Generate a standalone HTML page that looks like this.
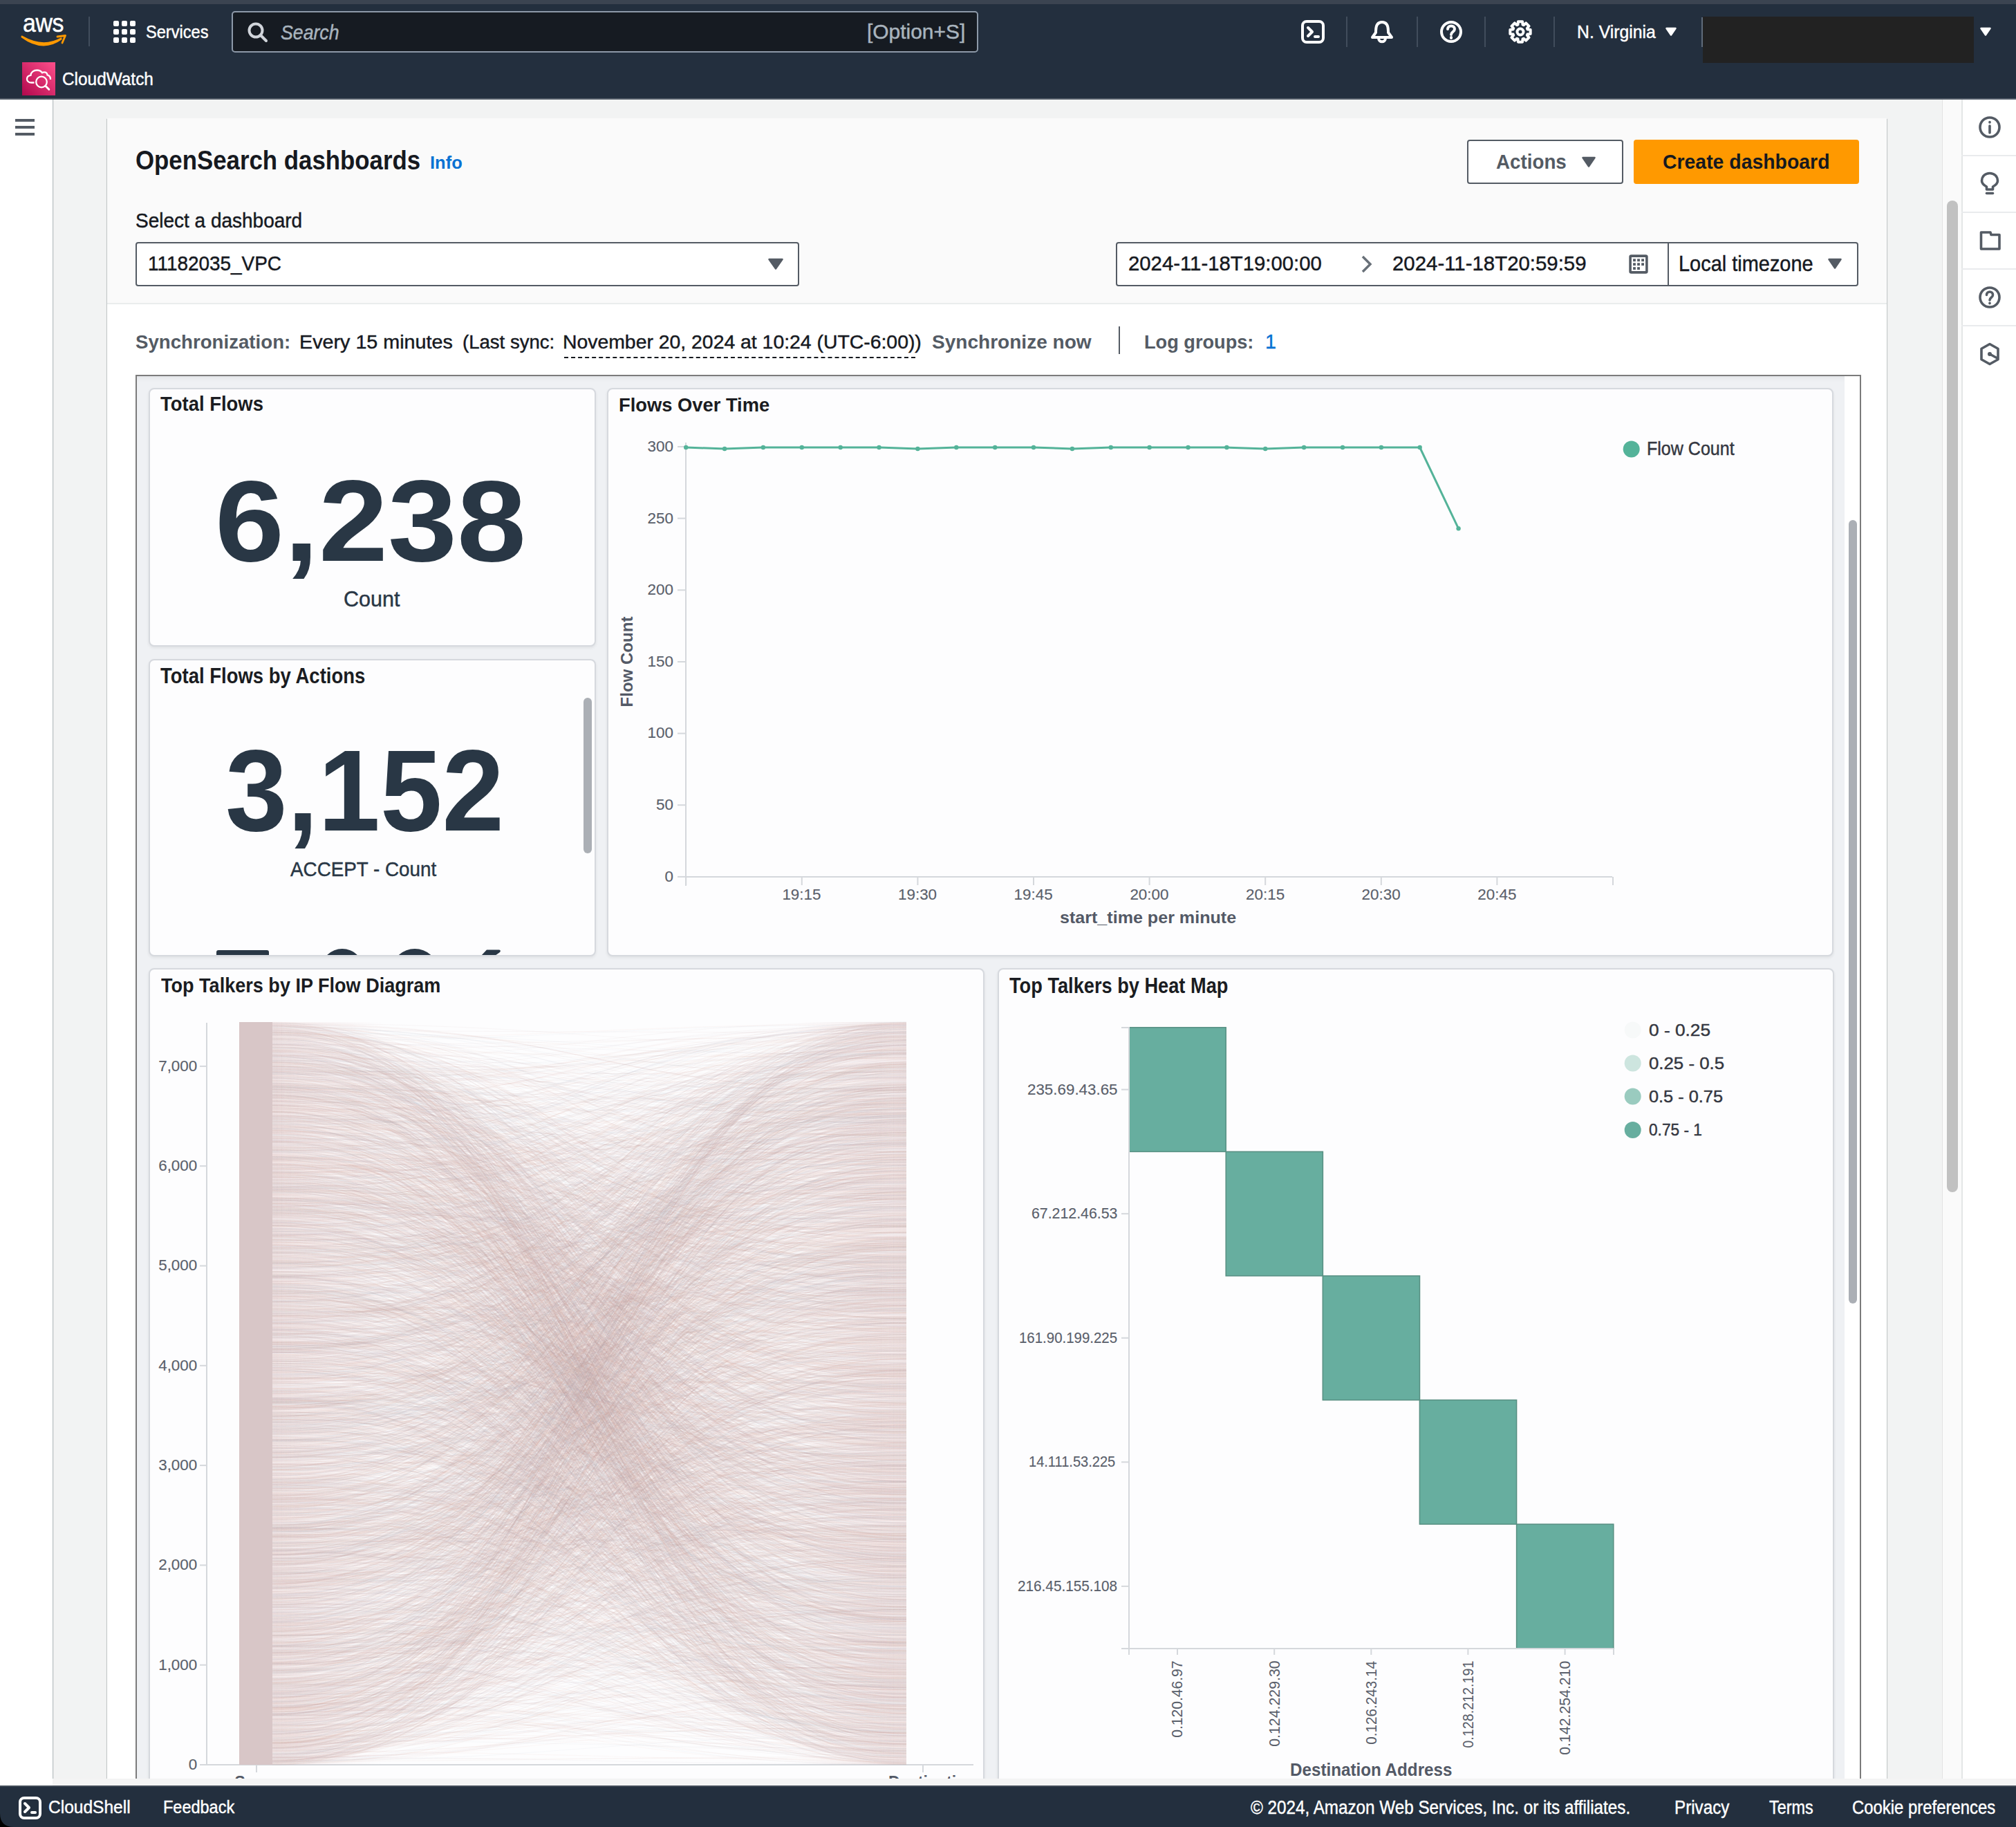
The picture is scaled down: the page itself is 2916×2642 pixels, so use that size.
<!DOCTYPE html><html><head><meta charset="utf-8"><style>
html,body{margin:0;padding:0;}
body{width:2916px;height:2642px;position:relative;overflow:hidden;background:#f2f3f3;font-family:"Liberation Sans",sans-serif;}
.t{position:absolute;white-space:nowrap;line-height:1;transform-origin:0 0;}
.r{position:absolute;}
</style></head><body>
<div class="r" style="left:0px;top:0px;width:2916px;height:6px;background:#3b4451;"></div>
<div class="r" style="left:0px;top:6px;width:2916px;height:138px;background:#232f3e;"></div>
<div class="r" style="left:0px;top:142px;width:2916px;height:2px;background:#535c68;"></div>
<div class="r" style="left:0px;top:144px;width:76px;height:2438px;background:#ffffff;box-shadow:1px 0 1px rgba(0,28,36,.25);"></div>
<div class="r" style="left:22px;top:172px;width:28px;height:4px;background:#545b64;"></div>
<div class="r" style="left:22px;top:182px;width:28px;height:4px;background:#545b64;"></div>
<div class="r" style="left:22px;top:192px;width:28px;height:4px;background:#545b64;"></div>
<div class="r" style="left:2809px;top:144px;width:28px;height:2438px;background:#fafafa;border-left:1px solid #e3e3e3;box-sizing:border-box;"></div>
<div class="r" style="left:2837px;top:144px;width:79px;height:2438px;background:#ffffff;border-left:2px solid #e4e6e6;box-sizing:border-box;"></div>
<div class="r" style="left:2837px;top:224px;width:79px;height:2px;background:#e9ebed;"></div>
<div class="r" style="left:2837px;top:306px;width:79px;height:2px;background:#e9ebed;"></div>
<div class="r" style="left:2837px;top:388px;width:79px;height:2px;background:#e9ebed;"></div>
<div class="r" style="left:2837px;top:470px;width:79px;height:2px;background:#e9ebed;"></div>
<div class="r" style="left:2816px;top:290px;width:16px;height:1434px;background:#c1c1c1;border-radius:8px;"></div>
<div class="r" style="left:155px;top:171px;width:2574px;height:2401px;background:#ffffff;box-shadow:0 1px 1px 0 rgba(0,28,36,.3),1px 1px 1px 0 rgba(0,28,36,.15),-1px 1px 1px 0 rgba(0,28,36,.15);"></div>
<div class="r" style="left:155px;top:171px;width:2574px;height:267px;background:#fafafa;"></div>
<div class="r" style="left:155px;top:438px;width:2574px;height:2px;background:#eaeded;"></div>
<div class="r" style="left:196px;top:542px;width:2496px;height:2030px;background:#eff1f4;border:2px solid #7b7b7b;border-bottom:none;box-sizing:border-box;box-shadow:inset 0 6px 6px -3px rgba(0,0,0,0.06);"></div>
<div class="r" style="left:2668px;top:544px;width:22px;height:2028px;background:#ffffff;"></div>
<div class="r" style="left:2674px;top:752px;width:12px;height:1133px;background:#abafb5;border-radius:6px;"></div>
<div class="r" style="left:215px;top:561px;width:647px;height:374px;background:;background:#fdfdfe;border:2px solid #d6d9de;box-sizing:border-box;border-radius:8px;box-shadow:0 2px 4px rgba(0,0,0,.07);"></div>
<div class="r" style="left:215px;top:953px;width:647px;height:430px;background:;background:#fdfdfe;border:2px solid #d6d9de;box-sizing:border-box;border-radius:8px;box-shadow:0 2px 4px rgba(0,0,0,.07);overflow:hidden;"></div>
<div class="r" style="left:878px;top:561px;width:1774px;height:822px;background:;background:#fdfdfe;border:2px solid #d6d9de;box-sizing:border-box;border-radius:8px;box-shadow:0 2px 4px rgba(0,0,0,.07);"></div>
<div class="r" style="left:215px;top:1400px;width:1209px;height:1200px;background:;background:#fdfdfe;border:2px solid #d6d9de;box-sizing:border-box;border-radius:8px;box-shadow:0 2px 4px rgba(0,0,0,.07);"></div>
<div class="r" style="left:1443px;top:1400px;width:1210px;height:1200px;background:;background:#fdfdfe;border:2px solid #d6d9de;box-sizing:border-box;border-radius:8px;box-shadow:0 2px 4px rgba(0,0,0,.07);"></div>
<div class="t" style="left:32.9px;top:15.8px;font-size:36.50px;color:#ffffff;transform:scaleX(0.9284);-webkit-text-stroke:0.45px #ffffff;letter-spacing:-0.5px;">aws</div>
<svg class="r" style="left:28px;top:46px;" width="72" height="24" viewBox="0 0 72 24"><path d="M3.5 6.3 Q34 24 60.5 9.2 L60.8 10.6 Q34 30 3.3 7.5 Z" fill="#ff9900" stroke="#ff9900" stroke-width="1.6" stroke-linejoin="round"/><path d="M55 7 L66.5 5.5 L62 16" stroke="#ff9900" stroke-width="2.8" fill="none" stroke-linecap="round" stroke-linejoin="round"/></svg>
<div class="r" style="left:128px;top:24px;width:2px;height:43px;background:#414d5c;"></div>
<svg class="r" style="left:164px;top:30px;" width="32" height="32" viewBox="0 0 32 32"><rect x="0" y="0" width="8" height="8" rx="2" fill="#fff"/><rect x="0" y="12" width="8" height="8" rx="2" fill="#fff"/><rect x="0" y="24" width="8" height="8" rx="2" fill="#fff"/><rect x="12" y="0" width="8" height="8" rx="2" fill="#fff"/><rect x="12" y="12" width="8" height="8" rx="2" fill="#fff"/><rect x="12" y="24" width="8" height="8" rx="2" fill="#fff"/><rect x="24" y="0" width="8" height="8" rx="2" fill="#fff"/><rect x="24" y="12" width="8" height="8" rx="2" fill="#fff"/><rect x="24" y="24" width="8" height="8" rx="2" fill="#fff"/></svg>
<div class="t" style="left:210.9px;top:33.6px;font-size:25.87px;color:#ffffff;transform:scaleX(0.9125);-webkit-text-stroke:0.45px #ffffff;">Services</div>
<div class="r" style="left:335px;top:16px;width:1080px;height:60px;background:#161b22;border:2px solid #8d99a8;border-radius:5px;box-sizing:border-box;"></div>
<svg class="r" style="left:358px;top:32px;" width="30" height="30" viewBox="0 0 30 30"><circle cx="12" cy="12" r="9.5" stroke="#d1d5db" stroke-width="4" fill="none"/><path d="M19 19 L27 27" stroke="#d1d5db" stroke-width="4" stroke-linecap="round"/></svg>
<div class="t" style="left:406.2px;top:31.7px;font-size:30.23px;color:#a9b4be;transform:scaleX(0.8830);-webkit-text-stroke:0.45px #a9b4be;font-style:italic;">Search</div>
<div class="t" style="left:1253.9px;top:31.3px;font-size:29.80px;color:#a9b4be;transform:scaleX(1.0046);-webkit-text-stroke:0.45px #a9b4be;">[Option+S]</div>
<svg class="r" style="left:1882px;top:29px;" width="34" height="34" viewBox="0 0 34 34"><rect x="2" y="2" width="30" height="30" rx="6" stroke="#fff" stroke-width="4" fill="none" stroke-linecap="round" stroke-linejoin="round"/><path d="M10 11 L16 17 L10 23" stroke="#fff" stroke-width="4" fill="none" stroke-linecap="round" stroke-linejoin="round"/><path d="M20 24 L25 24" stroke="#fff" stroke-width="4" fill="none" stroke-linecap="round" stroke-linejoin="round"/></svg>
<div class="r" style="left:1947px;top:24px;width:2px;height:44px;background:#414d5c;"></div>
<svg class="r" style="left:1982px;top:29px;" width="34" height="34" viewBox="0 0 34 34"><path d="M17 3 C9 3 8 10 8 16 L8 18 L3 25 L31 25 L26 18 L26 16 C26 10 25 3 17 3Z" stroke="#fff" stroke-width="4" fill="none" stroke-linecap="round" stroke-linejoin="round"/><path d="M12 26 C12 33 22 33 22 26" stroke="#fff" stroke-width="4" fill="none" stroke-linecap="round" stroke-linejoin="round"/></svg>
<div class="r" style="left:2049px;top:24px;width:2px;height:44px;background:#414d5c;"></div>
<svg class="r" style="left:2082px;top:29px;" width="34" height="34" viewBox="0 0 34 34"><circle cx="17" cy="17" r="14" stroke="#fff" stroke-width="4" fill="none" stroke-linecap="round" stroke-linejoin="round"/><path d="M12 13 C12 7 22 7 22 13 C22 17 17 17 17 21" stroke="#fff" stroke-width="4" fill="none" stroke-linecap="round" stroke-linejoin="round"/><path d="M17 25 L17 26" stroke="#fff" stroke-width="4" fill="none" stroke-linecap="round" stroke-linejoin="round"/></svg>
<div class="r" style="left:2147px;top:24px;width:2px;height:44px;background:#414d5c;"></div>
<svg class="r" style="left:2182px;top:29px;" width="34" height="34" viewBox="0 0 34 34"><path d="M27.43 13.51 L31.67 13.88 L31.67 20.12 L27.43 20.49 L26.84 21.91 L29.58 25.17 L25.17 29.58 L21.91 26.84 L20.49 27.43 L20.12 31.67 L13.88 31.67 L13.51 27.43 L12.09 26.84 L8.83 29.58 L4.42 25.17 L7.16 21.91 L6.57 20.49 L2.33 20.12 L2.33 13.88 L6.57 13.51 L7.16 12.09 L4.42 8.83 L8.83 4.42 L12.09 7.16 L13.51 6.57 L13.88 2.33 L20.12 2.33 L20.49 6.57 L21.91 7.16 L25.17 4.42 L29.58 8.83 L26.84 12.09 Z" stroke="#fff" stroke-width="4" fill="none" stroke-linecap="round" stroke-linejoin="round"/><circle cx="17" cy="17" r="4.5" stroke="#fff" stroke-width="4" fill="none" stroke-linecap="round" stroke-linejoin="round"/></svg>
<div class="r" style="left:2247px;top:24px;width:2px;height:44px;background:#414d5c;"></div>
<div class="t" style="left:2280.8px;top:33.6px;font-size:25.87px;color:#ffffff;transform:scaleX(0.9572);-webkit-text-stroke:0.45px #ffffff;">N. Virginia</div>
<svg class="r" style="left:2408px;top:39px;" width="18" height="14" viewBox="0 0 18 14"><path d="M2.5 2 L15.5 2 L9 11.5Z" fill="#fff" stroke="#fff" stroke-width="2.5" stroke-linejoin="round"/></svg>
<div class="r" style="left:2461px;top:25px;width:2px;height:43px;background:#5f6b7a;"></div>
<div class="r" style="left:2463px;top:24px;width:392px;height:67px;background:#222222;"></div>
<svg class="r" style="left:2863px;top:39px;" width="18" height="14" viewBox="0 0 18 14"><path d="M2.5 2 L15.5 2 L9 11.5Z" fill="#fff" stroke="#fff" stroke-width="2.5" stroke-linejoin="round"/></svg>
<div class="r" style="left:32px;top:90px;width:48px;height:48px;background:linear-gradient(45deg,#b0084d,#ff4f8b);"></div>
<svg class="r" style="left:32px;top:90px;" width="48" height="48" viewBox="0 0 48 48"><path d="M17.5 29.5 L13.5 29.5 C9.5 29.5 7 27 7 24.2 C7 21.2 9.5 19.2 12.5 18.8 C12.5 14.7 16.5 11.5 21.5 11.5 C25 11.5 27.5 13.1 29 15.2 C30 14.6 31 14.4 32 14.4 C34.5 14.4 36.2 16 36.5 18.3 C39.5 19.2 41 21.8 41 24.3 L41 25.1" stroke="#fff" stroke-width="2.3" fill="none" stroke-linecap="butt"/><circle cx="28" cy="28.5" r="7.8" stroke="#fff" stroke-width="2.3" fill="none"/><path d="M33.8 34.3 L38.8 39.3" stroke="#fff" stroke-width="3" stroke-linecap="round"/></svg>
<div class="t" style="left:89.8px;top:100.8px;font-size:26.16px;color:#ffffff;transform:scaleX(0.9321);-webkit-text-stroke:0.45px #ffffff;">CloudWatch</div>
<div class="t" style="left:196.0px;top:212.3px;font-size:39.68px;color:#16191f;transform:scaleX(0.8775);font-weight:700;">OpenSearch dashboards</div>
<div class="t" style="left:622.3px;top:222.9px;font-size:25.58px;color:#0972d3;transform:scaleX(0.9962);font-weight:700;">Info</div>
<div class="r" style="left:2122px;top:202px;width:226px;height:64px;background:#ffffff;border:2px solid #545b64;border-radius:4px;box-sizing:border-box;"></div>
<div class="t" style="left:2164.3px;top:219.1px;font-size:29.94px;color:#545b64;transform:scaleX(0.9274);font-weight:700;">Actions</div>
<svg class="r" style="left:2287px;top:226px;" width="23" height="17" viewBox="0 0 23 17"><path d="M2.5 2 L19.5 2 L11 14.5Z" fill="#545b64" stroke="#545b64" stroke-width="2.5" stroke-linejoin="round"/></svg>
<div class="r" style="left:2363px;top:202px;width:326px;height:64px;background:#ff9900;border-radius:4px;"></div>
<div class="t" style="left:2405.3px;top:219.1px;font-size:29.94px;color:#16191f;transform:scaleX(0.9488);font-weight:700;">Create dashboard</div>
<div class="t" style="left:196.1px;top:304.3px;font-size:29.80px;color:#16191f;transform:scaleX(0.9393);-webkit-text-stroke:0.45px #16191f;">Select a dashboard</div>
<div class="r" style="left:196px;top:350px;width:960px;height:64px;background:#ffffff;border:2px solid #545b64;border-radius:4px;box-sizing:border-box;"></div>
<div class="t" style="left:213.9px;top:367.4px;font-size:29.07px;color:#16191f;transform:scaleX(0.9606);-webkit-text-stroke:0.45px #16191f;">11182035_VPC</div>
<svg class="r" style="left:1110px;top:373px;" width="24" height="18" viewBox="0 0 24 18"><path d="M2.5 2 L21.5 2 L12 15.5Z" fill="#545b64" stroke="#545b64" stroke-width="2.5" stroke-linejoin="round"/></svg>
<div class="r" style="left:1614px;top:350px;width:800px;height:64px;background:#ffffff;border:2px solid #545b64;border-radius:4px 0 0 4px;box-sizing:border-box;"></div>
<div class="t" style="left:1631.5px;top:366.2px;font-size:30.23px;color:#16191f;transform:scaleX(0.9702);-webkit-text-stroke:0.45px #16191f;">2024-11-18T19:00:00</div>
<svg class="r" style="left:1966px;top:368px;" width="24" height="28" viewBox="0 0 24 28"><path d="M5 3 L16 14 L5 25" stroke="#687078" stroke-width="3.5" fill="none"/></svg>
<div class="t" style="left:2013.5px;top:366.2px;font-size:30.23px;color:#16191f;transform:scaleX(0.9727);-webkit-text-stroke:0.45px #16191f;">2024-11-18T20:59:59</div>
<svg class="r" style="left:2354px;top:366px;" width="32" height="32" viewBox="0 0 32 32"><rect x="4.1" y="4.1" width="23.8" height="23.8" rx="1.5" stroke="#545b64" stroke-width="3.6" fill="none"/><rect x="8.10" y="8.30" width="3.8" height="3.8" fill="#545b64"/><rect x="8.10" y="14.25" width="3.8" height="3.8" fill="#545b64"/><rect x="8.10" y="20.20" width="3.8" height="3.8" fill="#545b64"/><rect x="14.15" y="8.30" width="3.8" height="3.8" fill="#545b64"/><rect x="14.15" y="14.25" width="3.8" height="3.8" fill="#545b64"/><rect x="14.15" y="20.20" width="3.8" height="3.8" fill="#545b64"/><rect x="20.20" y="8.30" width="3.8" height="3.8" fill="#545b64"/><rect x="20.20" y="14.25" width="3.8" height="3.8" fill="#545b64"/></svg>
<div class="r" style="left:2412px;top:350px;width:276px;height:64px;background:#ffffff;border:2px solid #545b64;border-radius:0 4px 4px 0;box-sizing:border-box;"></div>
<div class="t" style="left:2427.6px;top:366.2px;font-size:31.25px;color:#16191f;transform:scaleX(0.9261);-webkit-text-stroke:0.45px #16191f;">Local timezone</div>
<svg class="r" style="left:2643px;top:373px;" width="23" height="18" viewBox="0 0 23 18"><path d="M2.5 2 L19.5 2 L11 14.5Z" fill="#545b64" stroke="#545b64" stroke-width="2.5" stroke-linejoin="round"/></svg>
<div class="t" style="left:195.6px;top:479.5px;font-size:28.34px;color:#545b64;transform:scaleX(0.9759);font-weight:700;">Synchronization:</div>
<div class="t" style="left:432.6px;top:479.5px;font-size:28.34px;color:#16191f;transform:scaleX(1.0138);-webkit-text-stroke:0.45px #16191f;">Every 15 minutes</div>
<div class="t" style="left:669.3px;top:479.5px;font-size:28.34px;color:#16191f;transform:scaleX(0.9722);-webkit-text-stroke:0.45px #16191f;">(Last sync:</div>
<div class="t" style="left:813.7px;top:479.5px;font-size:28.34px;color:#16191f;transform:scaleX(1.0015);-webkit-text-stroke:0.45px #16191f;">November 20, 2024 at 10:24 (UTC-6:00))</div>
<div class="r" style="left:816px;top:516px;width:508px;height:0;border-top:2px dashed #16191f;"></div>
<div class="t" style="left:1348.2px;top:479.5px;font-size:28.34px;color:#545b64;transform:scaleX(0.9901);font-weight:700;">Synchronize now</div>
<div class="r" style="left:1618px;top:472px;width:2px;height:40px;background:#545b64;"></div>
<div class="t" style="left:1655.2px;top:479.5px;font-size:28.34px;color:#545b64;transform:scaleX(0.9585);font-weight:700;">Log groups:</div>
<div class="t" style="left:1830.4px;top:480.4px;font-size:29.07px;color:#0972d3;transform:scaleX(0.9893);-webkit-text-stroke:0.45px #0972d3;">1</div>
<div class="t" style="left:232.1px;top:570.4px;font-size:29.07px;color:#1a1c21;transform:scaleX(0.9447);font-weight:700;">Total Flows</div>
<div class="t" style="left:311.4px;top:670.1px;font-size:167.59px;color:#293745;transform:scaleX(1.0733);font-weight:700;">6,238</div>
<div class="t" style="left:496.5px;top:851.0px;font-size:31.40px;color:#293745;transform:scaleX(0.9713);-webkit-text-stroke:0.45px #293745;">Count</div>
<div class="t" style="left:231.7px;top:962.2px;font-size:30.52px;color:#1a1c21;transform:scaleX(0.9009);font-weight:700;">Total Flows by Actions</div>
<div class="t" style="left:326.3px;top:1059.6px;font-size:166.42px;color:#293745;transform:scaleX(0.9680);font-weight:700;">3,152</div>
<div class="t" style="left:420.4px;top:1242.0px;font-size:29.51px;color:#293745;transform:scaleX(0.9427);-webkit-text-stroke:0.45px #293745;">ACCEPT - Count</div>
<svg class="r" style="left:217px;top:1360px;" width="642" height="21" viewBox="0 0 642 21"><rect x="96" y="14" width="76" height="14" rx="3" fill="#293745"/><ellipse cx="278" cy="41" rx="30" ry="29" fill="#293745"/><ellipse cx="383" cy="41" rx="32" ry="29" fill="#293745"/><path d="M487 13.5 L505 13.5 Q508 14 506 17 L499 22 L479 22 Z" fill="#293745"/></svg>
<div class="r" style="left:844px;top:1009px;width:12px;height:225px;background:#abafb5;border-radius:6px;"></div>
<div class="t" style="left:895.2px;top:571.6px;font-size:27.62px;color:#1a1c21;transform:scaleX(0.9899);font-weight:700;">Flows Over Time</div>
<svg class="r" style="left:0;top:0" width="2916" height="2642"><line x1="992" y1="640" x2="992" y2="1281" stroke="#d5d8dc" stroke-width="2"/><line x1="992" y1="1268" x2="2332" y2="1268" stroke="#d5d8dc" stroke-width="2"/><line x1="980" y1="646.0" x2="992" y2="646.0" stroke="#d5d8dc" stroke-width="2"/><line x1="980" y1="749.6" x2="992" y2="749.6" stroke="#d5d8dc" stroke-width="2"/><line x1="980" y1="853.3" x2="992" y2="853.3" stroke="#d5d8dc" stroke-width="2"/><line x1="980" y1="957.0" x2="992" y2="957.0" stroke="#d5d8dc" stroke-width="2"/><line x1="980" y1="1060.6" x2="992" y2="1060.6" stroke="#d5d8dc" stroke-width="2"/><line x1="980" y1="1164.2" x2="992" y2="1164.2" stroke="#d5d8dc" stroke-width="2"/><line x1="980" y1="1267.9" x2="992" y2="1267.9" stroke="#d5d8dc" stroke-width="2"/><line x1="992.2" y1="1268" x2="992.2" y2="1280" stroke="#d5d8dc" stroke-width="2"/><line x1="1159.8" y1="1268" x2="1159.8" y2="1280" stroke="#d5d8dc" stroke-width="2"/><line x1="1327.4" y1="1268" x2="1327.4" y2="1280" stroke="#d5d8dc" stroke-width="2"/><line x1="1495.0" y1="1268" x2="1495.0" y2="1280" stroke="#d5d8dc" stroke-width="2"/><line x1="1662.6" y1="1268" x2="1662.6" y2="1280" stroke="#d5d8dc" stroke-width="2"/><line x1="1830.2" y1="1268" x2="1830.2" y2="1280" stroke="#d5d8dc" stroke-width="2"/><line x1="1997.8" y1="1268" x2="1997.8" y2="1280" stroke="#d5d8dc" stroke-width="2"/><line x1="2165.4" y1="1268" x2="2165.4" y2="1280" stroke="#d5d8dc" stroke-width="2"/><line x1="2333.0" y1="1268" x2="2333.0" y2="1280" stroke="#d5d8dc" stroke-width="2"/><polyline points="992.2,647.0 1048.1,649.0 1103.9,647.0 1159.8,647.0 1215.7,647.0 1271.5,647.0 1327.4,649.0 1383.3,647.0 1439.2,647.0 1495.0,647.0 1550.9,649.0 1606.8,647.0 1662.6,647.0 1718.5,647.0 1774.4,647.0 1830.2,649.0 1886.1,647.0 1942.0,647.0 1997.9,647.0 2053.7,647.0 2109.6,764.3" stroke="#54b399" stroke-width="3" fill="none" stroke-linejoin="round"/><circle cx="992.2" cy="647.0" r="3.2" fill="#54b399"/><circle cx="1048.1" cy="649.0" r="3.2" fill="#54b399"/><circle cx="1103.9" cy="647.0" r="3.2" fill="#54b399"/><circle cx="1159.8" cy="647.0" r="3.2" fill="#54b399"/><circle cx="1215.7" cy="647.0" r="3.2" fill="#54b399"/><circle cx="1271.5" cy="647.0" r="3.2" fill="#54b399"/><circle cx="1327.4" cy="649.0" r="3.2" fill="#54b399"/><circle cx="1383.3" cy="647.0" r="3.2" fill="#54b399"/><circle cx="1439.2" cy="647.0" r="3.2" fill="#54b399"/><circle cx="1495.0" cy="647.0" r="3.2" fill="#54b399"/><circle cx="1550.9" cy="649.0" r="3.2" fill="#54b399"/><circle cx="1606.8" cy="647.0" r="3.2" fill="#54b399"/><circle cx="1662.6" cy="647.0" r="3.2" fill="#54b399"/><circle cx="1718.5" cy="647.0" r="3.2" fill="#54b399"/><circle cx="1774.4" cy="647.0" r="3.2" fill="#54b399"/><circle cx="1830.2" cy="649.0" r="3.2" fill="#54b399"/><circle cx="1886.1" cy="647.0" r="3.2" fill="#54b399"/><circle cx="1942.0" cy="647.0" r="3.2" fill="#54b399"/><circle cx="1997.9" cy="647.0" r="3.2" fill="#54b399"/><circle cx="2053.7" cy="647.0" r="3.2" fill="#54b399"/><circle cx="2109.6" cy="764.3" r="3.2" fill="#54b399"/><circle cx="2359.7" cy="649.5" r="12" fill="#54b399"/></svg>
<div class="t" style="left:936.5px;top:634.8px;font-size:22.40px;color:#5a606b;transform:scaleX(1.0000);-webkit-text-stroke:0.15px #5a606b;">300</div>
<div class="t" style="left:936.5px;top:738.5px;font-size:22.40px;color:#5a606b;transform:scaleX(1.0000);-webkit-text-stroke:0.15px #5a606b;">250</div>
<div class="t" style="left:936.5px;top:842.1px;font-size:22.40px;color:#5a606b;transform:scaleX(1.0000);-webkit-text-stroke:0.15px #5a606b;">200</div>
<div class="t" style="left:936.5px;top:945.8px;font-size:22.40px;color:#5a606b;transform:scaleX(1.0000);-webkit-text-stroke:0.15px #5a606b;">150</div>
<div class="t" style="left:936.5px;top:1049.4px;font-size:22.40px;color:#5a606b;transform:scaleX(1.0000);-webkit-text-stroke:0.15px #5a606b;">100</div>
<div class="t" style="left:949.0px;top:1153.1px;font-size:22.40px;color:#5a606b;transform:scaleX(1.0000);-webkit-text-stroke:0.15px #5a606b;">50</div>
<div class="t" style="left:961.4px;top:1256.7px;font-size:22.40px;color:#5a606b;transform:scaleX(1.0000);-webkit-text-stroke:0.15px #5a606b;">0</div>
<div class="t" style="left:1131.4px;top:1282.5px;font-size:22.40px;color:#5a606b;transform:scaleX(1.0000);-webkit-text-stroke:0.15px #5a606b;">19:15</div>
<div class="t" style="left:1299.0px;top:1282.5px;font-size:22.40px;color:#5a606b;transform:scaleX(1.0000);-webkit-text-stroke:0.15px #5a606b;">19:30</div>
<div class="t" style="left:1466.6px;top:1282.5px;font-size:22.40px;color:#5a606b;transform:scaleX(1.0000);-webkit-text-stroke:0.15px #5a606b;">19:45</div>
<div class="t" style="left:1634.4px;top:1282.5px;font-size:22.40px;color:#5a606b;transform:scaleX(1.0000);-webkit-text-stroke:0.15px #5a606b;">20:00</div>
<div class="t" style="left:1802.1px;top:1282.5px;font-size:22.40px;color:#5a606b;transform:scaleX(1.0000);-webkit-text-stroke:0.15px #5a606b;">20:15</div>
<div class="t" style="left:1969.6px;top:1282.5px;font-size:22.40px;color:#5a606b;transform:scaleX(1.0000);-webkit-text-stroke:0.15px #5a606b;">20:30</div>
<div class="t" style="left:2137.3px;top:1282.5px;font-size:22.40px;color:#5a606b;transform:scaleX(1.0000);-webkit-text-stroke:0.15px #5a606b;">20:45</div>
<div class="t" style="left:1532.7px;top:1315.1px;font-size:24.71px;color:#535966;transform:scaleX(1.0154);font-weight:700;">start_time per minute</div>
<div class="t" style="left:2382.4px;top:636.4px;font-size:26.74px;color:#343741;transform:scaleX(0.9370);-webkit-text-stroke:0.45px #343741;">Flow Count</div>
<div class="t" style="left:915.0px;top:1003.1px;font-size:23.0px;font-weight:700;color:#535966;transform-origin:0 19.47px;transform:rotate(-90deg) scaleX(1.0457);">Flow Count</div>
<div class="t" style="left:232.7px;top:1410.2px;font-size:29.94px;color:#1a1c21;transform:scaleX(0.9037);font-weight:700;">Top Talkers by IP Flow Diagram</div>
<svg class="r" style="left:0;top:0" width="2916" height="2642"><line x1="299" y1="1479" x2="299" y2="2553" stroke="#d5d8dc" stroke-width="2"/><line x1="290" y1="2552" x2="1408" y2="2552" stroke="#d5d8dc" stroke-width="2"/><line x1="289" y1="2552.0" x2="299" y2="2552.0" stroke="#d5d8dc" stroke-width="2"/><line x1="289" y1="2407.7" x2="299" y2="2407.7" stroke="#d5d8dc" stroke-width="2"/><line x1="289" y1="2263.4" x2="299" y2="2263.4" stroke="#d5d8dc" stroke-width="2"/><line x1="289" y1="2119.1" x2="299" y2="2119.1" stroke="#d5d8dc" stroke-width="2"/><line x1="289" y1="1974.8" x2="299" y2="1974.8" stroke="#d5d8dc" stroke-width="2"/><line x1="289" y1="1830.5" x2="299" y2="1830.5" stroke="#d5d8dc" stroke-width="2"/><line x1="289" y1="1686.2" x2="299" y2="1686.2" stroke="#d5d8dc" stroke-width="2"/><line x1="289" y1="1541.9" x2="299" y2="1541.9" stroke="#d5d8dc" stroke-width="2"/><line x1="371" y1="2552" x2="371" y2="2563" stroke="#d5d8dc" stroke-width="2"/><line x1="1335" y1="2552" x2="1335" y2="2563" stroke="#d5d8dc" stroke-width="2"/><defs><linearGradient id="gl" x1="0" x2="1" y1="0" y2="0"><stop offset="0" stop-color="#d9b3b3" stop-opacity="0.22"/><stop offset="1" stop-color="#d9b3b3" stop-opacity="0"/></linearGradient><linearGradient id="gr" x1="1" x2="0" y1="0" y2="0"><stop offset="0" stop-color="#d9b3b3" stop-opacity="0.22"/><stop offset="1" stop-color="#d9b3b3" stop-opacity="0"/></linearGradient></defs><rect x="394" y="1478" width="160" height="1074" fill="url(#gl)"/><rect x="1151" y="1478" width="160" height="1074" fill="url(#gr)"/><rect x="346" y="1478" width="48" height="1074" fill="#d8c6c7"/><g stroke="#d6a4a0" stroke-opacity="0.072" stroke-width="1.2" fill="none"><path d="M394 1530C852 1530 852 2360 1311 2360"/><path d="M394 2155C852 2155 852 2104 1311 2104"/><path d="M394 1878C852 1878 852 2066 1311 2066"/><path d="M394 1960C852 1960 852 2132 1311 2132"/><path d="M394 2011C852 2011 852 2334 1311 2334"/><path d="M394 1640C852 1640 852 2185 1311 2185"/><path d="M394 2125C852 2125 852 1987 1311 1987"/><path d="M394 1867C852 1867 852 2219 1311 2219"/><path d="M394 2007C852 2007 852 2263 1311 2263"/><path d="M394 1944C852 1944 852 2161 1311 2161"/><path d="M394 1975C852 1975 852 2276 1311 2276"/><path d="M394 1645C852 1645 852 2067 1311 2067"/><path d="M394 2312C852 2312 852 2427 1311 2427"/><path d="M394 1583C852 1583 852 1964 1311 1964"/><path d="M394 2380C852 2380 852 1625 1311 1625"/><path d="M394 2517C852 2517 852 1714 1311 1714"/><path d="M394 2034C852 2034 852 1795 1311 1795"/><path d="M394 2091C852 2091 852 2230 1311 2230"/><path d="M394 1935C852 1935 852 1556 1311 1556"/><path d="M394 2159C852 2159 852 2339 1311 2339"/><path d="M394 2533C852 2533 852 2377 1311 2377"/><path d="M394 1483C852 1483 852 1762 1311 1762"/><path d="M394 2168C852 2168 852 1569 1311 1569"/><path d="M394 1621C852 1621 852 1865 1311 1865"/><path d="M394 1882C852 1882 852 1963 1311 1963"/><path d="M394 1805C852 1805 852 2088 1311 2088"/><path d="M394 2284C852 2284 852 2379 1311 2379"/><path d="M394 2487C852 2487 852 1688 1311 1688"/><path d="M394 1879C852 1879 852 2505 1311 2505"/><path d="M394 2068C852 2068 852 2251 1311 2251"/><path d="M394 1883C852 1883 852 1841 1311 1841"/><path d="M394 2327C852 2327 852 2389 1311 2389"/><path d="M394 2389C852 2389 852 2415 1311 2415"/><path d="M394 1641C852 1641 852 2522 1311 2522"/><path d="M394 2387C852 2387 852 2439 1311 2439"/><path d="M394 1613C852 1613 852 2090 1311 2090"/><path d="M394 2228C852 2228 852 1598 1311 1598"/><path d="M394 2235C852 2235 852 1808 1311 1808"/><path d="M394 1867C852 1867 852 1904 1311 1904"/><path d="M394 1953C852 1953 852 1595 1311 1595"/><path d="M394 1779C852 1779 852 1855 1311 1855"/><path d="M394 1515C852 1515 852 1545 1311 1545"/><path d="M394 1818C852 1818 852 1774 1311 1774"/><path d="M394 2159C852 2159 852 2491 1311 2491"/><path d="M394 1867C852 1867 852 2318 1311 2318"/><path d="M394 1744C852 1744 852 1548 1311 1548"/><path d="M394 2531C852 2531 852 2427 1311 2427"/><path d="M394 1762C852 1762 852 1568 1311 1568"/><path d="M394 1586C852 1586 852 1976 1311 1976"/><path d="M394 1521C852 1521 852 1793 1311 1793"/><path d="M394 1757C852 1757 852 2313 1311 2313"/><path d="M394 2067C852 2067 852 1546 1311 1546"/><path d="M394 2195C852 2195 852 1927 1311 1927"/><path d="M394 1898C852 1898 852 1913 1311 1913"/><path d="M394 1944C852 1944 852 1646 1311 1646"/><path d="M394 1973C852 1973 852 1653 1311 1653"/><path d="M394 1690C852 1690 852 1614 1311 1614"/><path d="M394 2526C852 2526 852 1996 1311 1996"/><path d="M394 2131C852 2131 852 2161 1311 2161"/><path d="M394 2313C852 2313 852 2027 1311 2027"/><path d="M394 2101C852 2101 852 2426 1311 2426"/><path d="M394 1725C852 1725 852 2139 1311 2139"/><path d="M394 2003C852 2003 852 2136 1311 2136"/><path d="M394 1740C852 1740 852 1638 1311 1638"/><path d="M394 2266C852 2266 852 1745 1311 1745"/><path d="M394 2048C852 2048 852 1485 1311 1485"/><path d="M394 1633C852 1633 852 1507 1311 1507"/><path d="M394 2457C852 2457 852 2288 1311 2288"/><path d="M394 1584C852 1584 852 1982 1311 1982"/><path d="M394 1788C852 1788 852 2284 1311 2284"/><path d="M394 1772C852 1772 852 1595 1311 1595"/><path d="M394 1489C852 1489 852 2371 1311 2371"/><path d="M394 1675C852 1675 852 2030 1311 2030"/><path d="M394 2475C852 2475 852 2396 1311 2396"/><path d="M394 2009C852 2009 852 1707 1311 1707"/><path d="M394 2275C852 2275 852 1949 1311 1949"/><path d="M394 2057C852 2057 852 2405 1311 2405"/><path d="M394 2172C852 2172 852 1500 1311 1500"/><path d="M394 1999C852 1999 852 2442 1311 2442"/><path d="M394 1845C852 1845 852 1748 1311 1748"/><path d="M394 2429C852 2429 852 2064 1311 2064"/><path d="M394 1906C852 1906 852 1595 1311 1595"/><path d="M394 2412C852 2412 852 1931 1311 1931"/><path d="M394 1676C852 1676 852 1515 1311 1515"/><path d="M394 1941C852 1941 852 2167 1311 2167"/><path d="M394 2225C852 2225 852 1913 1311 1913"/><path d="M394 1989C852 1989 852 1921 1311 1921"/><path d="M394 2151C852 2151 852 1937 1311 1937"/><path d="M394 2459C852 2459 852 1535 1311 1535"/><path d="M394 2087C852 2087 852 1792 1311 1792"/><path d="M394 2345C852 2345 852 1782 1311 1782"/><path d="M394 1695C852 1695 852 1706 1311 1706"/><path d="M394 2033C852 2033 852 1638 1311 1638"/><path d="M394 1566C852 1566 852 1817 1311 1817"/><path d="M394 1848C852 1848 852 2036 1311 2036"/><path d="M394 2546C852 2546 852 1884 1311 1884"/><path d="M394 2450C852 2450 852 2377 1311 2377"/><path d="M394 2173C852 2173 852 2536 1311 2536"/><path d="M394 1587C852 1587 852 1819 1311 1819"/><path d="M394 2248C852 2248 852 1688 1311 1688"/><path d="M394 1647C852 1647 852 2372 1311 2372"/><path d="M394 1628C852 1628 852 1958 1311 1958"/><path d="M394 2472C852 2472 852 1892 1311 1892"/><path d="M394 1824C852 1824 852 1729 1311 1729"/><path d="M394 1601C852 1601 852 2529 1311 2529"/><path d="M394 2079C852 2079 852 2375 1311 2375"/><path d="M394 2242C852 2242 852 1689 1311 1689"/><path d="M394 1916C852 1916 852 2253 1311 2253"/><path d="M394 2479C852 2479 852 2518 1311 2518"/><path d="M394 2442C852 2442 852 1791 1311 1791"/><path d="M394 1747C852 1747 852 2356 1311 2356"/><path d="M394 2296C852 2296 852 1596 1311 1596"/><path d="M394 2125C852 2125 852 1517 1311 1517"/><path d="M394 2353C852 2353 852 2388 1311 2388"/><path d="M394 2190C852 2190 852 1490 1311 1490"/><path d="M394 2549C852 2549 852 1965 1311 1965"/><path d="M394 2347C852 2347 852 2428 1311 2428"/><path d="M394 1586C852 1586 852 1609 1311 1609"/><path d="M394 2051C852 2051 852 1637 1311 1637"/><path d="M394 2435C852 2435 852 2505 1311 2505"/><path d="M394 2204C852 2204 852 1965 1311 1965"/><path d="M394 2205C852 2205 852 2042 1311 2042"/><path d="M394 1543C852 1543 852 2085 1311 2085"/><path d="M394 2254C852 2254 852 2221 1311 2221"/><path d="M394 2095C852 2095 852 1920 1311 1920"/><path d="M394 2136C852 2136 852 2344 1311 2344"/><path d="M394 1749C852 1749 852 2430 1311 2430"/><path d="M394 1706C852 1706 852 2415 1311 2415"/><path d="M394 1812C852 1812 852 1897 1311 1897"/><path d="M394 1823C852 1823 852 2190 1311 2190"/><path d="M394 2015C852 2015 852 1797 1311 1797"/><path d="M394 2220C852 2220 852 2441 1311 2441"/><path d="M394 2198C852 2198 852 2096 1311 2096"/><path d="M394 1615C852 1615 852 2296 1311 2296"/><path d="M394 1659C852 1659 852 1555 1311 1555"/><path d="M394 2061C852 2061 852 1487 1311 1487"/><path d="M394 1562C852 1562 852 2281 1311 2281"/><path d="M394 2378C852 2378 852 1750 1311 1750"/><path d="M394 2162C852 2162 852 1909 1311 1909"/><path d="M394 2144C852 2144 852 2349 1311 2349"/><path d="M394 2085C852 2085 852 1904 1311 1904"/><path d="M394 2245C852 2245 852 2291 1311 2291"/><path d="M394 1732C852 1732 852 1878 1311 1878"/><path d="M394 2209C852 2209 852 2365 1311 2365"/><path d="M394 2496C852 2496 852 2253 1311 2253"/><path d="M394 2067C852 2067 852 2340 1311 2340"/><path d="M394 1600C852 1600 852 1501 1311 1501"/><path d="M394 2001C852 2001 852 1998 1311 1998"/><path d="M394 2416C852 2416 852 2134 1311 2134"/><path d="M394 2438C852 2438 852 2111 1311 2111"/><path d="M394 2100C852 2100 852 1836 1311 1836"/><path d="M394 1632C852 1632 852 1891 1311 1891"/><path d="M394 2186C852 2186 852 2515 1311 2515"/><path d="M394 2467C852 2467 852 2105 1311 2105"/><path d="M394 2219C852 2219 852 2253 1311 2253"/><path d="M394 1774C852 1774 852 1755 1311 1755"/><path d="M394 1754C852 1754 852 1976 1311 1976"/><path d="M394 2291C852 2291 852 1575 1311 1575"/><path d="M394 1640C852 1640 852 2268 1311 2268"/><path d="M394 2247C852 2247 852 2425 1311 2425"/><path d="M394 2520C852 2520 852 2042 1311 2042"/><path d="M394 2158C852 2158 852 2064 1311 2064"/><path d="M394 2047C852 2047 852 2380 1311 2380"/><path d="M394 1494C852 1494 852 1767 1311 1767"/><path d="M394 2076C852 2076 852 1867 1311 1867"/><path d="M394 2365C852 2365 852 2191 1311 2191"/><path d="M394 1817C852 1817 852 2522 1311 2522"/><path d="M394 2412C852 2412 852 1859 1311 1859"/><path d="M394 2186C852 2186 852 2365 1311 2365"/><path d="M394 2438C852 2438 852 2410 1311 2410"/><path d="M394 1790C852 1790 852 2317 1311 2317"/><path d="M394 2248C852 2248 852 1882 1311 1882"/><path d="M394 1696C852 1696 852 2402 1311 2402"/><path d="M394 2389C852 2389 852 2091 1311 2091"/><path d="M394 1822C852 1822 852 1682 1311 1682"/><path d="M394 2027C852 2027 852 1929 1311 1929"/><path d="M394 1700C852 1700 852 1586 1311 1586"/><path d="M394 1695C852 1695 852 1576 1311 1576"/><path d="M394 2193C852 2193 852 1726 1311 1726"/><path d="M394 1718C852 1718 852 2064 1311 2064"/><path d="M394 1940C852 1940 852 2207 1311 2207"/><path d="M394 1497C852 1497 852 2317 1311 2317"/><path d="M394 2120C852 2120 852 2059 1311 2059"/><path d="M394 1651C852 1651 852 1900 1311 1900"/><path d="M394 1514C852 1514 852 2029 1311 2029"/><path d="M394 1994C852 1994 852 1638 1311 1638"/><path d="M394 2011C852 2011 852 2054 1311 2054"/><path d="M394 2435C852 2435 852 1494 1311 1494"/><path d="M394 1705C852 1705 852 2277 1311 2277"/><path d="M394 2034C852 2034 852 1792 1311 1792"/><path d="M394 1556C852 1556 852 1840 1311 1840"/><path d="M394 1666C852 1666 852 1804 1311 1804"/><path d="M394 2215C852 2215 852 2239 1311 2239"/><path d="M394 1545C852 1545 852 2409 1311 2409"/><path d="M394 2386C852 2386 852 2323 1311 2323"/><path d="M394 2368C852 2368 852 2484 1311 2484"/><path d="M394 2049C852 2049 852 2494 1311 2494"/><path d="M394 2143C852 2143 852 1792 1311 1792"/><path d="M394 1608C852 1608 852 2211 1311 2211"/><path d="M394 1488C852 1488 852 2395 1311 2395"/><path d="M394 1869C852 1869 852 2526 1311 2526"/><path d="M394 2418C852 2418 852 2432 1311 2432"/><path d="M394 1694C852 1694 852 2345 1311 2345"/><path d="M394 1823C852 1823 852 1949 1311 1949"/><path d="M394 1650C852 1650 852 2436 1311 2436"/><path d="M394 2429C852 2429 852 2418 1311 2418"/><path d="M394 1621C852 1621 852 1842 1311 1842"/><path d="M394 2471C852 2471 852 1550 1311 1550"/><path d="M394 1612C852 1612 852 1782 1311 1782"/><path d="M394 1627C852 1627 852 1773 1311 1773"/><path d="M394 1511C852 1511 852 2314 1311 2314"/><path d="M394 2194C852 2194 852 2425 1311 2425"/><path d="M394 2523C852 2523 852 2281 1311 2281"/><path d="M394 1817C852 1817 852 1859 1311 1859"/><path d="M394 1967C852 1967 852 1588 1311 1588"/><path d="M394 2260C852 2260 852 2049 1311 2049"/><path d="M394 2433C852 2433 852 2052 1311 2052"/><path d="M394 2451C852 2451 852 1889 1311 1889"/><path d="M394 1551C852 1551 852 2256 1311 2256"/><path d="M394 2337C852 2337 852 2433 1311 2433"/><path d="M394 2340C852 2340 852 1519 1311 1519"/><path d="M394 1653C852 1653 852 2028 1311 2028"/><path d="M394 1510C852 1510 852 2174 1311 2174"/><path d="M394 2391C852 2391 852 2389 1311 2389"/><path d="M394 1485C852 1485 852 1559 1311 1559"/><path d="M394 1564C852 1564 852 1501 1311 1501"/><path d="M394 2324C852 2324 852 2387 1311 2387"/><path d="M394 1712C852 1712 852 2289 1311 2289"/><path d="M394 2245C852 2245 852 1941 1311 1941"/><path d="M394 1631C852 1631 852 1553 1311 1553"/><path d="M394 2224C852 2224 852 1804 1311 1804"/><path d="M394 2262C852 2262 852 2053 1311 2053"/><path d="M394 1866C852 1866 852 1631 1311 1631"/><path d="M394 1664C852 1664 852 2541 1311 2541"/><path d="M394 2149C852 2149 852 2386 1311 2386"/><path d="M394 1672C852 1672 852 1632 1311 1632"/><path d="M394 1871C852 1871 852 2040 1311 2040"/><path d="M394 2376C852 2376 852 1730 1311 1730"/><path d="M394 1986C852 1986 852 2001 1311 2001"/><path d="M394 1972C852 1972 852 2242 1311 2242"/><path d="M394 2455C852 2455 852 1935 1311 1935"/><path d="M394 2026C852 2026 852 1818 1311 1818"/><path d="M394 1779C852 1779 852 2325 1311 2325"/><path d="M394 2179C852 2179 852 2031 1311 2031"/><path d="M394 2169C852 2169 852 2216 1311 2216"/><path d="M394 1566C852 1566 852 1711 1311 1711"/><path d="M394 1692C852 1692 852 1549 1311 1549"/><path d="M394 2525C852 2525 852 2290 1311 2290"/><path d="M394 1652C852 1652 852 2367 1311 2367"/><path d="M394 2102C852 2102 852 2430 1311 2430"/><path d="M394 1658C852 1658 852 1932 1311 1932"/><path d="M394 2517C852 2517 852 2243 1311 2243"/><path d="M394 1533C852 1533 852 2460 1311 2460"/><path d="M394 2517C852 2517 852 2449 1311 2449"/><path d="M394 2512C852 2512 852 1685 1311 1685"/><path d="M394 1706C852 1706 852 1830 1311 1830"/><path d="M394 2165C852 2165 852 2422 1311 2422"/><path d="M394 2193C852 2193 852 2302 1311 2302"/><path d="M394 1921C852 1921 852 2080 1311 2080"/><path d="M394 2321C852 2321 852 1732 1311 1732"/><path d="M394 1992C852 1992 852 1756 1311 1756"/><path d="M394 1496C852 1496 852 1812 1311 1812"/><path d="M394 1538C852 1538 852 2132 1311 2132"/><path d="M394 1974C852 1974 852 1690 1311 1690"/><path d="M394 2481C852 2481 852 2143 1311 2143"/><path d="M394 1579C852 1579 852 2513 1311 2513"/><path d="M394 1623C852 1623 852 1592 1311 1592"/><path d="M394 1970C852 1970 852 2071 1311 2071"/><path d="M394 2211C852 2211 852 2186 1311 2186"/><path d="M394 1857C852 1857 852 1884 1311 1884"/><path d="M394 2205C852 2205 852 2179 1311 2179"/><path d="M394 2261C852 2261 852 1866 1311 1866"/><path d="M394 1586C852 1586 852 1829 1311 1829"/><path d="M394 2550C852 2550 852 2440 1311 2440"/><path d="M394 1503C852 1503 852 1619 1311 1619"/><path d="M394 2331C852 2331 852 2126 1311 2126"/><path d="M394 1599C852 1599 852 2089 1311 2089"/><path d="M394 2470C852 2470 852 1701 1311 1701"/><path d="M394 1710C852 1710 852 2153 1311 2153"/><path d="M394 1633C852 1633 852 1660 1311 1660"/><path d="M394 1856C852 1856 852 1890 1311 1890"/><path d="M394 2374C852 2374 852 2066 1311 2066"/><path d="M394 2070C852 2070 852 2468 1311 2468"/><path d="M394 1614C852 1614 852 1802 1311 1802"/><path d="M394 1538C852 1538 852 1611 1311 1611"/><path d="M394 1493C852 1493 852 1949 1311 1949"/><path d="M394 2027C852 2027 852 1636 1311 1636"/><path d="M394 2469C852 2469 852 2232 1311 2232"/><path d="M394 2191C852 2191 852 2138 1311 2138"/><path d="M394 2108C852 2108 852 1937 1311 1937"/><path d="M394 1572C852 1572 852 2313 1311 2313"/><path d="M394 2374C852 2374 852 1799 1311 1799"/><path d="M394 2212C852 2212 852 2227 1311 2227"/><path d="M394 1746C852 1746 852 2353 1311 2353"/><path d="M394 1956C852 1956 852 1505 1311 1505"/><path d="M394 2392C852 2392 852 2437 1311 2437"/><path d="M394 2396C852 2396 852 1954 1311 1954"/><path d="M394 1740C852 1740 852 2523 1311 2523"/><path d="M394 1930C852 1930 852 1703 1311 1703"/><path d="M394 1699C852 1699 852 2023 1311 2023"/><path d="M394 2287C852 2287 852 1733 1311 1733"/><path d="M394 2206C852 2206 852 2244 1311 2244"/><path d="M394 1764C852 1764 852 2525 1311 2525"/><path d="M394 1913C852 1913 852 2227 1311 2227"/><path d="M394 2189C852 2189 852 2502 1311 2502"/><path d="M394 1921C852 1921 852 2062 1311 2062"/><path d="M394 1939C852 1939 852 1990 1311 1990"/><path d="M394 1563C852 1563 852 2288 1311 2288"/><path d="M394 1943C852 1943 852 2188 1311 2188"/><path d="M394 2188C852 2188 852 1833 1311 1833"/><path d="M394 1552C852 1552 852 1569 1311 1569"/><path d="M394 2082C852 2082 852 1959 1311 1959"/><path d="M394 2186C852 2186 852 1758 1311 1758"/><path d="M394 1940C852 1940 852 2120 1311 2120"/><path d="M394 1793C852 1793 852 2369 1311 2369"/><path d="M394 1690C852 1690 852 2441 1311 2441"/><path d="M394 1834C852 1834 852 2393 1311 2393"/><path d="M394 2320C852 2320 852 2025 1311 2025"/><path d="M394 2547C852 2547 852 2540 1311 2540"/><path d="M394 1823C852 1823 852 1614 1311 1614"/><path d="M394 2149C852 2149 852 1680 1311 1680"/><path d="M394 2312C852 2312 852 1993 1311 1993"/><path d="M394 2293C852 2293 852 2281 1311 2281"/><path d="M394 1480C852 1480 852 1578 1311 1578"/><path d="M394 2083C852 2083 852 1783 1311 1783"/><path d="M394 2361C852 2361 852 2179 1311 2179"/><path d="M394 1637C852 1637 852 2344 1311 2344"/><path d="M394 2026C852 2026 852 2016 1311 2016"/><path d="M394 1661C852 1661 852 2200 1311 2200"/><path d="M394 2501C852 2501 852 1681 1311 1681"/><path d="M394 2172C852 2172 852 2000 1311 2000"/><path d="M394 1663C852 1663 852 1850 1311 1850"/><path d="M394 2069C852 2069 852 2265 1311 2265"/><path d="M394 1542C852 1542 852 2093 1311 2093"/><path d="M394 1487C852 1487 852 1832 1311 1832"/><path d="M394 1964C852 1964 852 2005 1311 2005"/><path d="M394 2547C852 2547 852 1702 1311 1702"/><path d="M394 1874C852 1874 852 2424 1311 2424"/><path d="M394 1551C852 1551 852 1530 1311 1530"/><path d="M394 1602C852 1602 852 2263 1311 2263"/><path d="M394 1950C852 1950 852 2297 1311 2297"/><path d="M394 1717C852 1717 852 1566 1311 1566"/><path d="M394 2072C852 2072 852 2127 1311 2127"/><path d="M394 1773C852 1773 852 2168 1311 2168"/><path d="M394 1615C852 1615 852 2348 1311 2348"/><path d="M394 1581C852 1581 852 2188 1311 2188"/><path d="M394 2156C852 2156 852 2323 1311 2323"/><path d="M394 2520C852 2520 852 1878 1311 1878"/><path d="M394 1789C852 1789 852 2211 1311 2211"/><path d="M394 2475C852 2475 852 1877 1311 1877"/><path d="M394 2522C852 2522 852 1665 1311 1665"/><path d="M394 2276C852 2276 852 2019 1311 2019"/><path d="M394 1540C852 1540 852 2425 1311 2425"/><path d="M394 1696C852 1696 852 1838 1311 1838"/><path d="M394 2008C852 2008 852 1879 1311 1879"/><path d="M394 2107C852 2107 852 2101 1311 2101"/><path d="M394 2044C852 2044 852 1589 1311 1589"/><path d="M394 1942C852 1942 852 2020 1311 2020"/><path d="M394 2118C852 2118 852 2196 1311 2196"/><path d="M394 1855C852 1855 852 1981 1311 1981"/><path d="M394 1542C852 1542 852 2327 1311 2327"/><path d="M394 2503C852 2503 852 2315 1311 2315"/><path d="M394 1769C852 1769 852 2008 1311 2008"/><path d="M394 2231C852 2231 852 2101 1311 2101"/><path d="M394 2348C852 2348 852 1724 1311 1724"/><path d="M394 2301C852 2301 852 1807 1311 1807"/><path d="M394 2423C852 2423 852 1652 1311 1652"/><path d="M394 1804C852 1804 852 2147 1311 2147"/><path d="M394 2417C852 2417 852 1937 1311 1937"/><path d="M394 2228C852 2228 852 2211 1311 2211"/><path d="M394 2158C852 2158 852 1871 1311 1871"/><path d="M394 1720C852 1720 852 1809 1311 1809"/><path d="M394 2083C852 2083 852 1700 1311 1700"/><path d="M394 2359C852 2359 852 1802 1311 1802"/><path d="M394 2350C852 2350 852 2297 1311 2297"/><path d="M394 2143C852 2143 852 1821 1311 1821"/><path d="M394 2226C852 2226 852 2467 1311 2467"/><path d="M394 2120C852 2120 852 1703 1311 1703"/><path d="M394 1664C852 1664 852 2264 1311 2264"/><path d="M394 1879C852 1879 852 2111 1311 2111"/><path d="M394 1526C852 1526 852 1847 1311 1847"/><path d="M394 2104C852 2104 852 1837 1311 1837"/><path d="M394 1701C852 1701 852 2309 1311 2309"/><path d="M394 1692C852 1692 852 2018 1311 2018"/><path d="M394 2495C852 2495 852 2506 1311 2506"/><path d="M394 2046C852 2046 852 2386 1311 2386"/><path d="M394 2470C852 2470 852 1769 1311 1769"/><path d="M394 1928C852 1928 852 1539 1311 1539"/><path d="M394 1777C852 1777 852 1569 1311 1569"/><path d="M394 1832C852 1832 852 2153 1311 2153"/><path d="M394 1877C852 1877 852 2522 1311 2522"/><path d="M394 1951C852 1951 852 1825 1311 1825"/><path d="M394 1618C852 1618 852 2225 1311 2225"/><path d="M394 2516C852 2516 852 2258 1311 2258"/><path d="M394 1830C852 1830 852 2129 1311 2129"/><path d="M394 2163C852 2163 852 1846 1311 1846"/><path d="M394 2180C852 2180 852 1600 1311 1600"/><path d="M394 1753C852 1753 852 2388 1311 2388"/><path d="M394 2433C852 2433 852 1797 1311 1797"/><path d="M394 1571C852 1571 852 2536 1311 2536"/><path d="M394 1671C852 1671 852 2417 1311 2417"/><path d="M394 2392C852 2392 852 2218 1311 2218"/><path d="M394 1969C852 1969 852 2179 1311 2179"/><path d="M394 1587C852 1587 852 1816 1311 1816"/><path d="M394 2183C852 2183 852 1940 1311 1940"/><path d="M394 2222C852 2222 852 2478 1311 2478"/><path d="M394 2546C852 2546 852 2175 1311 2175"/><path d="M394 2461C852 2461 852 1982 1311 1982"/><path d="M394 1806C852 1806 852 1667 1311 1667"/><path d="M394 2111C852 2111 852 2365 1311 2365"/><path d="M394 2535C852 2535 852 2484 1311 2484"/><path d="M394 1495C852 1495 852 1531 1311 1531"/><path d="M394 1725C852 1725 852 1725 1311 1725"/><path d="M394 2053C852 2053 852 2208 1311 2208"/><path d="M394 1964C852 1964 852 2464 1311 2464"/><path d="M394 1849C852 1849 852 2535 1311 2535"/><path d="M394 1517C852 1517 852 1942 1311 1942"/><path d="M394 1493C852 1493 852 2238 1311 2238"/><path d="M394 2377C852 2377 852 1576 1311 1576"/><path d="M394 2310C852 2310 852 2474 1311 2474"/><path d="M394 1891C852 1891 852 1576 1311 1576"/><path d="M394 1812C852 1812 852 1610 1311 1610"/><path d="M394 2321C852 2321 852 1871 1311 1871"/><path d="M394 1499C852 1499 852 2009 1311 2009"/><path d="M394 2271C852 2271 852 2007 1311 2007"/><path d="M394 1965C852 1965 852 2540 1311 2540"/><path d="M394 1884C852 1884 852 1552 1311 1552"/><path d="M394 1602C852 1602 852 1955 1311 1955"/><path d="M394 2338C852 2338 852 2473 1311 2473"/><path d="M394 1799C852 1799 852 2004 1311 2004"/><path d="M394 1971C852 1971 852 2150 1311 2150"/><path d="M394 2008C852 2008 852 2333 1311 2333"/><path d="M394 2052C852 2052 852 2103 1311 2103"/><path d="M394 2330C852 2330 852 1604 1311 1604"/><path d="M394 1784C852 1784 852 2478 1311 2478"/><path d="M394 2469C852 2469 852 2536 1311 2536"/><path d="M394 1754C852 1754 852 2277 1311 2277"/><path d="M394 2433C852 2433 852 1962 1311 1962"/><path d="M394 1859C852 1859 852 2248 1311 2248"/><path d="M394 2221C852 2221 852 1607 1311 1607"/><path d="M394 2148C852 2148 852 2399 1311 2399"/><path d="M394 2179C852 2179 852 1563 1311 1563"/><path d="M394 2065C852 2065 852 1861 1311 1861"/><path d="M394 2381C852 2381 852 2104 1311 2104"/><path d="M394 1497C852 1497 852 1856 1311 1856"/><path d="M394 2459C852 2459 852 2512 1311 2512"/><path d="M394 2101C852 2101 852 1864 1311 1864"/><path d="M394 2141C852 2141 852 2419 1311 2419"/><path d="M394 2162C852 2162 852 1592 1311 1592"/><path d="M394 1890C852 1890 852 2071 1311 2071"/><path d="M394 2026C852 2026 852 1961 1311 1961"/><path d="M394 2386C852 2386 852 2397 1311 2397"/><path d="M394 2439C852 2439 852 1829 1311 1829"/><path d="M394 2181C852 2181 852 1558 1311 1558"/><path d="M394 1709C852 1709 852 2054 1311 2054"/><path d="M394 1558C852 1558 852 1907 1311 1907"/><path d="M394 2544C852 2544 852 2542 1311 2542"/><path d="M394 2067C852 2067 852 1773 1311 1773"/><path d="M394 2178C852 2178 852 1523 1311 1523"/><path d="M394 2003C852 2003 852 2399 1311 2399"/><path d="M394 1708C852 1708 852 2494 1311 2494"/><path d="M394 1711C852 1711 852 1914 1311 1914"/><path d="M394 2108C852 2108 852 1976 1311 1976"/><path d="M394 1734C852 1734 852 2008 1311 2008"/><path d="M394 1860C852 1860 852 2472 1311 2472"/><path d="M394 2078C852 2078 852 2375 1311 2375"/><path d="M394 1501C852 1501 852 2045 1311 2045"/><path d="M394 1557C852 1557 852 2226 1311 2226"/><path d="M394 1651C852 1651 852 2286 1311 2286"/><path d="M394 1765C852 1765 852 1566 1311 1566"/><path d="M394 2439C852 2439 852 1868 1311 1868"/><path d="M394 1597C852 1597 852 1907 1311 1907"/><path d="M394 1699C852 1699 852 1980 1311 1980"/><path d="M394 2209C852 2209 852 1597 1311 1597"/><path d="M394 2256C852 2256 852 1922 1311 1922"/><path d="M394 2242C852 2242 852 2374 1311 2374"/><path d="M394 2258C852 2258 852 1523 1311 1523"/><path d="M394 1577C852 1577 852 2461 1311 2461"/><path d="M394 1773C852 1773 852 1676 1311 1676"/><path d="M394 1833C852 1833 852 1576 1311 1576"/><path d="M394 1732C852 1732 852 2135 1311 2135"/><path d="M394 2359C852 2359 852 1565 1311 1565"/><path d="M394 2461C852 2461 852 2288 1311 2288"/><path d="M394 2220C852 2220 852 2146 1311 2146"/><path d="M394 1969C852 1969 852 1485 1311 1485"/><path d="M394 2320C852 2320 852 2208 1311 2208"/><path d="M394 1720C852 1720 852 1820 1311 1820"/><path d="M394 1500C852 1500 852 1725 1311 1725"/><path d="M394 1634C852 1634 852 2114 1311 2114"/><path d="M394 1572C852 1572 852 1642 1311 1642"/><path d="M394 2432C852 2432 852 2282 1311 2282"/><path d="M394 1719C852 1719 852 2030 1311 2030"/><path d="M394 2166C852 2166 852 2455 1311 2455"/><path d="M394 2043C852 2043 852 2042 1311 2042"/><path d="M394 1529C852 1529 852 1672 1311 1672"/><path d="M394 2111C852 2111 852 2071 1311 2071"/><path d="M394 1885C852 1885 852 2084 1311 2084"/><path d="M394 2365C852 2365 852 1619 1311 1619"/><path d="M394 1779C852 1779 852 1905 1311 1905"/><path d="M394 2476C852 2476 852 1606 1311 1606"/><path d="M394 1959C852 1959 852 2397 1311 2397"/><path d="M394 2312C852 2312 852 1638 1311 1638"/><path d="M394 2408C852 2408 852 2007 1311 2007"/><path d="M394 1619C852 1619 852 1971 1311 1971"/><path d="M394 1914C852 1914 852 2011 1311 2011"/><path d="M394 1658C852 1658 852 2420 1311 2420"/><path d="M394 2524C852 2524 852 2344 1311 2344"/><path d="M394 2388C852 2388 852 2104 1311 2104"/><path d="M394 1546C852 1546 852 2470 1311 2470"/><path d="M394 1789C852 1789 852 1982 1311 1982"/><path d="M394 2312C852 2312 852 1832 1311 1832"/><path d="M394 2044C852 2044 852 1794 1311 1794"/><path d="M394 1497C852 1497 852 1617 1311 1617"/><path d="M394 1722C852 1722 852 2042 1311 2042"/><path d="M394 2210C852 2210 852 2461 1311 2461"/><path d="M394 1846C852 1846 852 1725 1311 1725"/><path d="M394 2263C852 2263 852 1921 1311 1921"/><path d="M394 2421C852 2421 852 1819 1311 1819"/><path d="M394 2202C852 2202 852 2429 1311 2429"/><path d="M394 2049C852 2049 852 1894 1311 1894"/><path d="M394 2324C852 2324 852 2299 1311 2299"/><path d="M394 2264C852 2264 852 2183 1311 2183"/><path d="M394 2440C852 2440 852 2119 1311 2119"/><path d="M394 2197C852 2197 852 1639 1311 1639"/><path d="M394 1934C852 1934 852 2013 1311 2013"/><path d="M394 1972C852 1972 852 2499 1311 2499"/><path d="M394 1747C852 1747 852 2120 1311 2120"/><path d="M394 2008C852 2008 852 1866 1311 1866"/><path d="M394 2496C852 2496 852 2421 1311 2421"/><path d="M394 2247C852 2247 852 2114 1311 2114"/><path d="M394 1889C852 1889 852 2290 1311 2290"/><path d="M394 1870C852 1870 852 2361 1311 2361"/><path d="M394 2551C852 2551 852 2345 1311 2345"/><path d="M394 2147C852 2147 852 2471 1311 2471"/><path d="M394 2123C852 2123 852 2073 1311 2073"/><path d="M394 1886C852 1886 852 1752 1311 1752"/><path d="M394 2220C852 2220 852 1944 1311 1944"/><path d="M394 2436C852 2436 852 1827 1311 1827"/><path d="M394 2521C852 2521 852 1800 1311 1800"/><path d="M394 2283C852 2283 852 2064 1311 2064"/><path d="M394 2472C852 2472 852 2131 1311 2131"/><path d="M394 2288C852 2288 852 1969 1311 1969"/><path d="M394 2486C852 2486 852 2226 1311 2226"/><path d="M394 2447C852 2447 852 2540 1311 2540"/><path d="M394 1791C852 1791 852 1963 1311 1963"/><path d="M394 2444C852 2444 852 1536 1311 1536"/><path d="M394 2074C852 2074 852 2118 1311 2118"/><path d="M394 1608C852 1608 852 2467 1311 2467"/><path d="M394 2419C852 2419 852 1571 1311 1571"/><path d="M394 2122C852 2122 852 1536 1311 1536"/><path d="M394 2390C852 2390 852 1982 1311 1982"/><path d="M394 2427C852 2427 852 1821 1311 1821"/><path d="M394 1979C852 1979 852 2324 1311 2324"/><path d="M394 1909C852 1909 852 2051 1311 2051"/><path d="M394 1521C852 1521 852 1643 1311 1643"/><path d="M394 2355C852 2355 852 2059 1311 2059"/><path d="M394 2287C852 2287 852 2264 1311 2264"/><path d="M394 1903C852 1903 852 1621 1311 1621"/><path d="M394 1919C852 1919 852 1601 1311 1601"/><path d="M394 1952C852 1952 852 1510 1311 1510"/><path d="M394 1579C852 1579 852 1796 1311 1796"/><path d="M394 2033C852 2033 852 1593 1311 1593"/><path d="M394 1568C852 1568 852 1980 1311 1980"/><path d="M394 2215C852 2215 852 1622 1311 1622"/><path d="M394 2247C852 2247 852 2066 1311 2066"/><path d="M394 2285C852 2285 852 2212 1311 2212"/><path d="M394 2471C852 2471 852 1649 1311 1649"/><path d="M394 1797C852 1797 852 1960 1311 1960"/><path d="M394 2507C852 2507 852 1692 1311 1692"/><path d="M394 2152C852 2152 852 2033 1311 2033"/><path d="M394 2088C852 2088 852 2078 1311 2078"/><path d="M394 2046C852 2046 852 2291 1311 2291"/><path d="M394 2274C852 2274 852 1669 1311 1669"/><path d="M394 1733C852 1733 852 2264 1311 2264"/><path d="M394 1927C852 1927 852 2172 1311 2172"/><path d="M394 2233C852 2233 852 2221 1311 2221"/><path d="M394 1521C852 1521 852 2209 1311 2209"/><path d="M394 2060C852 2060 852 1525 1311 1525"/><path d="M394 2317C852 2317 852 2125 1311 2125"/><path d="M394 2470C852 2470 852 1694 1311 1694"/><path d="M394 1953C852 1953 852 2456 1311 2456"/><path d="M394 2046C852 2046 852 2265 1311 2265"/><path d="M394 2182C852 2182 852 1479 1311 1479"/><path d="M394 2505C852 2505 852 1576 1311 1576"/><path d="M394 1746C852 1746 852 2116 1311 2116"/><path d="M394 1666C852 1666 852 2382 1311 2382"/><path d="M394 2090C852 2090 852 1802 1311 1802"/><path d="M394 1874C852 1874 852 1481 1311 1481"/><path d="M394 1856C852 1856 852 1728 1311 1728"/><path d="M394 1574C852 1574 852 1784 1311 1784"/><path d="M394 2064C852 2064 852 1571 1311 1571"/><path d="M394 1876C852 1876 852 1719 1311 1719"/><path d="M394 1748C852 1748 852 2478 1311 2478"/><path d="M394 2144C852 2144 852 2438 1311 2438"/><path d="M394 2109C852 2109 852 1907 1311 1907"/><path d="M394 1994C852 1994 852 2094 1311 2094"/><path d="M394 1688C852 1688 852 1745 1311 1745"/><path d="M394 2435C852 2435 852 1847 1311 1847"/><path d="M394 2016C852 2016 852 2327 1311 2327"/><path d="M394 1710C852 1710 852 2312 1311 2312"/><path d="M394 2399C852 2399 852 1597 1311 1597"/><path d="M394 2346C852 2346 852 2516 1311 2516"/><path d="M394 1535C852 1535 852 2010 1311 2010"/><path d="M394 1903C852 1903 852 2087 1311 2087"/><path d="M394 1847C852 1847 852 1828 1311 1828"/><path d="M394 1643C852 1643 852 2260 1311 2260"/><path d="M394 2204C852 2204 852 2350 1311 2350"/><path d="M394 1948C852 1948 852 1941 1311 1941"/><path d="M394 1678C852 1678 852 1537 1311 1537"/><path d="M394 1958C852 1958 852 2243 1311 2243"/><path d="M394 2179C852 2179 852 2394 1311 2394"/><path d="M394 1727C852 1727 852 2319 1311 2319"/><path d="M394 2015C852 2015 852 2545 1311 2545"/><path d="M394 2168C852 2168 852 2505 1311 2505"/><path d="M394 1732C852 1732 852 2168 1311 2168"/><path d="M394 1902C852 1902 852 1714 1311 1714"/><path d="M394 1773C852 1773 852 2143 1311 2143"/><path d="M394 2125C852 2125 852 2011 1311 2011"/><path d="M394 1741C852 1741 852 1548 1311 1548"/><path d="M394 2357C852 2357 852 2214 1311 2214"/><path d="M394 2141C852 2141 852 1543 1311 1543"/><path d="M394 2494C852 2494 852 2495 1311 2495"/><path d="M394 2279C852 2279 852 2160 1311 2160"/><path d="M394 1628C852 1628 852 2422 1311 2422"/><path d="M394 1955C852 1955 852 2225 1311 2225"/><path d="M394 1542C852 1542 852 1735 1311 1735"/><path d="M394 2048C852 2048 852 1679 1311 1679"/><path d="M394 1723C852 1723 852 2273 1311 2273"/><path d="M394 2315C852 2315 852 1808 1311 1808"/><path d="M394 2298C852 2298 852 1704 1311 1704"/><path d="M394 1707C852 1707 852 2329 1311 2329"/><path d="M394 1994C852 1994 852 1643 1311 1643"/><path d="M394 2155C852 2155 852 1543 1311 1543"/><path d="M394 1563C852 1563 852 1708 1311 1708"/><path d="M394 1832C852 1832 852 1639 1311 1639"/><path d="M394 2540C852 2540 852 1742 1311 1742"/><path d="M394 2359C852 2359 852 1802 1311 1802"/><path d="M394 1660C852 1660 852 1578 1311 1578"/><path d="M394 1537C852 1537 852 2387 1311 2387"/><path d="M394 2095C852 2095 852 2005 1311 2005"/><path d="M394 1889C852 1889 852 1972 1311 1972"/><path d="M394 2361C852 2361 852 1820 1311 1820"/><path d="M394 1993C852 1993 852 2120 1311 2120"/><path d="M394 1987C852 1987 852 1637 1311 1637"/><path d="M394 2046C852 2046 852 2086 1311 2086"/><path d="M394 2221C852 2221 852 1894 1311 1894"/><path d="M394 1719C852 1719 852 1530 1311 1530"/></g><g stroke="#c8aaa6" stroke-opacity="0.072" stroke-width="1.2" fill="none"><path d="M394 1541C852 1541 852 2085 1311 2085"/><path d="M394 2098C852 2098 852 1904 1311 1904"/><path d="M394 1809C852 1809 852 2355 1311 2355"/><path d="M394 1589C852 1589 852 2091 1311 2091"/><path d="M394 1541C852 1541 852 2303 1311 2303"/><path d="M394 2507C852 2507 852 1640 1311 1640"/><path d="M394 1875C852 1875 852 2086 1311 2086"/><path d="M394 1908C852 1908 852 1683 1311 1683"/><path d="M394 1534C852 1534 852 1478 1311 1478"/><path d="M394 1994C852 1994 852 1813 1311 1813"/><path d="M394 2327C852 2327 852 1985 1311 1985"/><path d="M394 2504C852 2504 852 1870 1311 1870"/><path d="M394 2242C852 2242 852 1692 1311 1692"/><path d="M394 2256C852 2256 852 1661 1311 1661"/><path d="M394 1588C852 1588 852 2283 1311 2283"/><path d="M394 2417C852 2417 852 1508 1311 1508"/><path d="M394 1498C852 1498 852 1951 1311 1951"/><path d="M394 2132C852 2132 852 2311 1311 2311"/><path d="M394 2469C852 2469 852 2437 1311 2437"/><path d="M394 1871C852 1871 852 1750 1311 1750"/><path d="M394 1599C852 1599 852 2465 1311 2465"/><path d="M394 1770C852 1770 852 2451 1311 2451"/><path d="M394 1778C852 1778 852 2337 1311 2337"/><path d="M394 1734C852 1734 852 1596 1311 1596"/><path d="M394 2153C852 2153 852 2048 1311 2048"/><path d="M394 1789C852 1789 852 2015 1311 2015"/><path d="M394 1809C852 1809 852 1709 1311 1709"/><path d="M394 1793C852 1793 852 1971 1311 1971"/><path d="M394 1502C852 1502 852 1805 1311 1805"/><path d="M394 1828C852 1828 852 2536 1311 2536"/><path d="M394 1783C852 1783 852 2142 1311 2142"/><path d="M394 2347C852 2347 852 2387 1311 2387"/><path d="M394 2168C852 2168 852 1561 1311 1561"/><path d="M394 1893C852 1893 852 2462 1311 2462"/><path d="M394 2041C852 2041 852 2501 1311 2501"/><path d="M394 2430C852 2430 852 2233 1311 2233"/><path d="M394 1902C852 1902 852 1658 1311 1658"/><path d="M394 2548C852 2548 852 1961 1311 1961"/><path d="M394 2066C852 2066 852 1740 1311 1740"/><path d="M394 1845C852 1845 852 1576 1311 1576"/><path d="M394 1874C852 1874 852 2347 1311 2347"/><path d="M394 1889C852 1889 852 2279 1311 2279"/><path d="M394 1745C852 1745 852 1595 1311 1595"/><path d="M394 2171C852 2171 852 1804 1311 1804"/><path d="M394 1801C852 1801 852 2491 1311 2491"/><path d="M394 2427C852 2427 852 1988 1311 1988"/><path d="M394 1550C852 1550 852 2010 1311 2010"/><path d="M394 1813C852 1813 852 2359 1311 2359"/><path d="M394 1635C852 1635 852 1901 1311 1901"/><path d="M394 2265C852 2265 852 2549 1311 2549"/><path d="M394 2008C852 2008 852 2475 1311 2475"/><path d="M394 2028C852 2028 852 1899 1311 1899"/><path d="M394 1995C852 1995 852 2063 1311 2063"/><path d="M394 2271C852 2271 852 1692 1311 1692"/><path d="M394 1548C852 1548 852 1748 1311 1748"/><path d="M394 1519C852 1519 852 2264 1311 2264"/><path d="M394 2333C852 2333 852 2191 1311 2191"/><path d="M394 2164C852 2164 852 1576 1311 1576"/><path d="M394 2548C852 2548 852 1869 1311 1869"/><path d="M394 2474C852 2474 852 2270 1311 2270"/><path d="M394 1646C852 1646 852 1864 1311 1864"/><path d="M394 1743C852 1743 852 2257 1311 2257"/><path d="M394 1655C852 1655 852 2325 1311 2325"/><path d="M394 1773C852 1773 852 2354 1311 2354"/><path d="M394 1733C852 1733 852 1878 1311 1878"/><path d="M394 2208C852 2208 852 2440 1311 2440"/><path d="M394 1882C852 1882 852 1874 1311 1874"/><path d="M394 1480C852 1480 852 1514 1311 1514"/><path d="M394 2029C852 2029 852 2440 1311 2440"/><path d="M394 2489C852 2489 852 1631 1311 1631"/><path d="M394 2167C852 2167 852 2352 1311 2352"/><path d="M394 1564C852 1564 852 2182 1311 2182"/><path d="M394 1721C852 1721 852 1591 1311 1591"/><path d="M394 2522C852 2522 852 1795 1311 1795"/><path d="M394 1570C852 1570 852 2023 1311 2023"/><path d="M394 2147C852 2147 852 1562 1311 1562"/><path d="M394 2146C852 2146 852 1652 1311 1652"/><path d="M394 2231C852 2231 852 1511 1311 1511"/><path d="M394 2492C852 2492 852 1593 1311 1593"/><path d="M394 1661C852 1661 852 1479 1311 1479"/><path d="M394 2354C852 2354 852 2486 1311 2486"/><path d="M394 2432C852 2432 852 1505 1311 1505"/><path d="M394 2189C852 2189 852 2275 1311 2275"/><path d="M394 2126C852 2126 852 1852 1311 1852"/><path d="M394 1587C852 1587 852 1891 1311 1891"/><path d="M394 2105C852 2105 852 1724 1311 1724"/><path d="M394 1519C852 1519 852 2062 1311 2062"/><path d="M394 2247C852 2247 852 2500 1311 2500"/><path d="M394 1908C852 1908 852 2502 1311 2502"/><path d="M394 1552C852 1552 852 2335 1311 2335"/><path d="M394 1982C852 1982 852 2082 1311 2082"/><path d="M394 1982C852 1982 852 2320 1311 2320"/><path d="M394 1570C852 1570 852 2441 1311 2441"/><path d="M394 1963C852 1963 852 2321 1311 2321"/><path d="M394 2449C852 2449 852 2328 1311 2328"/><path d="M394 2324C852 2324 852 2379 1311 2379"/><path d="M394 2074C852 2074 852 1762 1311 1762"/><path d="M394 1541C852 1541 852 1980 1311 1980"/><path d="M394 2230C852 2230 852 1743 1311 1743"/><path d="M394 1707C852 1707 852 1924 1311 1924"/><path d="M394 2416C852 2416 852 1848 1311 1848"/><path d="M394 1685C852 1685 852 2244 1311 2244"/><path d="M394 2118C852 2118 852 2209 1311 2209"/><path d="M394 2297C852 2297 852 1587 1311 1587"/><path d="M394 2545C852 2545 852 2186 1311 2186"/><path d="M394 1567C852 1567 852 1985 1311 1985"/><path d="M394 1573C852 1573 852 2412 1311 2412"/><path d="M394 1738C852 1738 852 2266 1311 2266"/><path d="M394 1812C852 1812 852 2261 1311 2261"/><path d="M394 2260C852 2260 852 1983 1311 1983"/><path d="M394 2257C852 2257 852 1495 1311 1495"/><path d="M394 2213C852 2213 852 2124 1311 2124"/><path d="M394 1823C852 1823 852 1766 1311 1766"/><path d="M394 2435C852 2435 852 2544 1311 2544"/><path d="M394 2284C852 2284 852 2479 1311 2479"/><path d="M394 2115C852 2115 852 2132 1311 2132"/><path d="M394 1751C852 1751 852 1519 1311 1519"/><path d="M394 1659C852 1659 852 1734 1311 1734"/><path d="M394 2153C852 2153 852 1631 1311 1631"/><path d="M394 1638C852 1638 852 1927 1311 1927"/><path d="M394 2156C852 2156 852 2324 1311 2324"/><path d="M394 1942C852 1942 852 1759 1311 1759"/><path d="M394 2372C852 2372 852 2044 1311 2044"/><path d="M394 1712C852 1712 852 2092 1311 2092"/><path d="M394 2384C852 2384 852 2038 1311 2038"/><path d="M394 2010C852 2010 852 1772 1311 1772"/><path d="M394 2350C852 2350 852 2104 1311 2104"/><path d="M394 1506C852 1506 852 2342 1311 2342"/><path d="M394 1500C852 1500 852 2517 1311 2517"/><path d="M394 2162C852 2162 852 1976 1311 1976"/><path d="M394 2093C852 2093 852 2280 1311 2280"/><path d="M394 2312C852 2312 852 1842 1311 1842"/><path d="M394 1694C852 1694 852 2197 1311 2197"/><path d="M394 1599C852 1599 852 1851 1311 1851"/><path d="M394 1966C852 1966 852 2224 1311 2224"/><path d="M394 1511C852 1511 852 1836 1311 1836"/><path d="M394 1904C852 1904 852 2471 1311 2471"/><path d="M394 1828C852 1828 852 1768 1311 1768"/><path d="M394 1795C852 1795 852 2307 1311 2307"/><path d="M394 2196C852 2196 852 1629 1311 1629"/><path d="M394 1676C852 1676 852 1805 1311 1805"/><path d="M394 1946C852 1946 852 1883 1311 1883"/><path d="M394 2519C852 2519 852 2131 1311 2131"/><path d="M394 2081C852 2081 852 2095 1311 2095"/><path d="M394 2432C852 2432 852 1930 1311 1930"/><path d="M394 2041C852 2041 852 2355 1311 2355"/><path d="M394 2020C852 2020 852 1680 1311 1680"/><path d="M394 2440C852 2440 852 2030 1311 2030"/><path d="M394 1593C852 1593 852 1586 1311 1586"/><path d="M394 1537C852 1537 852 1734 1311 1734"/><path d="M394 2410C852 2410 852 1572 1311 1572"/><path d="M394 2365C852 2365 852 1855 1311 1855"/><path d="M394 1505C852 1505 852 2342 1311 2342"/><path d="M394 1736C852 1736 852 1873 1311 1873"/><path d="M394 1509C852 1509 852 2249 1311 2249"/><path d="M394 2224C852 2224 852 2312 1311 2312"/><path d="M394 2405C852 2405 852 2484 1311 2484"/><path d="M394 2186C852 2186 852 2229 1311 2229"/><path d="M394 1812C852 1812 852 2164 1311 2164"/><path d="M394 2106C852 2106 852 2226 1311 2226"/><path d="M394 2163C852 2163 852 2062 1311 2062"/><path d="M394 2198C852 2198 852 1733 1311 1733"/><path d="M394 1484C852 1484 852 2221 1311 2221"/><path d="M394 1605C852 1605 852 1934 1311 1934"/><path d="M394 2380C852 2380 852 1914 1311 1914"/><path d="M394 2179C852 2179 852 1748 1311 1748"/><path d="M394 2386C852 2386 852 2473 1311 2473"/><path d="M394 2275C852 2275 852 1829 1311 1829"/><path d="M394 2173C852 2173 852 1861 1311 1861"/><path d="M394 2125C852 2125 852 2151 1311 2151"/><path d="M394 2392C852 2392 852 1993 1311 1993"/><path d="M394 2272C852 2272 852 2221 1311 2221"/><path d="M394 2491C852 2491 852 1865 1311 1865"/><path d="M394 1722C852 1722 852 2518 1311 2518"/><path d="M394 2377C852 2377 852 2176 1311 2176"/><path d="M394 2063C852 2063 852 2518 1311 2518"/><path d="M394 2083C852 2083 852 2310 1311 2310"/><path d="M394 1515C852 1515 852 2456 1311 2456"/><path d="M394 1557C852 1557 852 1756 1311 1756"/><path d="M394 1493C852 1493 852 1846 1311 1846"/><path d="M394 2338C852 2338 852 1516 1311 1516"/><path d="M394 1900C852 1900 852 1989 1311 1989"/><path d="M394 2222C852 2222 852 1960 1311 1960"/><path d="M394 2094C852 2094 852 2106 1311 2106"/><path d="M394 2447C852 2447 852 1580 1311 1580"/><path d="M394 2332C852 2332 852 2415 1311 2415"/><path d="M394 1995C852 1995 852 1872 1311 1872"/><path d="M394 2347C852 2347 852 2548 1311 2548"/><path d="M394 2089C852 2089 852 1803 1311 1803"/><path d="M394 2379C852 2379 852 1821 1311 1821"/><path d="M394 2293C852 2293 852 2151 1311 2151"/><path d="M394 2406C852 2406 852 2174 1311 2174"/><path d="M394 1738C852 1738 852 1539 1311 1539"/><path d="M394 2241C852 2241 852 2375 1311 2375"/><path d="M394 1578C852 1578 852 1646 1311 1646"/><path d="M394 2208C852 2208 852 2408 1311 2408"/><path d="M394 2017C852 2017 852 2074 1311 2074"/><path d="M394 1509C852 1509 852 2314 1311 2314"/><path d="M394 1952C852 1952 852 2401 1311 2401"/><path d="M394 2202C852 2202 852 1855 1311 1855"/><path d="M394 2493C852 2493 852 2152 1311 2152"/><path d="M394 1944C852 1944 852 1727 1311 1727"/><path d="M394 1799C852 1799 852 2546 1311 2546"/><path d="M394 2214C852 2214 852 2343 1311 2343"/><path d="M394 1670C852 1670 852 2214 1311 2214"/><path d="M394 1853C852 1853 852 1709 1311 1709"/><path d="M394 2264C852 2264 852 1771 1311 1771"/><path d="M394 2058C852 2058 852 1889 1311 1889"/><path d="M394 2223C852 2223 852 2262 1311 2262"/><path d="M394 2153C852 2153 852 2061 1311 2061"/><path d="M394 2356C852 2356 852 1610 1311 1610"/><path d="M394 2335C852 2335 852 2293 1311 2293"/><path d="M394 1488C852 1488 852 1728 1311 1728"/><path d="M394 2305C852 2305 852 1605 1311 1605"/><path d="M394 2355C852 2355 852 2414 1311 2414"/><path d="M394 1806C852 1806 852 1619 1311 1619"/><path d="M394 2183C852 2183 852 2240 1311 2240"/><path d="M394 1871C852 1871 852 2339 1311 2339"/><path d="M394 1950C852 1950 852 1693 1311 1693"/><path d="M394 1914C852 1914 852 2260 1311 2260"/><path d="M394 2400C852 2400 852 1612 1311 1612"/><path d="M394 1691C852 1691 852 1638 1311 1638"/><path d="M394 2437C852 2437 852 2386 1311 2386"/><path d="M394 1592C852 1592 852 1734 1311 1734"/><path d="M394 1697C852 1697 852 1615 1311 1615"/><path d="M394 2258C852 2258 852 2052 1311 2052"/><path d="M394 1569C852 1569 852 2099 1311 2099"/><path d="M394 2241C852 2241 852 1545 1311 1545"/><path d="M394 2349C852 2349 852 1974 1311 1974"/><path d="M394 1629C852 1629 852 1691 1311 1691"/><path d="M394 1749C852 1749 852 2378 1311 2378"/><path d="M394 1969C852 1969 852 1838 1311 1838"/><path d="M394 1916C852 1916 852 2056 1311 2056"/><path d="M394 2287C852 2287 852 2193 1311 2193"/><path d="M394 2024C852 2024 852 2550 1311 2550"/><path d="M394 1530C852 1530 852 2050 1311 2050"/><path d="M394 1652C852 1652 852 2271 1311 2271"/><path d="M394 2125C852 2125 852 1864 1311 1864"/><path d="M394 2394C852 2394 852 1620 1311 1620"/><path d="M394 2028C852 2028 852 2110 1311 2110"/><path d="M394 1966C852 1966 852 1845 1311 1845"/><path d="M394 2083C852 2083 852 2024 1311 2024"/><path d="M394 1858C852 1858 852 2183 1311 2183"/><path d="M394 1622C852 1622 852 1492 1311 1492"/><path d="M394 1570C852 1570 852 2316 1311 2316"/><path d="M394 2449C852 2449 852 1486 1311 1486"/><path d="M394 1583C852 1583 852 2421 1311 2421"/><path d="M394 2201C852 2201 852 2245 1311 2245"/><path d="M394 2121C852 2121 852 1545 1311 1545"/><path d="M394 1519C852 1519 852 1579 1311 1579"/><path d="M394 1910C852 1910 852 2489 1311 2489"/><path d="M394 2023C852 2023 852 2377 1311 2377"/><path d="M394 1609C852 1609 852 2176 1311 2176"/><path d="M394 2206C852 2206 852 1572 1311 1572"/><path d="M394 2097C852 2097 852 1838 1311 1838"/><path d="M394 2211C852 2211 852 2302 1311 2302"/><path d="M394 2470C852 2470 852 2095 1311 2095"/><path d="M394 1480C852 1480 852 2306 1311 2306"/><path d="M394 2517C852 2517 852 1574 1311 1574"/><path d="M394 2321C852 2321 852 1592 1311 1592"/><path d="M394 2178C852 2178 852 2090 1311 2090"/><path d="M394 1869C852 1869 852 2254 1311 2254"/><path d="M394 2415C852 2415 852 2455 1311 2455"/><path d="M394 1510C852 1510 852 2175 1311 2175"/><path d="M394 2297C852 2297 852 2394 1311 2394"/><path d="M394 1913C852 1913 852 1999 1311 1999"/><path d="M394 2074C852 2074 852 1555 1311 1555"/><path d="M394 2042C852 2042 852 1735 1311 1735"/><path d="M394 1965C852 1965 852 1819 1311 1819"/><path d="M394 2543C852 2543 852 2145 1311 2145"/><path d="M394 2552C852 2552 852 1968 1311 1968"/><path d="M394 1607C852 1607 852 2509 1311 2509"/><path d="M394 2456C852 2456 852 2550 1311 2550"/><path d="M394 1750C852 1750 852 2090 1311 2090"/><path d="M394 2240C852 2240 852 2173 1311 2173"/><path d="M394 1978C852 1978 852 1826 1311 1826"/><path d="M394 2529C852 2529 852 1574 1311 1574"/><path d="M394 2061C852 2061 852 1909 1311 1909"/><path d="M394 2302C852 2302 852 1615 1311 1615"/><path d="M394 2391C852 2391 852 2175 1311 2175"/><path d="M394 1553C852 1553 852 1483 1311 1483"/><path d="M394 1570C852 1570 852 1745 1311 1745"/><path d="M394 1601C852 1601 852 2482 1311 2482"/><path d="M394 2342C852 2342 852 2328 1311 2328"/><path d="M394 2085C852 2085 852 1626 1311 1626"/><path d="M394 1503C852 1503 852 2029 1311 2029"/><path d="M394 2547C852 2547 852 2443 1311 2443"/><path d="M394 1793C852 1793 852 1827 1311 1827"/><path d="M394 1640C852 1640 852 2479 1311 2479"/><path d="M394 2373C852 2373 852 1660 1311 1660"/><path d="M394 1841C852 1841 852 1610 1311 1610"/><path d="M394 2449C852 2449 852 1986 1311 1986"/><path d="M394 1982C852 1982 852 2542 1311 2542"/><path d="M394 1947C852 1947 852 1808 1311 1808"/><path d="M394 1537C852 1537 852 2440 1311 2440"/><path d="M394 2389C852 2389 852 2422 1311 2422"/><path d="M394 2318C852 2318 852 2412 1311 2412"/><path d="M394 2325C852 2325 852 1861 1311 1861"/><path d="M394 2015C852 2015 852 2196 1311 2196"/><path d="M394 2081C852 2081 852 2332 1311 2332"/><path d="M394 1975C852 1975 852 1644 1311 1644"/><path d="M394 2361C852 2361 852 1727 1311 1727"/><path d="M394 1839C852 1839 852 2301 1311 2301"/><path d="M394 2267C852 2267 852 2498 1311 2498"/><path d="M394 1714C852 1714 852 2338 1311 2338"/><path d="M394 2068C852 2068 852 1910 1311 1910"/><path d="M394 1883C852 1883 852 1559 1311 1559"/><path d="M394 1542C852 1542 852 2343 1311 2343"/><path d="M394 2452C852 2452 852 1593 1311 1593"/><path d="M394 1830C852 1830 852 2224 1311 2224"/><path d="M394 1599C852 1599 852 1652 1311 1652"/><path d="M394 1690C852 1690 852 1862 1311 1862"/><path d="M394 2236C852 2236 852 1666 1311 1666"/><path d="M394 2461C852 2461 852 2080 1311 2080"/><path d="M394 2012C852 2012 852 2217 1311 2217"/><path d="M394 1651C852 1651 852 2439 1311 2439"/><path d="M394 2059C852 2059 852 2273 1311 2273"/><path d="M394 2480C852 2480 852 1677 1311 1677"/><path d="M394 1654C852 1654 852 2451 1311 2451"/><path d="M394 1757C852 1757 852 1543 1311 1543"/><path d="M394 2210C852 2210 852 2278 1311 2278"/><path d="M394 2511C852 2511 852 2470 1311 2470"/><path d="M394 1913C852 1913 852 1658 1311 1658"/><path d="M394 2296C852 2296 852 2111 1311 2111"/><path d="M394 2509C852 2509 852 2532 1311 2532"/><path d="M394 2213C852 2213 852 2473 1311 2473"/><path d="M394 1672C852 1672 852 2093 1311 2093"/><path d="M394 2451C852 2451 852 1719 1311 1719"/><path d="M394 1752C852 1752 852 1630 1311 1630"/><path d="M394 2259C852 2259 852 1732 1311 1732"/><path d="M394 1732C852 1732 852 2291 1311 2291"/><path d="M394 1531C852 1531 852 2539 1311 2539"/><path d="M394 2470C852 2470 852 2127 1311 2127"/><path d="M394 2028C852 2028 852 2484 1311 2484"/><path d="M394 1912C852 1912 852 1724 1311 1724"/><path d="M394 1717C852 1717 852 1906 1311 1906"/><path d="M394 1558C852 1558 852 2339 1311 2339"/><path d="M394 1652C852 1652 852 1948 1311 1948"/><path d="M394 1941C852 1941 852 1731 1311 1731"/><path d="M394 1697C852 1697 852 2259 1311 2259"/><path d="M394 1543C852 1543 852 2203 1311 2203"/><path d="M394 2100C852 2100 852 2093 1311 2093"/><path d="M394 1932C852 1932 852 1836 1311 1836"/><path d="M394 1536C852 1536 852 1886 1311 1886"/><path d="M394 1502C852 1502 852 2443 1311 2443"/><path d="M394 1985C852 1985 852 1690 1311 1690"/><path d="M394 1550C852 1550 852 1665 1311 1665"/><path d="M394 1756C852 1756 852 2170 1311 2170"/><path d="M394 1869C852 1869 852 1960 1311 1960"/><path d="M394 1503C852 1503 852 2142 1311 2142"/><path d="M394 1966C852 1966 852 1734 1311 1734"/><path d="M394 2369C852 2369 852 2487 1311 2487"/><path d="M394 1903C852 1903 852 1719 1311 1719"/><path d="M394 2419C852 2419 852 1861 1311 1861"/><path d="M394 2520C852 2520 852 1703 1311 1703"/><path d="M394 1883C852 1883 852 2099 1311 2099"/><path d="M394 1646C852 1646 852 1663 1311 1663"/><path d="M394 1895C852 1895 852 1638 1311 1638"/><path d="M394 2253C852 2253 852 2381 1311 2381"/><path d="M394 1496C852 1496 852 2477 1311 2477"/><path d="M394 2090C852 2090 852 2056 1311 2056"/><path d="M394 2451C852 2451 852 2360 1311 2360"/><path d="M394 2161C852 2161 852 2481 1311 2481"/><path d="M394 2332C852 2332 852 2217 1311 2217"/><path d="M394 2256C852 2256 852 1874 1311 1874"/><path d="M394 1889C852 1889 852 1946 1311 1946"/><path d="M394 1760C852 1760 852 2471 1311 2471"/><path d="M394 1866C852 1866 852 2126 1311 2126"/><path d="M394 1772C852 1772 852 2532 1311 2532"/><path d="M394 1563C852 1563 852 2405 1311 2405"/><path d="M394 1865C852 1865 852 2219 1311 2219"/><path d="M394 2216C852 2216 852 1524 1311 1524"/><path d="M394 1903C852 1903 852 1897 1311 1897"/><path d="M394 1978C852 1978 852 2379 1311 2379"/><path d="M394 2197C852 2197 852 1661 1311 1661"/><path d="M394 1839C852 1839 852 1588 1311 1588"/><path d="M394 2465C852 2465 852 2497 1311 2497"/><path d="M394 1575C852 1575 852 1960 1311 1960"/><path d="M394 1975C852 1975 852 1849 1311 1849"/><path d="M394 2144C852 2144 852 2347 1311 2347"/><path d="M394 2365C852 2365 852 2439 1311 2439"/><path d="M394 1534C852 1534 852 1808 1311 1808"/><path d="M394 1734C852 1734 852 1887 1311 1887"/><path d="M394 2305C852 2305 852 2138 1311 2138"/><path d="M394 1547C852 1547 852 1832 1311 1832"/><path d="M394 1608C852 1608 852 2431 1311 2431"/><path d="M394 1748C852 1748 852 2061 1311 2061"/><path d="M394 2138C852 2138 852 1878 1311 1878"/><path d="M394 1979C852 1979 852 2354 1311 2354"/><path d="M394 2049C852 2049 852 2229 1311 2229"/><path d="M394 1781C852 1781 852 2272 1311 2272"/><path d="M394 1947C852 1947 852 1955 1311 1955"/><path d="M394 1981C852 1981 852 1920 1311 1920"/><path d="M394 1574C852 1574 852 2528 1311 2528"/><path d="M394 2318C852 2318 852 2433 1311 2433"/><path d="M394 1586C852 1586 852 1837 1311 1837"/><path d="M394 1792C852 1792 852 2217 1311 2217"/><path d="M394 2461C852 2461 852 1685 1311 1685"/><path d="M394 2444C852 2444 852 1770 1311 1770"/><path d="M394 1673C852 1673 852 2014 1311 2014"/><path d="M394 1584C852 1584 852 2472 1311 2472"/><path d="M394 1514C852 1514 852 2230 1311 2230"/><path d="M394 1540C852 1540 852 2192 1311 2192"/><path d="M394 1935C852 1935 852 2533 1311 2533"/><path d="M394 1772C852 1772 852 1604 1311 1604"/><path d="M394 2156C852 2156 852 2033 1311 2033"/><path d="M394 2403C852 2403 852 1614 1311 1614"/><path d="M394 2516C852 2516 852 2435 1311 2435"/><path d="M394 1769C852 1769 852 1973 1311 1973"/><path d="M394 2273C852 2273 852 1703 1311 1703"/><path d="M394 1624C852 1624 852 2306 1311 2306"/><path d="M394 2029C852 2029 852 2540 1311 2540"/><path d="M394 1626C852 1626 852 1577 1311 1577"/><path d="M394 1802C852 1802 852 2261 1311 2261"/><path d="M394 2528C852 2528 852 1605 1311 1605"/><path d="M394 2492C852 2492 852 2100 1311 2100"/><path d="M394 2291C852 2291 852 2093 1311 2093"/><path d="M394 2455C852 2455 852 2454 1311 2454"/><path d="M394 1955C852 1955 852 1603 1311 1603"/><path d="M394 2262C852 2262 852 1609 1311 1609"/><path d="M394 1747C852 1747 852 2483 1311 2483"/><path d="M394 1959C852 1959 852 1824 1311 1824"/><path d="M394 1656C852 1656 852 1685 1311 1685"/><path d="M394 2419C852 2419 852 2257 1311 2257"/><path d="M394 2394C852 2394 852 2531 1311 2531"/><path d="M394 2365C852 2365 852 2170 1311 2170"/><path d="M394 2044C852 2044 852 1700 1311 1700"/><path d="M394 2069C852 2069 852 1829 1311 1829"/><path d="M394 1821C852 1821 852 1622 1311 1622"/><path d="M394 1806C852 1806 852 1569 1311 1569"/><path d="M394 2056C852 2056 852 1621 1311 1621"/><path d="M394 1515C852 1515 852 1946 1311 1946"/><path d="M394 2466C852 2466 852 2193 1311 2193"/><path d="M394 2508C852 2508 852 1716 1311 1716"/><path d="M394 2094C852 2094 852 2156 1311 2156"/><path d="M394 2480C852 2480 852 2410 1311 2410"/><path d="M394 1961C852 1961 852 1732 1311 1732"/><path d="M394 2387C852 2387 852 1796 1311 1796"/><path d="M394 1498C852 1498 852 1941 1311 1941"/><path d="M394 1945C852 1945 852 2547 1311 2547"/><path d="M394 2332C852 2332 852 1984 1311 1984"/><path d="M394 1826C852 1826 852 2333 1311 2333"/><path d="M394 2324C852 2324 852 1632 1311 1632"/><path d="M394 1554C852 1554 852 1605 1311 1605"/><path d="M394 2535C852 2535 852 2487 1311 2487"/><path d="M394 1695C852 1695 852 2447 1311 2447"/><path d="M394 2268C852 2268 852 2230 1311 2230"/><path d="M394 2049C852 2049 852 2153 1311 2153"/><path d="M394 1566C852 1566 852 2284 1311 2284"/><path d="M394 1699C852 1699 852 1962 1311 1962"/><path d="M394 2407C852 2407 852 2157 1311 2157"/><path d="M394 1614C852 1614 852 1598 1311 1598"/><path d="M394 2214C852 2214 852 2398 1311 2398"/><path d="M394 2501C852 2501 852 1700 1311 1700"/><path d="M394 2549C852 2549 852 2222 1311 2222"/><path d="M394 2520C852 2520 852 2294 1311 2294"/><path d="M394 1655C852 1655 852 1906 1311 1906"/><path d="M394 2047C852 2047 852 1895 1311 1895"/><path d="M394 1720C852 1720 852 1833 1311 1833"/><path d="M394 2219C852 2219 852 2252 1311 2252"/><path d="M394 1874C852 1874 852 1774 1311 1774"/><path d="M394 2276C852 2276 852 2066 1311 2066"/><path d="M394 2254C852 2254 852 2258 1311 2258"/><path d="M394 1532C852 1532 852 2414 1311 2414"/><path d="M394 1622C852 1622 852 1488 1311 1488"/><path d="M394 1725C852 1725 852 1751 1311 1751"/><path d="M394 1627C852 1627 852 2022 1311 2022"/><path d="M394 1567C852 1567 852 2547 1311 2547"/><path d="M394 1718C852 1718 852 2420 1311 2420"/><path d="M394 2340C852 2340 852 2362 1311 2362"/><path d="M394 2121C852 2121 852 1605 1311 1605"/><path d="M394 2222C852 2222 852 1483 1311 1483"/><path d="M394 2507C852 2507 852 1561 1311 1561"/><path d="M394 2368C852 2368 852 1673 1311 1673"/><path d="M394 1517C852 1517 852 1586 1311 1586"/><path d="M394 1578C852 1578 852 1601 1311 1601"/><path d="M394 2026C852 2026 852 2050 1311 2050"/><path d="M394 1892C852 1892 852 2351 1311 2351"/><path d="M394 2107C852 2107 852 1589 1311 1589"/><path d="M394 1900C852 1900 852 1824 1311 1824"/><path d="M394 2450C852 2450 852 2063 1311 2063"/><path d="M394 2539C852 2539 852 1823 1311 1823"/><path d="M394 1752C852 1752 852 1799 1311 1799"/><path d="M394 1808C852 1808 852 2057 1311 2057"/><path d="M394 1938C852 1938 852 2338 1311 2338"/><path d="M394 2375C852 2375 852 1978 1311 1978"/><path d="M394 1875C852 1875 852 2003 1311 2003"/><path d="M394 2374C852 2374 852 2386 1311 2386"/><path d="M394 2210C852 2210 852 2222 1311 2222"/><path d="M394 1986C852 1986 852 2523 1311 2523"/><path d="M394 2081C852 2081 852 2271 1311 2271"/><path d="M394 2261C852 2261 852 2099 1311 2099"/><path d="M394 1524C852 1524 852 1916 1311 1916"/><path d="M394 2161C852 2161 852 1833 1311 1833"/><path d="M394 1570C852 1570 852 1599 1311 1599"/><path d="M394 1729C852 1729 852 1742 1311 1742"/><path d="M394 2512C852 2512 852 2417 1311 2417"/><path d="M394 2378C852 2378 852 1504 1311 1504"/><path d="M394 2305C852 2305 852 1539 1311 1539"/><path d="M394 1806C852 1806 852 2340 1311 2340"/><path d="M394 2419C852 2419 852 1526 1311 1526"/><path d="M394 2195C852 2195 852 2058 1311 2058"/><path d="M394 1710C852 1710 852 2528 1311 2528"/><path d="M394 1899C852 1899 852 1929 1311 1929"/><path d="M394 1787C852 1787 852 2064 1311 2064"/><path d="M394 1700C852 1700 852 1547 1311 1547"/><path d="M394 1559C852 1559 852 2239 1311 2239"/><path d="M394 1659C852 1659 852 2378 1311 2378"/><path d="M394 1518C852 1518 852 2504 1311 2504"/><path d="M394 2515C852 2515 852 2384 1311 2384"/><path d="M394 2009C852 2009 852 1548 1311 1548"/><path d="M394 2085C852 2085 852 2044 1311 2044"/><path d="M394 2023C852 2023 852 2157 1311 2157"/><path d="M394 2253C852 2253 852 2105 1311 2105"/><path d="M394 2309C852 2309 852 2547 1311 2547"/><path d="M394 1554C852 1554 852 2377 1311 2377"/><path d="M394 1512C852 1512 852 2058 1311 2058"/><path d="M394 1785C852 1785 852 1966 1311 1966"/><path d="M394 2273C852 2273 852 2083 1311 2083"/><path d="M394 2057C852 2057 852 1508 1311 1508"/><path d="M394 1804C852 1804 852 1549 1311 1549"/><path d="M394 1608C852 1608 852 1869 1311 1869"/><path d="M394 1998C852 1998 852 1907 1311 1907"/><path d="M394 1865C852 1865 852 2444 1311 2444"/><path d="M394 2351C852 2351 852 2283 1311 2283"/><path d="M394 2070C852 2070 852 1565 1311 1565"/><path d="M394 2233C852 2233 852 1601 1311 1601"/><path d="M394 2250C852 2250 852 2212 1311 2212"/><path d="M394 2384C852 2384 852 1511 1311 1511"/><path d="M394 2287C852 2287 852 1622 1311 1622"/><path d="M394 2102C852 2102 852 2120 1311 2120"/><path d="M394 2486C852 2486 852 1846 1311 1846"/><path d="M394 2036C852 2036 852 1684 1311 1684"/><path d="M394 1887C852 1887 852 2242 1311 2242"/><path d="M394 1853C852 1853 852 1710 1311 1710"/><path d="M394 1759C852 1759 852 2268 1311 2268"/><path d="M394 1928C852 1928 852 2046 1311 2046"/><path d="M394 2043C852 2043 852 2083 1311 2083"/><path d="M394 1843C852 1843 852 1517 1311 1517"/><path d="M394 1542C852 1542 852 2130 1311 2130"/><path d="M394 1915C852 1915 852 2004 1311 2004"/><path d="M394 2476C852 2476 852 1498 1311 1498"/><path d="M394 2295C852 2295 852 1930 1311 1930"/><path d="M394 2346C852 2346 852 1504 1311 1504"/><path d="M394 1592C852 1592 852 2142 1311 2142"/><path d="M394 1751C852 1751 852 2241 1311 2241"/><path d="M394 1798C852 1798 852 2242 1311 2242"/><path d="M394 2177C852 2177 852 2184 1311 2184"/><path d="M394 1746C852 1746 852 1769 1311 1769"/><path d="M394 2073C852 2073 852 1837 1311 1837"/><path d="M394 2381C852 2381 852 2167 1311 2167"/><path d="M394 2218C852 2218 852 1494 1311 1494"/><path d="M394 1900C852 1900 852 2179 1311 2179"/><path d="M394 1637C852 1637 852 1723 1311 1723"/><path d="M394 1597C852 1597 852 1975 1311 1975"/><path d="M394 1617C852 1617 852 1720 1311 1720"/><path d="M394 2218C852 2218 852 2288 1311 2288"/><path d="M394 1992C852 1992 852 2106 1311 2106"/><path d="M394 2420C852 2420 852 2253 1311 2253"/><path d="M394 2277C852 2277 852 1591 1311 1591"/><path d="M394 1698C852 1698 852 2194 1311 2194"/><path d="M394 2094C852 2094 852 1856 1311 1856"/><path d="M394 1838C852 1838 852 1772 1311 1772"/><path d="M394 1943C852 1943 852 1910 1311 1910"/><path d="M394 1596C852 1596 852 2118 1311 2118"/><path d="M394 1602C852 1602 852 2000 1311 2000"/><path d="M394 2520C852 2520 852 2498 1311 2498"/><path d="M394 2198C852 2198 852 2393 1311 2393"/><path d="M394 2350C852 2350 852 1959 1311 1959"/><path d="M394 1640C852 1640 852 1908 1311 1908"/><path d="M394 1997C852 1997 852 2435 1311 2435"/><path d="M394 1514C852 1514 852 2004 1311 2004"/><path d="M394 1752C852 1752 852 2030 1311 2030"/><path d="M394 1810C852 1810 852 1857 1311 1857"/><path d="M394 2455C852 2455 852 1799 1311 1799"/><path d="M394 1604C852 1604 852 2186 1311 2186"/><path d="M394 2022C852 2022 852 1917 1311 1917"/><path d="M394 1584C852 1584 852 2258 1311 2258"/><path d="M394 1947C852 1947 852 2261 1311 2261"/><path d="M394 2156C852 2156 852 2169 1311 2169"/><path d="M394 2087C852 2087 852 1525 1311 1525"/><path d="M394 2293C852 2293 852 1774 1311 1774"/><path d="M394 2037C852 2037 852 1634 1311 1634"/><path d="M394 1840C852 1840 852 1803 1311 1803"/><path d="M394 2352C852 2352 852 1913 1311 1913"/><path d="M394 2356C852 2356 852 1723 1311 1723"/><path d="M394 2309C852 2309 852 1980 1311 1980"/><path d="M394 2238C852 2238 852 1674 1311 1674"/><path d="M394 1853C852 1853 852 2090 1311 2090"/><path d="M394 1645C852 1645 852 1763 1311 1763"/><path d="M394 1687C852 1687 852 2351 1311 2351"/><path d="M394 2223C852 2223 852 1797 1311 1797"/><path d="M394 2209C852 2209 852 1846 1311 1846"/><path d="M394 1954C852 1954 852 2400 1311 2400"/><path d="M394 1585C852 1585 852 1765 1311 1765"/><path d="M394 1527C852 1527 852 1944 1311 1944"/><path d="M394 2549C852 2549 852 1982 1311 1982"/><path d="M394 1638C852 1638 852 2390 1311 2390"/><path d="M394 1835C852 1835 852 2431 1311 2431"/><path d="M394 1736C852 1736 852 1950 1311 1950"/><path d="M394 1609C852 1609 852 2156 1311 2156"/><path d="M394 1786C852 1786 852 1944 1311 1944"/><path d="M394 2023C852 2023 852 1863 1311 1863"/><path d="M394 2347C852 2347 852 2045 1311 2045"/><path d="M394 2285C852 2285 852 1818 1311 1818"/><path d="M394 2034C852 2034 852 2294 1311 2294"/><path d="M394 2227C852 2227 852 1897 1311 1897"/><path d="M394 2055C852 2055 852 2495 1311 2495"/><path d="M394 2257C852 2257 852 2205 1311 2205"/><path d="M394 2380C852 2380 852 2040 1311 2040"/><path d="M394 1811C852 1811 852 2362 1311 2362"/><path d="M394 2285C852 2285 852 2218 1311 2218"/><path d="M394 1801C852 1801 852 2304 1311 2304"/><path d="M394 2294C852 2294 852 2208 1311 2208"/><path d="M394 1848C852 1848 852 1683 1311 1683"/><path d="M394 1875C852 1875 852 2059 1311 2059"/><path d="M394 2363C852 2363 852 2357 1311 2357"/><path d="M394 2131C852 2131 852 1926 1311 1926"/><path d="M394 2416C852 2416 852 1644 1311 1644"/><path d="M394 2275C852 2275 852 1835 1311 1835"/><path d="M394 1756C852 1756 852 2158 1311 2158"/><path d="M394 2059C852 2059 852 2308 1311 2308"/><path d="M394 2287C852 2287 852 1885 1311 1885"/><path d="M394 1752C852 1752 852 1801 1311 1801"/><path d="M394 1773C852 1773 852 2307 1311 2307"/><path d="M394 2137C852 2137 852 2431 1311 2431"/><path d="M394 1710C852 1710 852 2379 1311 2379"/><path d="M394 1581C852 1581 852 2225 1311 2225"/><path d="M394 1820C852 1820 852 1569 1311 1569"/><path d="M394 1897C852 1897 852 1503 1311 1503"/><path d="M394 1896C852 1896 852 2049 1311 2049"/><path d="M394 2026C852 2026 852 2478 1311 2478"/><path d="M394 2037C852 2037 852 1615 1311 1615"/><path d="M394 2417C852 2417 852 2318 1311 2318"/><path d="M394 2320C852 2320 852 2309 1311 2309"/><path d="M394 1835C852 1835 852 1503 1311 1503"/><path d="M394 2413C852 2413 852 1881 1311 1881"/><path d="M394 1891C852 1891 852 1705 1311 1705"/><path d="M394 1786C852 1786 852 1670 1311 1670"/><path d="M394 1842C852 1842 852 2422 1311 2422"/><path d="M394 1931C852 1931 852 2532 1311 2532"/><path d="M394 2084C852 2084 852 1972 1311 1972"/><path d="M394 1594C852 1594 852 2216 1311 2216"/><path d="M394 1914C852 1914 852 2251 1311 2251"/><path d="M394 1877C852 1877 852 2159 1311 2159"/><path d="M394 2355C852 2355 852 1825 1311 1825"/><path d="M394 1703C852 1703 852 2073 1311 2073"/><path d="M394 1902C852 1902 852 2467 1311 2467"/><path d="M394 1847C852 1847 852 1571 1311 1571"/><path d="M394 2404C852 2404 852 1504 1311 1504"/><path d="M394 1664C852 1664 852 1881 1311 1881"/><path d="M394 1755C852 1755 852 2043 1311 2043"/><path d="M394 1487C852 1487 852 2167 1311 2167"/><path d="M394 1772C852 1772 852 2529 1311 2529"/><path d="M394 2052C852 2052 852 2449 1311 2449"/><path d="M394 2298C852 2298 852 1924 1311 1924"/><path d="M394 2381C852 2381 852 2112 1311 2112"/><path d="M394 1607C852 1607 852 2439 1311 2439"/><path d="M394 1643C852 1643 852 2365 1311 2365"/><path d="M394 2533C852 2533 852 2236 1311 2236"/><path d="M394 2303C852 2303 852 2531 1311 2531"/><path d="M394 2388C852 2388 852 1893 1311 1893"/><path d="M394 2289C852 2289 852 1618 1311 1618"/><path d="M394 1845C852 1845 852 2475 1311 2475"/><path d="M394 2388C852 2388 852 2184 1311 2184"/><path d="M394 1543C852 1543 852 2244 1311 2244"/><path d="M394 1843C852 1843 852 2522 1311 2522"/><path d="M394 2282C852 2282 852 2430 1311 2430"/><path d="M394 2071C852 2071 852 2309 1311 2309"/><path d="M394 1857C852 1857 852 2188 1311 2188"/><path d="M394 2169C852 2169 852 2128 1311 2128"/><path d="M394 2469C852 2469 852 2181 1311 2181"/><path d="M394 2408C852 2408 852 2236 1311 2236"/><path d="M394 2248C852 2248 852 2345 1311 2345"/><path d="M394 1953C852 1953 852 2213 1311 2213"/><path d="M394 2049C852 2049 852 1651 1311 1651"/><path d="M394 2439C852 2439 852 2374 1311 2374"/><path d="M394 1548C852 1548 852 1715 1311 1715"/><path d="M394 1928C852 1928 852 2349 1311 2349"/><path d="M394 1857C852 1857 852 1619 1311 1619"/><path d="M394 1888C852 1888 852 2501 1311 2501"/><path d="M394 1868C852 1868 852 1794 1311 1794"/><path d="M394 2407C852 2407 852 1981 1311 1981"/><path d="M394 2463C852 2463 852 1941 1311 1941"/><path d="M394 2121C852 2121 852 1770 1311 1770"/><path d="M394 1573C852 1573 852 1906 1311 1906"/><path d="M394 1696C852 1696 852 1657 1311 1657"/><path d="M394 1962C852 1962 852 1479 1311 1479"/><path d="M394 2189C852 2189 852 1797 1311 1797"/><path d="M394 2242C852 2242 852 2475 1311 2475"/><path d="M394 1516C852 1516 852 1952 1311 1952"/><path d="M394 1754C852 1754 852 1810 1311 1810"/><path d="M394 1823C852 1823 852 1536 1311 1536"/><path d="M394 1952C852 1952 852 1669 1311 1669"/><path d="M394 2427C852 2427 852 2506 1311 2506"/><path d="M394 2442C852 2442 852 1867 1311 1867"/><path d="M394 2277C852 2277 852 2063 1311 2063"/><path d="M394 2137C852 2137 852 2414 1311 2414"/><path d="M394 2258C852 2258 852 1712 1311 1712"/><path d="M394 1485C852 1485 852 1594 1311 1594"/></g><g stroke="#dcb0a0" stroke-opacity="0.072" stroke-width="1.2" fill="none"><path d="M394 1528C852 1528 852 2400 1311 2400"/><path d="M394 2209C852 2209 852 1937 1311 1937"/><path d="M394 1978C852 1978 852 2470 1311 2470"/><path d="M394 2316C852 2316 852 1566 1311 1566"/><path d="M394 1999C852 1999 852 2111 1311 2111"/><path d="M394 1882C852 1882 852 2159 1311 2159"/><path d="M394 1588C852 1588 852 1846 1311 1846"/><path d="M394 2405C852 2405 852 2226 1311 2226"/><path d="M394 2035C852 2035 852 2453 1311 2453"/><path d="M394 2346C852 2346 852 2255 1311 2255"/><path d="M394 1588C852 1588 852 1983 1311 1983"/><path d="M394 2118C852 2118 852 1987 1311 1987"/><path d="M394 1619C852 1619 852 2455 1311 2455"/><path d="M394 2489C852 2489 852 2229 1311 2229"/><path d="M394 1951C852 1951 852 1497 1311 1497"/><path d="M394 2522C852 2522 852 1591 1311 1591"/><path d="M394 2390C852 2390 852 2204 1311 2204"/><path d="M394 2131C852 2131 852 1717 1311 1717"/><path d="M394 2405C852 2405 852 1965 1311 1965"/><path d="M394 2546C852 2546 852 1927 1311 1927"/><path d="M394 1759C852 1759 852 1673 1311 1673"/><path d="M394 1769C852 1769 852 2341 1311 2341"/><path d="M394 2261C852 2261 852 1628 1311 1628"/><path d="M394 1554C852 1554 852 2274 1311 2274"/><path d="M394 1767C852 1767 852 1482 1311 1482"/><path d="M394 1825C852 1825 852 1515 1311 1515"/><path d="M394 1712C852 1712 852 1674 1311 1674"/><path d="M394 1549C852 1549 852 2269 1311 2269"/><path d="M394 2022C852 2022 852 2546 1311 2546"/><path d="M394 2126C852 2126 852 2156 1311 2156"/><path d="M394 1629C852 1629 852 1847 1311 1847"/><path d="M394 1608C852 1608 852 1834 1311 1834"/><path d="M394 2446C852 2446 852 1789 1311 1789"/><path d="M394 2290C852 2290 852 2395 1311 2395"/><path d="M394 1587C852 1587 852 2374 1311 2374"/><path d="M394 2160C852 2160 852 1638 1311 1638"/><path d="M394 2286C852 2286 852 2170 1311 2170"/><path d="M394 1615C852 1615 852 1985 1311 1985"/><path d="M394 2012C852 2012 852 1714 1311 1714"/><path d="M394 2013C852 2013 852 2095 1311 2095"/><path d="M394 2172C852 2172 852 1942 1311 1942"/><path d="M394 1978C852 1978 852 1763 1311 1763"/><path d="M394 1961C852 1961 852 2243 1311 2243"/><path d="M394 2257C852 2257 852 2379 1311 2379"/><path d="M394 1487C852 1487 852 2478 1311 2478"/><path d="M394 1608C852 1608 852 2381 1311 2381"/><path d="M394 1778C852 1778 852 1765 1311 1765"/><path d="M394 1677C852 1677 852 1731 1311 1731"/><path d="M394 2428C852 2428 852 2099 1311 2099"/><path d="M394 1726C852 1726 852 1959 1311 1959"/><path d="M394 2104C852 2104 852 2477 1311 2477"/><path d="M394 1854C852 1854 852 1518 1311 1518"/><path d="M394 1630C852 1630 852 1697 1311 1697"/><path d="M394 2207C852 2207 852 1677 1311 1677"/><path d="M394 1905C852 1905 852 1769 1311 1769"/><path d="M394 1813C852 1813 852 2086 1311 2086"/><path d="M394 2359C852 2359 852 1914 1311 1914"/><path d="M394 2200C852 2200 852 2195 1311 2195"/><path d="M394 1618C852 1618 852 2468 1311 2468"/><path d="M394 1674C852 1674 852 1651 1311 1651"/><path d="M394 2048C852 2048 852 2161 1311 2161"/><path d="M394 1901C852 1901 852 2335 1311 2335"/><path d="M394 1796C852 1796 852 2032 1311 2032"/><path d="M394 1502C852 1502 852 1481 1311 1481"/><path d="M394 2318C852 2318 852 1910 1311 1910"/><path d="M394 2472C852 2472 852 2491 1311 2491"/><path d="M394 1696C852 1696 852 1649 1311 1649"/><path d="M394 2364C852 2364 852 2156 1311 2156"/><path d="M394 2291C852 2291 852 1698 1311 1698"/><path d="M394 1839C852 1839 852 1758 1311 1758"/><path d="M394 2367C852 2367 852 2095 1311 2095"/><path d="M394 1758C852 1758 852 2492 1311 2492"/><path d="M394 2081C852 2081 852 1590 1311 1590"/><path d="M394 2172C852 2172 852 1852 1311 1852"/><path d="M394 1975C852 1975 852 2218 1311 2218"/><path d="M394 1646C852 1646 852 1744 1311 1744"/><path d="M394 1796C852 1796 852 1502 1311 1502"/><path d="M394 2167C852 2167 852 1965 1311 1965"/><path d="M394 1765C852 1765 852 1882 1311 1882"/><path d="M394 1481C852 1481 852 2253 1311 2253"/><path d="M394 1862C852 1862 852 2181 1311 2181"/><path d="M394 1570C852 1570 852 2084 1311 2084"/><path d="M394 2211C852 2211 852 2478 1311 2478"/><path d="M394 1842C852 1842 852 2403 1311 2403"/><path d="M394 2008C852 2008 852 1836 1311 1836"/><path d="M394 2181C852 2181 852 2329 1311 2329"/><path d="M394 2460C852 2460 852 2182 1311 2182"/><path d="M394 2414C852 2414 852 1627 1311 1627"/><path d="M394 2082C852 2082 852 1755 1311 1755"/><path d="M394 2240C852 2240 852 1973 1311 1973"/><path d="M394 1634C852 1634 852 2334 1311 2334"/><path d="M394 1978C852 1978 852 1700 1311 1700"/><path d="M394 1672C852 1672 852 2231 1311 2231"/><path d="M394 1707C852 1707 852 2472 1311 2472"/><path d="M394 1716C852 1716 852 1519 1311 1519"/><path d="M394 2487C852 2487 852 2205 1311 2205"/><path d="M394 1591C852 1591 852 1826 1311 1826"/><path d="M394 2153C852 2153 852 1964 1311 1964"/><path d="M394 1796C852 1796 852 2342 1311 2342"/><path d="M394 1755C852 1755 852 1695 1311 1695"/><path d="M394 2472C852 2472 852 1583 1311 1583"/><path d="M394 1495C852 1495 852 2345 1311 2345"/><path d="M394 2035C852 2035 852 1851 1311 1851"/><path d="M394 1990C852 1990 852 2415 1311 2415"/><path d="M394 1745C852 1745 852 2083 1311 2083"/><path d="M394 2143C852 2143 852 1658 1311 1658"/><path d="M394 1579C852 1579 852 1670 1311 1670"/><path d="M394 2532C852 2532 852 2342 1311 2342"/><path d="M394 1515C852 1515 852 2167 1311 2167"/><path d="M394 1944C852 1944 852 2499 1311 2499"/><path d="M394 1872C852 1872 852 2436 1311 2436"/><path d="M394 2136C852 2136 852 1982 1311 1982"/><path d="M394 2070C852 2070 852 2129 1311 2129"/><path d="M394 2271C852 2271 852 1644 1311 1644"/><path d="M394 1639C852 1639 852 2391 1311 2391"/><path d="M394 2393C852 2393 852 2222 1311 2222"/><path d="M394 2541C852 2541 852 1887 1311 1887"/><path d="M394 1572C852 1572 852 2466 1311 2466"/><path d="M394 1800C852 1800 852 2054 1311 2054"/><path d="M394 1577C852 1577 852 1868 1311 1868"/><path d="M394 1667C852 1667 852 2182 1311 2182"/><path d="M394 1825C852 1825 852 2246 1311 2246"/><path d="M394 1863C852 1863 852 1678 1311 1678"/><path d="M394 1903C852 1903 852 1868 1311 1868"/><path d="M394 1894C852 1894 852 1980 1311 1980"/><path d="M394 2236C852 2236 852 1577 1311 1577"/><path d="M394 1619C852 1619 852 2237 1311 2237"/><path d="M394 2118C852 2118 852 1951 1311 1951"/><path d="M394 2250C852 2250 852 1572 1311 1572"/><path d="M394 1613C852 1613 852 2248 1311 2248"/><path d="M394 1583C852 1583 852 1791 1311 1791"/><path d="M394 1652C852 1652 852 1691 1311 1691"/><path d="M394 2209C852 2209 852 1518 1311 1518"/><path d="M394 1715C852 1715 852 2044 1311 2044"/><path d="M394 2494C852 2494 852 1933 1311 1933"/><path d="M394 2513C852 2513 852 1658 1311 1658"/><path d="M394 1920C852 1920 852 1694 1311 1694"/><path d="M394 2483C852 2483 852 1855 1311 1855"/><path d="M394 1601C852 1601 852 1789 1311 1789"/><path d="M394 2001C852 2001 852 1525 1311 1525"/><path d="M394 1804C852 1804 852 1597 1311 1597"/><path d="M394 1959C852 1959 852 1599 1311 1599"/><path d="M394 1956C852 1956 852 2089 1311 2089"/><path d="M394 2310C852 2310 852 2380 1311 2380"/><path d="M394 1588C852 1588 852 2250 1311 2250"/><path d="M394 1874C852 1874 852 2070 1311 2070"/><path d="M394 1932C852 1932 852 2263 1311 2263"/><path d="M394 1537C852 1537 852 2241 1311 2241"/><path d="M394 1797C852 1797 852 2091 1311 2091"/><path d="M394 1994C852 1994 852 2173 1311 2173"/><path d="M394 2355C852 2355 852 1858 1311 1858"/><path d="M394 1866C852 1866 852 2045 1311 2045"/><path d="M394 2485C852 2485 852 1816 1311 1816"/><path d="M394 2106C852 2106 852 1805 1311 1805"/><path d="M394 1959C852 1959 852 2437 1311 2437"/><path d="M394 2168C852 2168 852 1494 1311 1494"/><path d="M394 2469C852 2469 852 1706 1311 1706"/><path d="M394 1913C852 1913 852 2207 1311 2207"/><path d="M394 1527C852 1527 852 2151 1311 2151"/><path d="M394 2047C852 2047 852 2381 1311 2381"/><path d="M394 2184C852 2184 852 2124 1311 2124"/><path d="M394 2528C852 2528 852 1965 1311 1965"/><path d="M394 1866C852 1866 852 2047 1311 2047"/><path d="M394 1585C852 1585 852 2347 1311 2347"/><path d="M394 1828C852 1828 852 1935 1311 1935"/><path d="M394 2405C852 2405 852 2412 1311 2412"/><path d="M394 2503C852 2503 852 1625 1311 1625"/><path d="M394 2415C852 2415 852 1746 1311 1746"/><path d="M394 1703C852 1703 852 2427 1311 2427"/><path d="M394 1674C852 1674 852 2406 1311 2406"/><path d="M394 2524C852 2524 852 1488 1311 1488"/><path d="M394 1591C852 1591 852 1499 1311 1499"/><path d="M394 2249C852 2249 852 1907 1311 1907"/><path d="M394 1484C852 1484 852 2131 1311 2131"/><path d="M394 1531C852 1531 852 2224 1311 2224"/><path d="M394 2470C852 2470 852 2300 1311 2300"/><path d="M394 2233C852 2233 852 1881 1311 1881"/><path d="M394 1803C852 1803 852 2189 1311 2189"/><path d="M394 2037C852 2037 852 1733 1311 1733"/><path d="M394 2040C852 2040 852 2339 1311 2339"/><path d="M394 1757C852 1757 852 2112 1311 2112"/><path d="M394 2249C852 2249 852 1773 1311 1773"/><path d="M394 1941C852 1941 852 2130 1311 2130"/><path d="M394 1760C852 1760 852 1814 1311 1814"/><path d="M394 2339C852 2339 852 2398 1311 2398"/><path d="M394 1923C852 1923 852 2186 1311 2186"/><path d="M394 1643C852 1643 852 2457 1311 2457"/><path d="M394 1830C852 1830 852 1646 1311 1646"/><path d="M394 2043C852 2043 852 1790 1311 1790"/><path d="M394 1693C852 1693 852 1779 1311 1779"/><path d="M394 2121C852 2121 852 2517 1311 2517"/><path d="M394 1687C852 1687 852 1641 1311 1641"/><path d="M394 1995C852 1995 852 1832 1311 1832"/><path d="M394 1670C852 1670 852 2324 1311 2324"/><path d="M394 2099C852 2099 852 1857 1311 1857"/><path d="M394 2259C852 2259 852 2267 1311 2267"/><path d="M394 1660C852 1660 852 2489 1311 2489"/><path d="M394 2053C852 2053 852 2022 1311 2022"/><path d="M394 2284C852 2284 852 1643 1311 1643"/><path d="M394 1519C852 1519 852 2042 1311 2042"/><path d="M394 2307C852 2307 852 2011 1311 2011"/><path d="M394 1989C852 1989 852 1919 1311 1919"/><path d="M394 1770C852 1770 852 2507 1311 2507"/><path d="M394 1925C852 1925 852 2030 1311 2030"/><path d="M394 1955C852 1955 852 2507 1311 2507"/><path d="M394 2283C852 2283 852 1516 1311 1516"/><path d="M394 1996C852 1996 852 1486 1311 1486"/><path d="M394 2281C852 2281 852 2167 1311 2167"/><path d="M394 1865C852 1865 852 2448 1311 2448"/><path d="M394 1798C852 1798 852 1889 1311 1889"/><path d="M394 2511C852 2511 852 1679 1311 1679"/><path d="M394 2210C852 2210 852 1867 1311 1867"/><path d="M394 1892C852 1892 852 2513 1311 2513"/><path d="M394 2286C852 2286 852 1774 1311 1774"/><path d="M394 1788C852 1788 852 2155 1311 2155"/><path d="M394 2366C852 2366 852 2086 1311 2086"/><path d="M394 2374C852 2374 852 2242 1311 2242"/><path d="M394 2268C852 2268 852 1922 1311 1922"/><path d="M394 2126C852 2126 852 2363 1311 2363"/><path d="M394 2131C852 2131 852 2449 1311 2449"/><path d="M394 1556C852 1556 852 2379 1311 2379"/><path d="M394 1980C852 1980 852 1998 1311 1998"/><path d="M394 2154C852 2154 852 1843 1311 1843"/><path d="M394 2349C852 2349 852 1766 1311 1766"/><path d="M394 2342C852 2342 852 2510 1311 2510"/><path d="M394 2234C852 2234 852 1689 1311 1689"/><path d="M394 1526C852 1526 852 1666 1311 1666"/><path d="M394 2000C852 2000 852 1567 1311 1567"/><path d="M394 2164C852 2164 852 2465 1311 2465"/><path d="M394 1536C852 1536 852 2064 1311 2064"/><path d="M394 2527C852 2527 852 2065 1311 2065"/><path d="M394 1574C852 1574 852 1772 1311 1772"/><path d="M394 2421C852 2421 852 1671 1311 1671"/><path d="M394 1952C852 1952 852 2237 1311 2237"/><path d="M394 2287C852 2287 852 2284 1311 2284"/><path d="M394 2430C852 2430 852 2467 1311 2467"/><path d="M394 1815C852 1815 852 2151 1311 2151"/><path d="M394 1783C852 1783 852 1898 1311 1898"/><path d="M394 1961C852 1961 852 2444 1311 2444"/><path d="M394 2403C852 2403 852 1973 1311 1973"/><path d="M394 2340C852 2340 852 2198 1311 2198"/><path d="M394 2189C852 2189 852 1813 1311 1813"/><path d="M394 2377C852 2377 852 1539 1311 1539"/><path d="M394 1545C852 1545 852 1796 1311 1796"/><path d="M394 2394C852 2394 852 1618 1311 1618"/><path d="M394 1875C852 1875 852 2270 1311 2270"/><path d="M394 1605C852 1605 852 1551 1311 1551"/><path d="M394 1955C852 1955 852 1735 1311 1735"/><path d="M394 2192C852 2192 852 1628 1311 1628"/><path d="M394 1634C852 1634 852 2341 1311 2341"/><path d="M394 2273C852 2273 852 2399 1311 2399"/><path d="M394 1685C852 1685 852 1983 1311 1983"/><path d="M394 2402C852 2402 852 2506 1311 2506"/><path d="M394 1673C852 1673 852 2221 1311 2221"/><path d="M394 2474C852 2474 852 1762 1311 1762"/><path d="M394 2159C852 2159 852 1737 1311 1737"/><path d="M394 2016C852 2016 852 2038 1311 2038"/><path d="M394 1685C852 1685 852 1676 1311 1676"/><path d="M394 2508C852 2508 852 2331 1311 2331"/><path d="M394 1904C852 1904 852 2040 1311 2040"/><path d="M394 2304C852 2304 852 1572 1311 1572"/><path d="M394 1593C852 1593 852 2352 1311 2352"/><path d="M394 2526C852 2526 852 2139 1311 2139"/><path d="M394 1664C852 1664 852 2278 1311 2278"/><path d="M394 1847C852 1847 852 2324 1311 2324"/><path d="M394 2129C852 2129 852 2444 1311 2444"/><path d="M394 1723C852 1723 852 1819 1311 1819"/><path d="M394 1662C852 1662 852 1640 1311 1640"/><path d="M394 2448C852 2448 852 1505 1311 1505"/><path d="M394 2379C852 2379 852 2272 1311 2272"/><path d="M394 1561C852 1561 852 1926 1311 1926"/><path d="M394 1577C852 1577 852 1484 1311 1484"/><path d="M394 2243C852 2243 852 2241 1311 2241"/><path d="M394 2079C852 2079 852 1924 1311 1924"/><path d="M394 1918C852 1918 852 2142 1311 2142"/><path d="M394 1569C852 1569 852 1685 1311 1685"/><path d="M394 2390C852 2390 852 2260 1311 2260"/><path d="M394 1909C852 1909 852 1943 1311 1943"/><path d="M394 1993C852 1993 852 2010 1311 2010"/><path d="M394 2485C852 2485 852 1603 1311 1603"/><path d="M394 2057C852 2057 852 1774 1311 1774"/><path d="M394 2542C852 2542 852 2217 1311 2217"/><path d="M394 1567C852 1567 852 1923 1311 1923"/><path d="M394 2181C852 2181 852 1776 1311 1776"/><path d="M394 2222C852 2222 852 2173 1311 2173"/><path d="M394 1678C852 1678 852 2015 1311 2015"/><path d="M394 1987C852 1987 852 2322 1311 2322"/><path d="M394 1925C852 1925 852 1982 1311 1982"/><path d="M394 2037C852 2037 852 1607 1311 1607"/><path d="M394 2443C852 2443 852 1982 1311 1982"/><path d="M394 2014C852 2014 852 1782 1311 1782"/><path d="M394 1892C852 1892 852 2066 1311 2066"/><path d="M394 2222C852 2222 852 2031 1311 2031"/><path d="M394 1597C852 1597 852 2279 1311 2279"/><path d="M394 1892C852 1892 852 1877 1311 1877"/><path d="M394 2070C852 2070 852 1864 1311 1864"/><path d="M394 1916C852 1916 852 2054 1311 2054"/><path d="M394 2545C852 2545 852 1838 1311 1838"/><path d="M394 1872C852 1872 852 2243 1311 2243"/><path d="M394 2153C852 2153 852 1957 1311 1957"/><path d="M394 2027C852 2027 852 1881 1311 1881"/><path d="M394 1862C852 1862 852 1807 1311 1807"/><path d="M394 1942C852 1942 852 2267 1311 2267"/><path d="M394 2160C852 2160 852 2223 1311 2223"/><path d="M394 2434C852 2434 852 2411 1311 2411"/><path d="M394 2342C852 2342 852 1724 1311 1724"/><path d="M394 2270C852 2270 852 2002 1311 2002"/><path d="M394 1929C852 1929 852 2507 1311 2507"/><path d="M394 1675C852 1675 852 1647 1311 1647"/><path d="M394 2107C852 2107 852 2095 1311 2095"/><path d="M394 1812C852 1812 852 1925 1311 1925"/><path d="M394 1495C852 1495 852 1723 1311 1723"/><path d="M394 1650C852 1650 852 2505 1311 2505"/><path d="M394 1703C852 1703 852 2421 1311 2421"/><path d="M394 1690C852 1690 852 2049 1311 2049"/><path d="M394 2235C852 2235 852 1655 1311 1655"/><path d="M394 2140C852 2140 852 1623 1311 1623"/><path d="M394 1696C852 1696 852 2443 1311 2443"/><path d="M394 2126C852 2126 852 1619 1311 1619"/><path d="M394 2026C852 2026 852 1621 1311 1621"/><path d="M394 2351C852 2351 852 1579 1311 1579"/><path d="M394 1852C852 1852 852 1608 1311 1608"/><path d="M394 1647C852 1647 852 1808 1311 1808"/><path d="M394 1690C852 1690 852 1699 1311 1699"/><path d="M394 2478C852 2478 852 1899 1311 1899"/><path d="M394 1827C852 1827 852 2119 1311 2119"/><path d="M394 1786C852 1786 852 2327 1311 2327"/><path d="M394 1951C852 1951 852 2297 1311 2297"/><path d="M394 2471C852 2471 852 1595 1311 1595"/><path d="M394 1952C852 1952 852 2107 1311 2107"/><path d="M394 2404C852 2404 852 2206 1311 2206"/><path d="M394 1678C852 1678 852 1947 1311 1947"/><path d="M394 1579C852 1579 852 2033 1311 2033"/><path d="M394 2372C852 2372 852 1791 1311 1791"/><path d="M394 2541C852 2541 852 2491 1311 2491"/><path d="M394 2081C852 2081 852 2526 1311 2526"/><path d="M394 2350C852 2350 852 2520 1311 2520"/><path d="M394 2509C852 2509 852 1723 1311 1723"/><path d="M394 2322C852 2322 852 2191 1311 2191"/><path d="M394 2195C852 2195 852 1680 1311 1680"/><path d="M394 1532C852 1532 852 1919 1311 1919"/><path d="M394 2302C852 2302 852 2388 1311 2388"/><path d="M394 2456C852 2456 852 1655 1311 1655"/><path d="M394 1536C852 1536 852 2458 1311 2458"/><path d="M394 2416C852 2416 852 1695 1311 1695"/><path d="M394 2423C852 2423 852 2376 1311 2376"/><path d="M394 1811C852 1811 852 1696 1311 1696"/><path d="M394 2023C852 2023 852 2542 1311 2542"/><path d="M394 2351C852 2351 852 1538 1311 1538"/><path d="M394 1727C852 1727 852 2234 1311 2234"/><path d="M394 1982C852 1982 852 2433 1311 2433"/><path d="M394 1985C852 1985 852 1479 1311 1479"/><path d="M394 2148C852 2148 852 2387 1311 2387"/><path d="M394 1846C852 1846 852 1581 1311 1581"/><path d="M394 1768C852 1768 852 2427 1311 2427"/><path d="M394 1492C852 1492 852 1833 1311 1833"/><path d="M394 2315C852 2315 852 2335 1311 2335"/><path d="M394 1870C852 1870 852 2163 1311 2163"/><path d="M394 1606C852 1606 852 1671 1311 1671"/><path d="M394 1719C852 1719 852 2299 1311 2299"/><path d="M394 2078C852 2078 852 2168 1311 2168"/><path d="M394 1669C852 1669 852 1697 1311 1697"/><path d="M394 2311C852 2311 852 1658 1311 1658"/><path d="M394 2075C852 2075 852 1702 1311 1702"/><path d="M394 1942C852 1942 852 2080 1311 2080"/><path d="M394 2034C852 2034 852 1636 1311 1636"/><path d="M394 1785C852 1785 852 1978 1311 1978"/><path d="M394 2376C852 2376 852 1737 1311 1737"/><path d="M394 1950C852 1950 852 1711 1311 1711"/><path d="M394 1673C852 1673 852 2251 1311 2251"/><path d="M394 1638C852 1638 852 2531 1311 2531"/><path d="M394 1752C852 1752 852 2107 1311 2107"/><path d="M394 1958C852 1958 852 2257 1311 2257"/><path d="M394 1623C852 1623 852 2429 1311 2429"/><path d="M394 2281C852 2281 852 1678 1311 1678"/><path d="M394 1576C852 1576 852 1595 1311 1595"/><path d="M394 2532C852 2532 852 2287 1311 2287"/><path d="M394 1966C852 1966 852 2389 1311 2389"/><path d="M394 1679C852 1679 852 1946 1311 1946"/><path d="M394 2510C852 2510 852 2032 1311 2032"/><path d="M394 2072C852 2072 852 1511 1311 1511"/><path d="M394 2175C852 2175 852 2061 1311 2061"/><path d="M394 1956C852 1956 852 1672 1311 1672"/><path d="M394 2093C852 2093 852 1604 1311 1604"/><path d="M394 2133C852 2133 852 1641 1311 1641"/><path d="M394 1931C852 1931 852 2496 1311 2496"/><path d="M394 1772C852 1772 852 1612 1311 1612"/><path d="M394 2074C852 2074 852 1867 1311 1867"/><path d="M394 2122C852 2122 852 2188 1311 2188"/><path d="M394 2090C852 2090 852 1824 1311 1824"/><path d="M394 1845C852 1845 852 1909 1311 1909"/><path d="M394 1539C852 1539 852 2045 1311 2045"/><path d="M394 1984C852 1984 852 1976 1311 1976"/><path d="M394 1597C852 1597 852 1485 1311 1485"/><path d="M394 1599C852 1599 852 2384 1311 2384"/><path d="M394 1974C852 1974 852 2534 1311 2534"/><path d="M394 2052C852 2052 852 2506 1311 2506"/><path d="M394 1761C852 1761 852 2080 1311 2080"/><path d="M394 2495C852 2495 852 2420 1311 2420"/><path d="M394 2456C852 2456 852 2291 1311 2291"/><path d="M394 1925C852 1925 852 2492 1311 2492"/><path d="M394 1971C852 1971 852 2116 1311 2116"/><path d="M394 1555C852 1555 852 2226 1311 2226"/><path d="M394 2473C852 2473 852 2050 1311 2050"/><path d="M394 1507C852 1507 852 2387 1311 2387"/><path d="M394 1950C852 1950 852 2537 1311 2537"/><path d="M394 2546C852 2546 852 2076 1311 2076"/><path d="M394 2144C852 2144 852 2060 1311 2060"/><path d="M394 2016C852 2016 852 1517 1311 1517"/><path d="M394 2375C852 2375 852 2279 1311 2279"/><path d="M394 2201C852 2201 852 2155 1311 2155"/><path d="M394 2049C852 2049 852 1499 1311 1499"/><path d="M394 1698C852 1698 852 1481 1311 1481"/><path d="M394 1923C852 1923 852 1864 1311 1864"/><path d="M394 1636C852 1636 852 2021 1311 2021"/><path d="M394 2480C852 2480 852 2528 1311 2528"/><path d="M394 1603C852 1603 852 1925 1311 1925"/><path d="M394 1636C852 1636 852 1561 1311 1561"/><path d="M394 2289C852 2289 852 1591 1311 1591"/><path d="M394 1922C852 1922 852 1766 1311 1766"/><path d="M394 1983C852 1983 852 2050 1311 2050"/><path d="M394 2520C852 2520 852 1991 1311 1991"/><path d="M394 2520C852 2520 852 1780 1311 1780"/><path d="M394 1638C852 1638 852 2516 1311 2516"/><path d="M394 2117C852 2117 852 2368 1311 2368"/><path d="M394 2021C852 2021 852 2219 1311 2219"/><path d="M394 1562C852 1562 852 2420 1311 2420"/><path d="M394 2125C852 2125 852 1719 1311 1719"/><path d="M394 1981C852 1981 852 1594 1311 1594"/><path d="M394 2249C852 2249 852 2055 1311 2055"/><path d="M394 2322C852 2322 852 1678 1311 1678"/><path d="M394 2376C852 2376 852 1579 1311 1579"/><path d="M394 2162C852 2162 852 2518 1311 2518"/><path d="M394 2463C852 2463 852 1579 1311 1579"/><path d="M394 1801C852 1801 852 2208 1311 2208"/><path d="M394 1800C852 1800 852 2141 1311 2141"/><path d="M394 2211C852 2211 852 1650 1311 1650"/><path d="M394 2032C852 2032 852 2400 1311 2400"/><path d="M394 1650C852 1650 852 1898 1311 1898"/><path d="M394 2447C852 2447 852 2007 1311 2007"/><path d="M394 1984C852 1984 852 2190 1311 2190"/><path d="M394 2204C852 2204 852 1889 1311 1889"/><path d="M394 1751C852 1751 852 1919 1311 1919"/><path d="M394 1717C852 1717 852 2198 1311 2198"/><path d="M394 1696C852 1696 852 1584 1311 1584"/><path d="M394 2297C852 2297 852 1869 1311 1869"/><path d="M394 1875C852 1875 852 2324 1311 2324"/><path d="M394 2097C852 2097 852 1701 1311 1701"/><path d="M394 1618C852 1618 852 2408 1311 2408"/><path d="M394 2365C852 2365 852 2327 1311 2327"/><path d="M394 2196C852 2196 852 1670 1311 1670"/><path d="M394 1542C852 1542 852 1544 1311 1544"/><path d="M394 2469C852 2469 852 1686 1311 1686"/><path d="M394 1520C852 1520 852 2205 1311 2205"/><path d="M394 2406C852 2406 852 1879 1311 1879"/><path d="M394 2427C852 2427 852 1733 1311 1733"/><path d="M394 1684C852 1684 852 1880 1311 1880"/><path d="M394 1863C852 1863 852 2030 1311 2030"/><path d="M394 2519C852 2519 852 2498 1311 2498"/><path d="M394 2295C852 2295 852 2061 1311 2061"/><path d="M394 2306C852 2306 852 1708 1311 1708"/><path d="M394 2034C852 2034 852 1523 1311 1523"/><path d="M394 2226C852 2226 852 1706 1311 1706"/><path d="M394 1569C852 1569 852 1984 1311 1984"/><path d="M394 1689C852 1689 852 2138 1311 2138"/><path d="M394 1867C852 1867 852 1865 1311 1865"/><path d="M394 1757C852 1757 852 2111 1311 2111"/><path d="M394 2463C852 2463 852 2511 1311 2511"/><path d="M394 2023C852 2023 852 1710 1311 1710"/><path d="M394 2010C852 2010 852 1648 1311 1648"/><path d="M394 2192C852 2192 852 2533 1311 2533"/><path d="M394 2102C852 2102 852 2220 1311 2220"/><path d="M394 2028C852 2028 852 2125 1311 2125"/><path d="M394 1545C852 1545 852 1992 1311 1992"/><path d="M394 2093C852 2093 852 2506 1311 2506"/><path d="M394 2213C852 2213 852 1955 1311 1955"/><path d="M394 2406C852 2406 852 2529 1311 2529"/><path d="M394 2289C852 2289 852 2051 1311 2051"/><path d="M394 2277C852 2277 852 1919 1311 1919"/><path d="M394 1858C852 1858 852 2005 1311 2005"/><path d="M394 1976C852 1976 852 1741 1311 1741"/><path d="M394 1877C852 1877 852 2230 1311 2230"/><path d="M394 2344C852 2344 852 1924 1311 1924"/><path d="M394 1485C852 1485 852 1693 1311 1693"/><path d="M394 1751C852 1751 852 1988 1311 1988"/><path d="M394 2132C852 2132 852 2179 1311 2179"/><path d="M394 2258C852 2258 852 2194 1311 2194"/><path d="M394 2480C852 2480 852 2551 1311 2551"/><path d="M394 1818C852 1818 852 2448 1311 2448"/><path d="M394 2032C852 2032 852 2480 1311 2480"/><path d="M394 2237C852 2237 852 2127 1311 2127"/><path d="M394 1685C852 1685 852 1666 1311 1666"/><path d="M394 1681C852 1681 852 2177 1311 2177"/><path d="M394 2398C852 2398 852 1909 1311 1909"/><path d="M394 2533C852 2533 852 2545 1311 2545"/><path d="M394 2500C852 2500 852 2318 1311 2318"/><path d="M394 2246C852 2246 852 2395 1311 2395"/><path d="M394 2113C852 2113 852 1730 1311 1730"/><path d="M394 1931C852 1931 852 1490 1311 1490"/><path d="M394 1673C852 1673 852 1724 1311 1724"/><path d="M394 1946C852 1946 852 1771 1311 1771"/><path d="M394 2549C852 2549 852 1627 1311 1627"/><path d="M394 1572C852 1572 852 2207 1311 2207"/><path d="M394 2528C852 2528 852 1700 1311 1700"/><path d="M394 2008C852 2008 852 2551 1311 2551"/><path d="M394 1849C852 1849 852 1773 1311 1773"/><path d="M394 1734C852 1734 852 1543 1311 1543"/><path d="M394 2078C852 2078 852 1763 1311 1763"/><path d="M394 1694C852 1694 852 1665 1311 1665"/><path d="M394 2457C852 2457 852 1945 1311 1945"/><path d="M394 1643C852 1643 852 1605 1311 1605"/><path d="M394 1716C852 1716 852 2158 1311 2158"/><path d="M394 1821C852 1821 852 1629 1311 1629"/><path d="M394 2237C852 2237 852 2055 1311 2055"/><path d="M394 2109C852 2109 852 2253 1311 2253"/><path d="M394 2152C852 2152 852 1536 1311 1536"/><path d="M394 1793C852 1793 852 2099 1311 2099"/><path d="M394 2134C852 2134 852 2427 1311 2427"/><path d="M394 1800C852 1800 852 2526 1311 2526"/><path d="M394 2144C852 2144 852 1871 1311 1871"/><path d="M394 1937C852 1937 852 1953 1311 1953"/><path d="M394 1478C852 1478 852 2545 1311 2545"/><path d="M394 2313C852 2313 852 1887 1311 1887"/><path d="M394 2130C852 2130 852 1975 1311 1975"/><path d="M394 2083C852 2083 852 2272 1311 2272"/><path d="M394 1741C852 1741 852 2344 1311 2344"/><path d="M394 2291C852 2291 852 2234 1311 2234"/><path d="M394 1676C852 1676 852 2060 1311 2060"/><path d="M394 2252C852 2252 852 2124 1311 2124"/><path d="M394 2385C852 2385 852 1812 1311 1812"/><path d="M394 1593C852 1593 852 2331 1311 2331"/><path d="M394 1663C852 1663 852 1788 1311 1788"/><path d="M394 2521C852 2521 852 1965 1311 1965"/><path d="M394 2053C852 2053 852 1848 1311 1848"/><path d="M394 1680C852 1680 852 1991 1311 1991"/><path d="M394 1716C852 1716 852 1726 1311 1726"/><path d="M394 1491C852 1491 852 2045 1311 2045"/><path d="M394 2267C852 2267 852 2419 1311 2419"/><path d="M394 1768C852 1768 852 1529 1311 1529"/><path d="M394 2471C852 2471 852 2075 1311 2075"/><path d="M394 1644C852 1644 852 2471 1311 2471"/><path d="M394 1604C852 1604 852 2169 1311 2169"/><path d="M394 2294C852 2294 852 1690 1311 1690"/><path d="M394 1631C852 1631 852 1757 1311 1757"/><path d="M394 2462C852 2462 852 1665 1311 1665"/><path d="M394 2212C852 2212 852 1570 1311 1570"/><path d="M394 2297C852 2297 852 1777 1311 1777"/><path d="M394 2516C852 2516 852 2056 1311 2056"/><path d="M394 1925C852 1925 852 2239 1311 2239"/><path d="M394 1504C852 1504 852 1913 1311 1913"/><path d="M394 2021C852 2021 852 2080 1311 2080"/><path d="M394 1592C852 1592 852 1718 1311 1718"/><path d="M394 1482C852 1482 852 2275 1311 2275"/><path d="M394 2222C852 2222 852 2551 1311 2551"/><path d="M394 1768C852 1768 852 2459 1311 2459"/><path d="M394 2309C852 2309 852 1530 1311 1530"/><path d="M394 2205C852 2205 852 2121 1311 2121"/><path d="M394 1511C852 1511 852 2345 1311 2345"/><path d="M394 2212C852 2212 852 2052 1311 2052"/><path d="M394 2359C852 2359 852 2264 1311 2264"/><path d="M394 1729C852 1729 852 2257 1311 2257"/><path d="M394 1824C852 1824 852 2218 1311 2218"/><path d="M394 2537C852 2537 852 2128 1311 2128"/><path d="M394 2282C852 2282 852 1621 1311 1621"/><path d="M394 1667C852 1667 852 2380 1311 2380"/><path d="M394 2246C852 2246 852 2324 1311 2324"/><path d="M394 1672C852 1672 852 1953 1311 1953"/><path d="M394 2177C852 2177 852 2064 1311 2064"/><path d="M394 1628C852 1628 852 2226 1311 2226"/><path d="M394 1760C852 1760 852 2413 1311 2413"/><path d="M394 1670C852 1670 852 2293 1311 2293"/><path d="M394 1538C852 1538 852 1983 1311 1983"/><path d="M394 2240C852 2240 852 2079 1311 2079"/><path d="M394 2034C852 2034 852 2493 1311 2493"/><path d="M394 1904C852 1904 852 1903 1311 1903"/><path d="M394 2253C852 2253 852 2459 1311 2459"/><path d="M394 1844C852 1844 852 1768 1311 1768"/><path d="M394 1773C852 1773 852 2418 1311 2418"/><path d="M394 2508C852 2508 852 2512 1311 2512"/><path d="M394 1593C852 1593 852 1674 1311 1674"/><path d="M394 1683C852 1683 852 2407 1311 2407"/><path d="M394 1924C852 1924 852 2339 1311 2339"/><path d="M394 1555C852 1555 852 1521 1311 1521"/><path d="M394 1781C852 1781 852 1798 1311 1798"/><path d="M394 2039C852 2039 852 2028 1311 2028"/><path d="M394 1737C852 1737 852 2018 1311 2018"/><path d="M394 2391C852 2391 852 1805 1311 1805"/><path d="M394 2113C852 2113 852 2132 1311 2132"/><path d="M394 2191C852 2191 852 2122 1311 2122"/><path d="M394 2353C852 2353 852 2073 1311 2073"/><path d="M394 2091C852 2091 852 2228 1311 2228"/><path d="M394 2119C852 2119 852 1838 1311 1838"/><path d="M394 1483C852 1483 852 1735 1311 1735"/><path d="M394 2468C852 2468 852 2048 1311 2048"/><path d="M394 2233C852 2233 852 2143 1311 2143"/><path d="M394 2465C852 2465 852 2334 1311 2334"/><path d="M394 1775C852 1775 852 1677 1311 1677"/><path d="M394 1613C852 1613 852 1989 1311 1989"/><path d="M394 1603C852 1603 852 1799 1311 1799"/><path d="M394 2033C852 2033 852 1572 1311 1572"/><path d="M394 2526C852 2526 852 2460 1311 2460"/><path d="M394 2055C852 2055 852 2150 1311 2150"/><path d="M394 2542C852 2542 852 2455 1311 2455"/><path d="M394 1814C852 1814 852 1722 1311 1722"/><path d="M394 1854C852 1854 852 2478 1311 2478"/><path d="M394 2376C852 2376 852 2531 1311 2531"/><path d="M394 2492C852 2492 852 1774 1311 1774"/><path d="M394 2100C852 2100 852 2183 1311 2183"/><path d="M394 2228C852 2228 852 2247 1311 2247"/><path d="M394 2252C852 2252 852 1939 1311 1939"/><path d="M394 1844C852 1844 852 2181 1311 2181"/><path d="M394 2430C852 2430 852 2231 1311 2231"/><path d="M394 2547C852 2547 852 1479 1311 1479"/><path d="M394 1658C852 1658 852 1978 1311 1978"/><path d="M394 2182C852 2182 852 2266 1311 2266"/><path d="M394 1576C852 1576 852 1542 1311 1542"/><path d="M394 2511C852 2511 852 1727 1311 1727"/><path d="M394 1800C852 1800 852 2191 1311 2191"/><path d="M394 1685C852 1685 852 2035 1311 2035"/><path d="M394 2494C852 2494 852 1523 1311 1523"/><path d="M394 2453C852 2453 852 2483 1311 2483"/><path d="M394 2434C852 2434 852 2191 1311 2191"/><path d="M394 1765C852 1765 852 2537 1311 2537"/><path d="M394 2522C852 2522 852 1684 1311 1684"/><path d="M394 1839C852 1839 852 2151 1311 2151"/><path d="M394 1856C852 1856 852 2123 1311 2123"/><path d="M394 2399C852 2399 852 1880 1311 1880"/><path d="M394 1670C852 1670 852 2141 1311 2141"/><path d="M394 2263C852 2263 852 1526 1311 1526"/><path d="M394 2317C852 2317 852 2549 1311 2549"/><path d="M394 1744C852 1744 852 1502 1311 1502"/><path d="M394 1745C852 1745 852 1609 1311 1609"/><path d="M394 2305C852 2305 852 1698 1311 1698"/><path d="M394 1771C852 1771 852 1828 1311 1828"/><path d="M394 2274C852 2274 852 2519 1311 2519"/><path d="M394 2404C852 2404 852 1987 1311 1987"/><path d="M394 1559C852 1559 852 2371 1311 2371"/><path d="M394 2472C852 2472 852 2531 1311 2531"/><path d="M394 2531C852 2531 852 2061 1311 2061"/><path d="M394 1713C852 1713 852 1852 1311 1852"/><path d="M394 2433C852 2433 852 2138 1311 2138"/><path d="M394 2106C852 2106 852 1771 1311 1771"/><path d="M394 1867C852 1867 852 2240 1311 2240"/><path d="M394 1568C852 1568 852 1671 1311 1671"/><path d="M394 2333C852 2333 852 2480 1311 2480"/><path d="M394 2478C852 2478 852 2181 1311 2181"/><path d="M394 1736C852 1736 852 1979 1311 1979"/><path d="M394 2357C852 2357 852 1757 1311 1757"/><path d="M394 2138C852 2138 852 1940 1311 1940"/><path d="M394 2079C852 2079 852 2485 1311 2485"/></g><g stroke="#b0b6c8" stroke-opacity="0.072" stroke-width="1.2" fill="none"><path d="M394 1709C852 1709 852 1570 1311 1570"/><path d="M394 1553C852 1553 852 1575 1311 1575"/><path d="M394 2084C852 2084 852 2143 1311 2143"/><path d="M394 1845C852 1845 852 2480 1311 2480"/><path d="M394 2380C852 2380 852 2493 1311 2493"/><path d="M394 2361C852 2361 852 1784 1311 1784"/><path d="M394 2431C852 2431 852 1851 1311 1851"/><path d="M394 1860C852 1860 852 2134 1311 2134"/><path d="M394 2011C852 2011 852 1657 1311 1657"/><path d="M394 1924C852 1924 852 1863 1311 1863"/><path d="M394 2181C852 2181 852 2273 1311 2273"/><path d="M394 2209C852 2209 852 2079 1311 2079"/><path d="M394 2390C852 2390 852 2545 1311 2545"/><path d="M394 1688C852 1688 852 1735 1311 1735"/><path d="M394 2222C852 2222 852 2505 1311 2505"/><path d="M394 2338C852 2338 852 2522 1311 2522"/><path d="M394 1508C852 1508 852 2113 1311 2113"/><path d="M394 2294C852 2294 852 2458 1311 2458"/><path d="M394 2028C852 2028 852 2222 1311 2222"/><path d="M394 2372C852 2372 852 1651 1311 1651"/><path d="M394 2546C852 2546 852 1912 1311 1912"/><path d="M394 1871C852 1871 852 1841 1311 1841"/><path d="M394 1768C852 1768 852 1617 1311 1617"/><path d="M394 2070C852 2070 852 1681 1311 1681"/><path d="M394 2358C852 2358 852 1942 1311 1942"/><path d="M394 1633C852 1633 852 2108 1311 2108"/><path d="M394 1741C852 1741 852 1761 1311 1761"/><path d="M394 1585C852 1585 852 1712 1311 1712"/><path d="M394 1790C852 1790 852 2033 1311 2033"/><path d="M394 1692C852 1692 852 2529 1311 2529"/><path d="M394 2013C852 2013 852 2419 1311 2419"/><path d="M394 1505C852 1505 852 1482 1311 1482"/><path d="M394 2111C852 2111 852 1865 1311 1865"/><path d="M394 2431C852 2431 852 2283 1311 2283"/><path d="M394 1769C852 1769 852 1745 1311 1745"/><path d="M394 2045C852 2045 852 1981 1311 1981"/><path d="M394 2151C852 2151 852 2045 1311 2045"/><path d="M394 1479C852 1479 852 2055 1311 2055"/><path d="M394 2065C852 2065 852 1509 1311 1509"/><path d="M394 1934C852 1934 852 1876 1311 1876"/><path d="M394 1515C852 1515 852 1841 1311 1841"/><path d="M394 1679C852 1679 852 1718 1311 1718"/><path d="M394 1503C852 1503 852 2118 1311 2118"/><path d="M394 1534C852 1534 852 1543 1311 1543"/><path d="M394 2081C852 2081 852 2293 1311 2293"/><path d="M394 1987C852 1987 852 1878 1311 1878"/><path d="M394 1685C852 1685 852 1869 1311 1869"/><path d="M394 2150C852 2150 852 1913 1311 1913"/><path d="M394 2506C852 2506 852 2502 1311 2502"/><path d="M394 1732C852 1732 852 2403 1311 2403"/><path d="M394 1930C852 1930 852 2540 1311 2540"/><path d="M394 1664C852 1664 852 1621 1311 1621"/><path d="M394 2353C852 2353 852 2357 1311 2357"/><path d="M394 1562C852 1562 852 1512 1311 1512"/><path d="M394 1662C852 1662 852 1550 1311 1550"/><path d="M394 1929C852 1929 852 2104 1311 2104"/><path d="M394 2537C852 2537 852 1978 1311 1978"/><path d="M394 2298C852 2298 852 2316 1311 2316"/><path d="M394 2376C852 2376 852 2349 1311 2349"/><path d="M394 1593C852 1593 852 1616 1311 1616"/><path d="M394 2353C852 2353 852 1686 1311 1686"/><path d="M394 1751C852 1751 852 2514 1311 2514"/><path d="M394 1865C852 1865 852 2299 1311 2299"/><path d="M394 1791C852 1791 852 2150 1311 2150"/><path d="M394 1525C852 1525 852 2049 1311 2049"/><path d="M394 1991C852 1991 852 2056 1311 2056"/><path d="M394 2385C852 2385 852 2278 1311 2278"/><path d="M394 2428C852 2428 852 2326 1311 2326"/><path d="M394 1483C852 1483 852 2005 1311 2005"/><path d="M394 2225C852 2225 852 2364 1311 2364"/><path d="M394 1860C852 1860 852 1909 1311 1909"/><path d="M394 2436C852 2436 852 2278 1311 2278"/><path d="M394 2038C852 2038 852 2410 1311 2410"/><path d="M394 2100C852 2100 852 1613 1311 1613"/><path d="M394 2332C852 2332 852 2266 1311 2266"/><path d="M394 1780C852 1780 852 2429 1311 2429"/><path d="M394 2094C852 2094 852 2283 1311 2283"/><path d="M394 1757C852 1757 852 2230 1311 2230"/><path d="M394 2154C852 2154 852 1747 1311 1747"/><path d="M394 1969C852 1969 852 1698 1311 1698"/><path d="M394 1539C852 1539 852 1773 1311 1773"/><path d="M394 1544C852 1544 852 1559 1311 1559"/><path d="M394 2546C852 2546 852 2510 1311 2510"/><path d="M394 2534C852 2534 852 2207 1311 2207"/><path d="M394 2346C852 2346 852 1579 1311 1579"/><path d="M394 2306C852 2306 852 1704 1311 1704"/><path d="M394 2215C852 2215 852 2142 1311 2142"/><path d="M394 2124C852 2124 852 1809 1311 1809"/><path d="M394 2527C852 2527 852 1742 1311 1742"/><path d="M394 2066C852 2066 852 2313 1311 2313"/><path d="M394 1810C852 1810 852 1540 1311 1540"/><path d="M394 2108C852 2108 852 1488 1311 1488"/><path d="M394 1859C852 1859 852 1545 1311 1545"/><path d="M394 1897C852 1897 852 1881 1311 1881"/><path d="M394 2460C852 2460 852 2436 1311 2436"/><path d="M394 2269C852 2269 852 1672 1311 1672"/><path d="M394 2005C852 2005 852 1820 1311 1820"/><path d="M394 1865C852 1865 852 1522 1311 1522"/><path d="M394 2382C852 2382 852 2406 1311 2406"/><path d="M394 2481C852 2481 852 1746 1311 1746"/><path d="M394 2048C852 2048 852 1552 1311 1552"/><path d="M394 2027C852 2027 852 2429 1311 2429"/><path d="M394 1951C852 1951 852 1545 1311 1545"/><path d="M394 2276C852 2276 852 2294 1311 2294"/><path d="M394 2415C852 2415 852 2130 1311 2130"/><path d="M394 2255C852 2255 852 1793 1311 1793"/><path d="M394 2508C852 2508 852 1697 1311 1697"/><path d="M394 1529C852 1529 852 2085 1311 2085"/><path d="M394 2365C852 2365 852 2259 1311 2259"/><path d="M394 2514C852 2514 852 2001 1311 2001"/><path d="M394 2072C852 2072 852 2463 1311 2463"/><path d="M394 2496C852 2496 852 2005 1311 2005"/><path d="M394 1892C852 1892 852 1537 1311 1537"/><path d="M394 2104C852 2104 852 2509 1311 2509"/><path d="M394 2106C852 2106 852 1922 1311 1922"/><path d="M394 2051C852 2051 852 1892 1311 1892"/><path d="M394 2177C852 2177 852 2510 1311 2510"/><path d="M394 1768C852 1768 852 2307 1311 2307"/><path d="M394 1860C852 1860 852 2385 1311 2385"/><path d="M394 2084C852 2084 852 1723 1311 1723"/><path d="M394 2248C852 2248 852 1752 1311 1752"/><path d="M394 1536C852 1536 852 2228 1311 2228"/><path d="M394 1625C852 1625 852 2215 1311 2215"/><path d="M394 2205C852 2205 852 1644 1311 1644"/><path d="M394 1981C852 1981 852 2530 1311 2530"/><path d="M394 2083C852 2083 852 1595 1311 1595"/><path d="M394 2467C852 2467 852 2552 1311 2552"/><path d="M394 2450C852 2450 852 2493 1311 2493"/><path d="M394 2217C852 2217 852 1654 1311 1654"/><path d="M394 1667C852 1667 852 2256 1311 2256"/><path d="M394 2203C852 2203 852 2088 1311 2088"/><path d="M394 1569C852 1569 852 1826 1311 1826"/><path d="M394 2048C852 2048 852 1748 1311 1748"/><path d="M394 1916C852 1916 852 1557 1311 1557"/><path d="M394 1588C852 1588 852 2370 1311 2370"/><path d="M394 1879C852 1879 852 2143 1311 2143"/><path d="M394 2232C852 2232 852 2504 1311 2504"/><path d="M394 1800C852 1800 852 2238 1311 2238"/><path d="M394 1751C852 1751 852 1685 1311 1685"/><path d="M394 1501C852 1501 852 2540 1311 2540"/><path d="M394 2296C852 2296 852 1767 1311 1767"/><path d="M394 1980C852 1980 852 2098 1311 2098"/><path d="M394 2199C852 2199 852 1913 1311 1913"/><path d="M394 2235C852 2235 852 1712 1311 1712"/><path d="M394 2410C852 2410 852 1507 1311 1507"/><path d="M394 2311C852 2311 852 2539 1311 2539"/><path d="M394 1620C852 1620 852 1488 1311 1488"/><path d="M394 1640C852 1640 852 2153 1311 2153"/><path d="M394 1495C852 1495 852 2344 1311 2344"/><path d="M394 2084C852 2084 852 1918 1311 1918"/><path d="M394 2532C852 2532 852 2327 1311 2327"/><path d="M394 1781C852 1781 852 1834 1311 1834"/><path d="M394 2211C852 2211 852 2120 1311 2120"/><path d="M394 1528C852 1528 852 2309 1311 2309"/><path d="M394 2285C852 2285 852 1977 1311 1977"/><path d="M394 1547C852 1547 852 1597 1311 1597"/><path d="M394 1828C852 1828 852 1522 1311 1522"/><path d="M394 1894C852 1894 852 1892 1311 1892"/><path d="M394 1987C852 1987 852 2173 1311 2173"/><path d="M394 2026C852 2026 852 2114 1311 2114"/><path d="M394 1663C852 1663 852 2361 1311 2361"/><path d="M394 1484C852 1484 852 1618 1311 1618"/><path d="M394 1753C852 1753 852 1763 1311 1763"/><path d="M394 2243C852 2243 852 1795 1311 1795"/><path d="M394 2380C852 2380 852 1924 1311 1924"/><path d="M394 1667C852 1667 852 1548 1311 1548"/><path d="M394 1794C852 1794 852 1833 1311 1833"/><path d="M394 2209C852 2209 852 2242 1311 2242"/><path d="M394 1927C852 1927 852 2105 1311 2105"/><path d="M394 2191C852 2191 852 1799 1311 1799"/><path d="M394 1808C852 1808 852 1745 1311 1745"/><path d="M394 2055C852 2055 852 1879 1311 1879"/><path d="M394 2340C852 2340 852 2114 1311 2114"/><path d="M394 2421C852 2421 852 1540 1311 1540"/><path d="M394 2081C852 2081 852 2338 1311 2338"/><path d="M394 2236C852 2236 852 1953 1311 1953"/><path d="M394 1621C852 1621 852 1650 1311 1650"/><path d="M394 1532C852 1532 852 1836 1311 1836"/><path d="M394 2347C852 2347 852 2255 1311 2255"/><path d="M394 1922C852 1922 852 2226 1311 2226"/><path d="M394 1490C852 1490 852 2488 1311 2488"/><path d="M394 2549C852 2549 852 2328 1311 2328"/><path d="M394 2208C852 2208 852 1655 1311 1655"/><path d="M394 2309C852 2309 852 1846 1311 1846"/><path d="M394 1567C852 1567 852 1901 1311 1901"/><path d="M394 2544C852 2544 852 1679 1311 1679"/><path d="M394 1881C852 1881 852 2441 1311 2441"/><path d="M394 2133C852 2133 852 2438 1311 2438"/><path d="M394 1542C852 1542 852 2181 1311 2181"/><path d="M394 2063C852 2063 852 1930 1311 1930"/><path d="M394 1641C852 1641 852 2291 1311 2291"/><path d="M394 2188C852 2188 852 2389 1311 2389"/><path d="M394 2288C852 2288 852 2206 1311 2206"/><path d="M394 2275C852 2275 852 1845 1311 1845"/><path d="M394 1574C852 1574 852 1599 1311 1599"/><path d="M394 1991C852 1991 852 1622 1311 1622"/><path d="M394 1495C852 1495 852 1858 1311 1858"/><path d="M394 2400C852 2400 852 1869 1311 1869"/><path d="M394 1947C852 1947 852 2265 1311 2265"/><path d="M394 1651C852 1651 852 2441 1311 2441"/><path d="M394 2248C852 2248 852 1982 1311 1982"/><path d="M394 2129C852 2129 852 1605 1311 1605"/><path d="M394 1522C852 1522 852 1981 1311 1981"/><path d="M394 2026C852 2026 852 2506 1311 2506"/><path d="M394 2037C852 2037 852 1967 1311 1967"/><path d="M394 1826C852 1826 852 1580 1311 1580"/><path d="M394 1772C852 1772 852 1746 1311 1746"/><path d="M394 1547C852 1547 852 1609 1311 1609"/><path d="M394 2191C852 2191 852 1741 1311 1741"/><path d="M394 2541C852 2541 852 1667 1311 1667"/><path d="M394 1486C852 1486 852 1585 1311 1585"/><path d="M394 1882C852 1882 852 1542 1311 1542"/><path d="M394 1567C852 1567 852 1763 1311 1763"/><path d="M394 1607C852 1607 852 2535 1311 2535"/><path d="M394 2055C852 2055 852 1729 1311 1729"/><path d="M394 2207C852 2207 852 1492 1311 1492"/><path d="M394 2107C852 2107 852 1964 1311 1964"/><path d="M394 1627C852 1627 852 1557 1311 1557"/><path d="M394 2236C852 2236 852 2104 1311 2104"/><path d="M394 2114C852 2114 852 1750 1311 1750"/><path d="M394 2274C852 2274 852 2148 1311 2148"/><path d="M394 2239C852 2239 852 1886 1311 1886"/><path d="M394 1516C852 1516 852 1624 1311 1624"/><path d="M394 2140C852 2140 852 2172 1311 2172"/><path d="M394 1948C852 1948 852 1666 1311 1666"/><path d="M394 2261C852 2261 852 1845 1311 1845"/><path d="M394 1642C852 1642 852 2331 1311 2331"/><path d="M394 2147C852 2147 852 2364 1311 2364"/><path d="M394 1553C852 1553 852 1894 1311 1894"/><path d="M394 1716C852 1716 852 1820 1311 1820"/><path d="M394 2284C852 2284 852 2306 1311 2306"/><path d="M394 2127C852 2127 852 1788 1311 1788"/><path d="M394 1617C852 1617 852 1686 1311 1686"/><path d="M394 1750C852 1750 852 2182 1311 2182"/><path d="M394 2330C852 2330 852 2383 1311 2383"/><path d="M394 2494C852 2494 852 1983 1311 1983"/><path d="M394 1910C852 1910 852 2340 1311 2340"/><path d="M394 1515C852 1515 852 2113 1311 2113"/><path d="M394 1756C852 1756 852 1774 1311 1774"/><path d="M394 2253C852 2253 852 1596 1311 1596"/><path d="M394 1534C852 1534 852 2492 1311 2492"/><path d="M394 1811C852 1811 852 2160 1311 2160"/><path d="M394 1612C852 1612 852 1796 1311 1796"/><path d="M394 2000C852 2000 852 2493 1311 2493"/><path d="M394 1911C852 1911 852 1858 1311 1858"/><path d="M394 2151C852 2151 852 2206 1311 2206"/><path d="M394 1812C852 1812 852 1714 1311 1714"/><path d="M394 1865C852 1865 852 2529 1311 2529"/><path d="M394 1827C852 1827 852 1917 1311 1917"/><path d="M394 2123C852 2123 852 1840 1311 1840"/><path d="M394 2190C852 2190 852 1836 1311 1836"/><path d="M394 2347C852 2347 852 1565 1311 1565"/><path d="M394 2175C852 2175 852 1583 1311 1583"/><path d="M394 1968C852 1968 852 2405 1311 2405"/><path d="M394 2083C852 2083 852 1584 1311 1584"/><path d="M394 1846C852 1846 852 1580 1311 1580"/><path d="M394 2305C852 2305 852 1819 1311 1819"/><path d="M394 2032C852 2032 852 1825 1311 1825"/><path d="M394 2119C852 2119 852 2227 1311 2227"/><path d="M394 2087C852 2087 852 1581 1311 1581"/><path d="M394 1577C852 1577 852 1991 1311 1991"/><path d="M394 2215C852 2215 852 1663 1311 1663"/><path d="M394 1908C852 1908 852 2217 1311 2217"/><path d="M394 1585C852 1585 852 2017 1311 2017"/><path d="M394 1750C852 1750 852 1585 1311 1585"/><path d="M394 2481C852 2481 852 2353 1311 2353"/><path d="M394 1614C852 1614 852 1550 1311 1550"/><path d="M394 2078C852 2078 852 2482 1311 2482"/><path d="M394 2018C852 2018 852 2019 1311 2019"/><path d="M394 2067C852 2067 852 1845 1311 1845"/><path d="M394 2448C852 2448 852 1950 1311 1950"/><path d="M394 2390C852 2390 852 1737 1311 1737"/><path d="M394 1972C852 1972 852 1733 1311 1733"/><path d="M394 2069C852 2069 852 1804 1311 1804"/><path d="M394 2382C852 2382 852 2067 1311 2067"/><path d="M394 1675C852 1675 852 1483 1311 1483"/><path d="M394 1660C852 1660 852 2026 1311 2026"/><path d="M394 2386C852 2386 852 1842 1311 1842"/><path d="M394 2353C852 2353 852 1541 1311 1541"/><path d="M394 2450C852 2450 852 2412 1311 2412"/><path d="M394 1976C852 1976 852 2322 1311 2322"/><path d="M394 1950C852 1950 852 2327 1311 2327"/><path d="M394 1643C852 1643 852 2465 1311 2465"/><path d="M394 1819C852 1819 852 2170 1311 2170"/><path d="M394 1988C852 1988 852 2056 1311 2056"/><path d="M394 1749C852 1749 852 1571 1311 1571"/><path d="M394 1674C852 1674 852 1478 1311 1478"/><path d="M394 2028C852 2028 852 1951 1311 1951"/><path d="M394 1989C852 1989 852 1669 1311 1669"/><path d="M394 2188C852 2188 852 2079 1311 2079"/><path d="M394 1976C852 1976 852 2001 1311 2001"/><path d="M394 1886C852 1886 852 1693 1311 1693"/><path d="M394 2172C852 2172 852 2372 1311 2372"/><path d="M394 1596C852 1596 852 1523 1311 1523"/><path d="M394 1734C852 1734 852 2080 1311 2080"/><path d="M394 1881C852 1881 852 1614 1311 1614"/><path d="M394 1625C852 1625 852 2360 1311 2360"/><path d="M394 1765C852 1765 852 2324 1311 2324"/><path d="M394 2436C852 2436 852 2047 1311 2047"/><path d="M394 1803C852 1803 852 1765 1311 1765"/><path d="M394 1736C852 1736 852 2115 1311 2115"/><path d="M394 1615C852 1615 852 1624 1311 1624"/><path d="M394 1550C852 1550 852 1511 1311 1511"/><path d="M394 1805C852 1805 852 2006 1311 2006"/><path d="M394 1825C852 1825 852 2130 1311 2130"/><path d="M394 2508C852 2508 852 2153 1311 2153"/><path d="M394 2336C852 2336 852 2187 1311 2187"/><path d="M394 1743C852 1743 852 2032 1311 2032"/><path d="M394 2500C852 2500 852 1643 1311 1643"/><path d="M394 1653C852 1653 852 2381 1311 2381"/><path d="M394 1953C852 1953 852 1578 1311 1578"/><path d="M394 1909C852 1909 852 1613 1311 1613"/><path d="M394 2191C852 2191 852 2416 1311 2416"/><path d="M394 2150C852 2150 852 1603 1311 1603"/><path d="M394 1946C852 1946 852 1850 1311 1850"/><path d="M394 2420C852 2420 852 1550 1311 1550"/><path d="M394 2406C852 2406 852 2164 1311 2164"/><path d="M394 1955C852 1955 852 1937 1311 1937"/><path d="M394 1942C852 1942 852 2542 1311 2542"/><path d="M394 2255C852 2255 852 1569 1311 1569"/><path d="M394 2097C852 2097 852 2434 1311 2434"/><path d="M394 2104C852 2104 852 1958 1311 1958"/><path d="M394 1747C852 1747 852 1817 1311 1817"/><path d="M394 2263C852 2263 852 1518 1311 1518"/><path d="M394 1630C852 1630 852 1827 1311 1827"/><path d="M394 1719C852 1719 852 1525 1311 1525"/><path d="M394 1827C852 1827 852 2403 1311 2403"/><path d="M394 2150C852 2150 852 1778 1311 1778"/><path d="M394 2535C852 2535 852 1765 1311 1765"/><path d="M394 1673C852 1673 852 2354 1311 2354"/><path d="M394 2157C852 2157 852 1877 1311 1877"/><path d="M394 1510C852 1510 852 2064 1311 2064"/><path d="M394 2155C852 2155 852 2173 1311 2173"/><path d="M394 2453C852 2453 852 2539 1311 2539"/><path d="M394 1804C852 1804 852 2294 1311 2294"/><path d="M394 1571C852 1571 852 2471 1311 2471"/><path d="M394 2360C852 2360 852 1524 1311 1524"/><path d="M394 1618C852 1618 852 2209 1311 2209"/><path d="M394 2479C852 2479 852 1841 1311 1841"/><path d="M394 1891C852 1891 852 2341 1311 2341"/><path d="M394 2063C852 2063 852 1505 1311 1505"/><path d="M394 2129C852 2129 852 1495 1311 1495"/><path d="M394 1750C852 1750 852 2462 1311 2462"/><path d="M394 2104C852 2104 852 1619 1311 1619"/><path d="M394 1867C852 1867 852 2442 1311 2442"/><path d="M394 2419C852 2419 852 2019 1311 2019"/><path d="M394 1814C852 1814 852 1611 1311 1611"/><path d="M394 1673C852 1673 852 1577 1311 1577"/><path d="M394 2418C852 2418 852 1705 1311 1705"/><path d="M394 1632C852 1632 852 2210 1311 2210"/><path d="M394 2365C852 2365 852 2418 1311 2418"/><path d="M394 2536C852 2536 852 2246 1311 2246"/><path d="M394 2461C852 2461 852 2518 1311 2518"/><path d="M394 1902C852 1902 852 2294 1311 2294"/><path d="M394 2310C852 2310 852 2448 1311 2448"/><path d="M394 2407C852 2407 852 1685 1311 1685"/><path d="M394 2022C852 2022 852 1648 1311 1648"/><path d="M394 1572C852 1572 852 1832 1311 1832"/><path d="M394 1857C852 1857 852 2223 1311 2223"/><path d="M394 2181C852 2181 852 2173 1311 2173"/><path d="M394 1849C852 1849 852 1613 1311 1613"/><path d="M394 2466C852 2466 852 2324 1311 2324"/><path d="M394 1480C852 1480 852 1710 1311 1710"/><path d="M394 2550C852 2550 852 2337 1311 2337"/><path d="M394 1950C852 1950 852 1677 1311 1677"/><path d="M394 2063C852 2063 852 1615 1311 1615"/><path d="M394 1738C852 1738 852 1592 1311 1592"/><path d="M394 2204C852 2204 852 1921 1311 1921"/><path d="M394 1933C852 1933 852 1678 1311 1678"/><path d="M394 1695C852 1695 852 2398 1311 2398"/><path d="M394 1665C852 1665 852 2550 1311 2550"/><path d="M394 2540C852 2540 852 1543 1311 1543"/><path d="M394 1486C852 1486 852 1695 1311 1695"/><path d="M394 1722C852 1722 852 2084 1311 2084"/><path d="M394 1960C852 1960 852 2512 1311 2512"/><path d="M394 2176C852 2176 852 1564 1311 1564"/><path d="M394 2240C852 2240 852 2004 1311 2004"/><path d="M394 2010C852 2010 852 2488 1311 2488"/><path d="M394 1554C852 1554 852 1662 1311 1662"/><path d="M394 2315C852 2315 852 1822 1311 1822"/><path d="M394 2445C852 2445 852 1809 1311 1809"/><path d="M394 1717C852 1717 852 1769 1311 1769"/><path d="M394 1982C852 1982 852 2408 1311 2408"/><path d="M394 1861C852 1861 852 2352 1311 2352"/><path d="M394 1755C852 1755 852 1640 1311 1640"/><path d="M394 2028C852 2028 852 2104 1311 2104"/><path d="M394 1815C852 1815 852 1826 1311 1826"/><path d="M394 1583C852 1583 852 2101 1311 2101"/><path d="M394 1788C852 1788 852 2264 1311 2264"/><path d="M394 1758C852 1758 852 2051 1311 2051"/><path d="M394 1725C852 1725 852 1574 1311 1574"/><path d="M394 2165C852 2165 852 2093 1311 2093"/><path d="M394 2073C852 2073 852 2464 1311 2464"/><path d="M394 1977C852 1977 852 2484 1311 2484"/><path d="M394 2144C852 2144 852 1525 1311 1525"/><path d="M394 1767C852 1767 852 2509 1311 2509"/><path d="M394 1835C852 1835 852 1638 1311 1638"/><path d="M394 2061C852 2061 852 2483 1311 2483"/><path d="M394 1972C852 1972 852 1774 1311 1774"/><path d="M394 1885C852 1885 852 2297 1311 2297"/><path d="M394 1558C852 1558 852 2017 1311 2017"/><path d="M394 1552C852 1552 852 1704 1311 1704"/><path d="M394 1776C852 1776 852 2042 1311 2042"/><path d="M394 2022C852 2022 852 2336 1311 2336"/><path d="M394 1931C852 1931 852 2289 1311 2289"/><path d="M394 1673C852 1673 852 2486 1311 2486"/><path d="M394 1780C852 1780 852 2197 1311 2197"/><path d="M394 2140C852 2140 852 2524 1311 2524"/><path d="M394 2131C852 2131 852 2183 1311 2183"/><path d="M394 2273C852 2273 852 2390 1311 2390"/><path d="M394 2139C852 2139 852 2143 1311 2143"/><path d="M394 1566C852 1566 852 2239 1311 2239"/><path d="M394 1599C852 1599 852 2080 1311 2080"/><path d="M394 1995C852 1995 852 1567 1311 1567"/><path d="M394 2048C852 2048 852 1495 1311 1495"/><path d="M394 2380C852 2380 852 2339 1311 2339"/><path d="M394 2478C852 2478 852 1791 1311 1791"/><path d="M394 2023C852 2023 852 2058 1311 2058"/><path d="M394 2123C852 2123 852 1867 1311 1867"/><path d="M394 2030C852 2030 852 2258 1311 2258"/><path d="M394 1924C852 1924 852 2368 1311 2368"/><path d="M394 2420C852 2420 852 1945 1311 1945"/><path d="M394 1867C852 1867 852 2189 1311 2189"/><path d="M394 1807C852 1807 852 2450 1311 2450"/><path d="M394 2121C852 2121 852 2342 1311 2342"/><path d="M394 1926C852 1926 852 1782 1311 1782"/><path d="M394 2142C852 2142 852 1881 1311 1881"/><path d="M394 2002C852 2002 852 1651 1311 1651"/><path d="M394 1957C852 1957 852 1661 1311 1661"/><path d="M394 1486C852 1486 852 1955 1311 1955"/><path d="M394 2478C852 2478 852 1877 1311 1877"/><path d="M394 1493C852 1493 852 1526 1311 1526"/><path d="M394 2543C852 2543 852 2141 1311 2141"/><path d="M394 2504C852 2504 852 1811 1311 1811"/><path d="M394 1711C852 1711 852 2343 1311 2343"/><path d="M394 2389C852 2389 852 2224 1311 2224"/><path d="M394 1867C852 1867 852 2295 1311 2295"/><path d="M394 2460C852 2460 852 2193 1311 2193"/><path d="M394 1620C852 1620 852 2179 1311 2179"/><path d="M394 1649C852 1649 852 1629 1311 1629"/><path d="M394 2269C852 2269 852 2520 1311 2520"/><path d="M394 2257C852 2257 852 1520 1311 1520"/><path d="M394 2276C852 2276 852 1970 1311 1970"/><path d="M394 2513C852 2513 852 1680 1311 1680"/><path d="M394 1923C852 1923 852 1838 1311 1838"/><path d="M394 2280C852 2280 852 2429 1311 2429"/><path d="M394 2184C852 2184 852 1478 1311 1478"/><path d="M394 1913C852 1913 852 1577 1311 1577"/><path d="M394 2445C852 2445 852 2495 1311 2495"/><path d="M394 1778C852 1778 852 1664 1311 1664"/><path d="M394 1576C852 1576 852 2474 1311 2474"/><path d="M394 1492C852 1492 852 2006 1311 2006"/><path d="M394 2528C852 2528 852 1804 1311 1804"/><path d="M394 2495C852 2495 852 1483 1311 1483"/><path d="M394 2282C852 2282 852 2355 1311 2355"/><path d="M394 1862C852 1862 852 2314 1311 2314"/><path d="M394 2253C852 2253 852 2503 1311 2503"/><path d="M394 1578C852 1578 852 2430 1311 2430"/><path d="M394 2305C852 2305 852 2286 1311 2286"/><path d="M394 1484C852 1484 852 2364 1311 2364"/><path d="M394 1898C852 1898 852 2144 1311 2144"/><path d="M394 2111C852 2111 852 1647 1311 1647"/><path d="M394 2206C852 2206 852 1499 1311 1499"/><path d="M394 1811C852 1811 852 1622 1311 1622"/><path d="M394 2517C852 2517 852 2528 1311 2528"/><path d="M394 2229C852 2229 852 2484 1311 2484"/><path d="M394 1717C852 1717 852 2347 1311 2347"/><path d="M394 1982C852 1982 852 2396 1311 2396"/><path d="M394 2341C852 2341 852 2009 1311 2009"/><path d="M394 1881C852 1881 852 2202 1311 2202"/><path d="M394 1708C852 1708 852 1866 1311 1866"/><path d="M394 2250C852 2250 852 2287 1311 2287"/><path d="M394 2324C852 2324 852 2342 1311 2342"/><path d="M394 2434C852 2434 852 1893 1311 1893"/><path d="M394 1872C852 1872 852 1845 1311 1845"/><path d="M394 1623C852 1623 852 2347 1311 2347"/><path d="M394 2393C852 2393 852 2168 1311 2168"/><path d="M394 1560C852 1560 852 2227 1311 2227"/><path d="M394 2214C852 2214 852 2067 1311 2067"/><path d="M394 2325C852 2325 852 2384 1311 2384"/><path d="M394 2220C852 2220 852 1650 1311 1650"/><path d="M394 2027C852 2027 852 2182 1311 2182"/><path d="M394 2417C852 2417 852 2328 1311 2328"/><path d="M394 2386C852 2386 852 1802 1311 1802"/><path d="M394 2014C852 2014 852 2437 1311 2437"/><path d="M394 2504C852 2504 852 2285 1311 2285"/><path d="M394 2441C852 2441 852 2390 1311 2390"/><path d="M394 1781C852 1781 852 1592 1311 1592"/><path d="M394 2074C852 2074 852 1603 1311 1603"/><path d="M394 2380C852 2380 852 1816 1311 1816"/><path d="M394 2405C852 2405 852 1500 1311 1500"/><path d="M394 2468C852 2468 852 1512 1311 1512"/><path d="M394 1649C852 1649 852 1492 1311 1492"/><path d="M394 2381C852 2381 852 2281 1311 2281"/><path d="M394 1871C852 1871 852 1657 1311 1657"/><path d="M394 2297C852 2297 852 2035 1311 2035"/><path d="M394 2139C852 2139 852 1677 1311 1677"/><path d="M394 1932C852 1932 852 2435 1311 2435"/><path d="M394 2231C852 2231 852 2002 1311 2002"/><path d="M394 1492C852 1492 852 1557 1311 1557"/><path d="M394 1505C852 1505 852 2220 1311 2220"/><path d="M394 2415C852 2415 852 1936 1311 1936"/><path d="M394 2289C852 2289 852 2245 1311 2245"/><path d="M394 2318C852 2318 852 1876 1311 1876"/><path d="M394 1832C852 1832 852 1759 1311 1759"/><path d="M394 1619C852 1619 852 1674 1311 1674"/><path d="M394 2090C852 2090 852 2144 1311 2144"/><path d="M394 1637C852 1637 852 1848 1311 1848"/><path d="M394 2515C852 2515 852 1906 1311 1906"/><path d="M394 2184C852 2184 852 1853 1311 1853"/><path d="M394 1734C852 1734 852 1804 1311 1804"/><path d="M394 2365C852 2365 852 2267 1311 2267"/><path d="M394 1930C852 1930 852 2042 1311 2042"/><path d="M394 2243C852 2243 852 2458 1311 2458"/><path d="M394 1753C852 1753 852 2249 1311 2249"/><path d="M394 2101C852 2101 852 1769 1311 1769"/><path d="M394 2280C852 2280 852 2388 1311 2388"/><path d="M394 2296C852 2296 852 1492 1311 1492"/><path d="M394 1862C852 1862 852 2355 1311 2355"/><path d="M394 1848C852 1848 852 2206 1311 2206"/><path d="M394 2184C852 2184 852 1939 1311 1939"/><path d="M394 2025C852 2025 852 1655 1311 1655"/><path d="M394 1850C852 1850 852 2157 1311 2157"/><path d="M394 2341C852 2341 852 1501 1311 1501"/><path d="M394 1858C852 1858 852 2130 1311 2130"/><path d="M394 1529C852 1529 852 1824 1311 1824"/><path d="M394 2172C852 2172 852 2165 1311 2165"/><path d="M394 2051C852 2051 852 1856 1311 1856"/><path d="M394 1975C852 1975 852 2376 1311 2376"/><path d="M394 1763C852 1763 852 2317 1311 2317"/><path d="M394 1967C852 1967 852 2465 1311 2465"/><path d="M394 1947C852 1947 852 1645 1311 1645"/><path d="M394 2211C852 2211 852 1759 1311 1759"/><path d="M394 1735C852 1735 852 2473 1311 2473"/><path d="M394 1724C852 1724 852 2350 1311 2350"/><path d="M394 2052C852 2052 852 2264 1311 2264"/><path d="M394 1944C852 1944 852 2304 1311 2304"/><path d="M394 1648C852 1648 852 2017 1311 2017"/><path d="M394 1912C852 1912 852 1908 1311 1908"/><path d="M394 1826C852 1826 852 2299 1311 2299"/><path d="M394 1685C852 1685 852 1721 1311 1721"/><path d="M394 2337C852 2337 852 2295 1311 2295"/><path d="M394 1742C852 1742 852 2385 1311 2385"/><path d="M394 2232C852 2232 852 2371 1311 2371"/><path d="M394 2467C852 2467 852 1629 1311 1629"/><path d="M394 2260C852 2260 852 1590 1311 1590"/><path d="M394 1973C852 1973 852 2174 1311 2174"/><path d="M394 2100C852 2100 852 2126 1311 2126"/><path d="M394 2367C852 2367 852 2069 1311 2069"/><path d="M394 2307C852 2307 852 1718 1311 1718"/><path d="M394 1864C852 1864 852 2461 1311 2461"/><path d="M394 1572C852 1572 852 1718 1311 1718"/><path d="M394 1539C852 1539 852 2124 1311 2124"/><path d="M394 2094C852 2094 852 2464 1311 2464"/><path d="M394 2057C852 2057 852 2121 1311 2121"/><path d="M394 2235C852 2235 852 2503 1311 2503"/><path d="M394 2077C852 2077 852 1506 1311 1506"/><path d="M394 1828C852 1828 852 1494 1311 1494"/><path d="M394 2352C852 2352 852 2479 1311 2479"/><path d="M394 1873C852 1873 852 2062 1311 2062"/><path d="M394 1683C852 1683 852 1554 1311 1554"/><path d="M394 2050C852 2050 852 2309 1311 2309"/><path d="M394 2043C852 2043 852 2068 1311 2068"/><path d="M394 2311C852 2311 852 1627 1311 1627"/><path d="M394 2209C852 2209 852 2318 1311 2318"/><path d="M394 1846C852 1846 852 2302 1311 2302"/><path d="M394 1796C852 1796 852 2171 1311 2171"/><path d="M394 1571C852 1571 852 1786 1311 1786"/><path d="M394 2338C852 2338 852 2496 1311 2496"/><path d="M394 2398C852 2398 852 1692 1311 1692"/><path d="M394 2162C852 2162 852 2384 1311 2384"/><path d="M394 1812C852 1812 852 1654 1311 1654"/><path d="M394 2315C852 2315 852 1688 1311 1688"/><path d="M394 2438C852 2438 852 2024 1311 2024"/><path d="M394 2274C852 2274 852 2194 1311 2194"/><path d="M394 1716C852 1716 852 1519 1311 1519"/><path d="M394 1832C852 1832 852 1737 1311 1737"/><path d="M394 2536C852 2536 852 2225 1311 2225"/><path d="M394 2215C852 2215 852 2020 1311 2020"/><path d="M394 2491C852 2491 852 2281 1311 2281"/><path d="M394 2063C852 2063 852 2315 1311 2315"/><path d="M394 1574C852 1574 852 1608 1311 1608"/><path d="M394 1642C852 1642 852 1681 1311 1681"/><path d="M394 1590C852 1590 852 1892 1311 1892"/><path d="M394 1720C852 1720 852 1642 1311 1642"/><path d="M394 1714C852 1714 852 2026 1311 2026"/><path d="M394 1974C852 1974 852 2134 1311 2134"/><path d="M394 2082C852 2082 852 1603 1311 1603"/><path d="M394 2057C852 2057 852 1865 1311 1865"/><path d="M394 1844C852 1844 852 1521 1311 1521"/><path d="M394 2336C852 2336 852 1572 1311 1572"/><path d="M394 2011C852 2011 852 1811 1311 1811"/><path d="M394 2453C852 2453 852 1566 1311 1566"/><path d="M394 2209C852 2209 852 1615 1311 1615"/><path d="M394 2415C852 2415 852 1546 1311 1546"/><path d="M394 1534C852 1534 852 2251 1311 2251"/><path d="M394 1742C852 1742 852 1725 1311 1725"/><path d="M394 2249C852 2249 852 1740 1311 1740"/><path d="M394 1580C852 1580 852 1748 1311 1748"/><path d="M394 2031C852 2031 852 1674 1311 1674"/><path d="M394 2058C852 2058 852 2519 1311 2519"/><path d="M394 2426C852 2426 852 1839 1311 1839"/><path d="M394 2143C852 2143 852 1868 1311 1868"/><path d="M394 1833C852 1833 852 1711 1311 1711"/><path d="M394 1712C852 1712 852 1482 1311 1482"/><path d="M394 1712C852 1712 852 1654 1311 1654"/><path d="M394 1572C852 1572 852 2190 1311 2190"/><path d="M394 2010C852 2010 852 1774 1311 1774"/><path d="M394 2170C852 2170 852 1953 1311 1953"/><path d="M394 1747C852 1747 852 2432 1311 2432"/><path d="M394 1861C852 1861 852 2109 1311 2109"/><path d="M394 2075C852 2075 852 1602 1311 1602"/><path d="M394 1676C852 1676 852 2437 1311 2437"/><path d="M394 2202C852 2202 852 1836 1311 1836"/><path d="M394 2443C852 2443 852 1489 1311 1489"/><path d="M394 1720C852 1720 852 2435 1311 2435"/><path d="M394 1933C852 1933 852 2365 1311 2365"/><path d="M394 2240C852 2240 852 2533 1311 2533"/><path d="M394 2031C852 2031 852 1907 1311 1907"/><path d="M394 1883C852 1883 852 2531 1311 2531"/><path d="M394 1947C852 1947 852 2329 1311 2329"/><path d="M394 2374C852 2374 852 2432 1311 2432"/><path d="M394 1536C852 1536 852 1995 1311 1995"/><path d="M394 1702C852 1702 852 1720 1311 1720"/><path d="M394 1736C852 1736 852 1764 1311 1764"/><path d="M394 1673C852 1673 852 2039 1311 2039"/><path d="M394 1656C852 1656 852 1576 1311 1576"/><path d="M394 2487C852 2487 852 1856 1311 1856"/><path d="M394 1951C852 1951 852 1677 1311 1677"/><path d="M394 1802C852 1802 852 2250 1311 2250"/><path d="M394 2147C852 2147 852 2238 1311 2238"/><path d="M394 1713C852 1713 852 1884 1311 1884"/></g><g stroke="#d2a6a2" stroke-opacity="0.072" stroke-width="1.2" fill="none"><path d="M394 1871C852 1871 852 1540 1311 1540"/><path d="M394 1928C852 1928 852 2059 1311 2059"/><path d="M394 1815C852 1815 852 2225 1311 2225"/><path d="M394 1781C852 1781 852 1634 1311 1634"/><path d="M394 2220C852 2220 852 2032 1311 2032"/><path d="M394 1951C852 1951 852 1596 1311 1596"/><path d="M394 2054C852 2054 852 2497 1311 2497"/><path d="M394 1505C852 1505 852 2417 1311 2417"/><path d="M394 1992C852 1992 852 2221 1311 2221"/><path d="M394 1503C852 1503 852 2499 1311 2499"/><path d="M394 2018C852 2018 852 2162 1311 2162"/><path d="M394 2273C852 2273 852 1722 1311 1722"/><path d="M394 1697C852 1697 852 2148 1311 2148"/><path d="M394 1793C852 1793 852 1736 1311 1736"/><path d="M394 2449C852 2449 852 1930 1311 1930"/><path d="M394 1618C852 1618 852 1641 1311 1641"/><path d="M394 1828C852 1828 852 2523 1311 2523"/><path d="M394 2024C852 2024 852 2345 1311 2345"/><path d="M394 1914C852 1914 852 2054 1311 2054"/><path d="M394 1518C852 1518 852 1498 1311 1498"/><path d="M394 2064C852 2064 852 2432 1311 2432"/><path d="M394 2511C852 2511 852 2523 1311 2523"/><path d="M394 1888C852 1888 852 1988 1311 1988"/><path d="M394 1525C852 1525 852 2375 1311 2375"/><path d="M394 2335C852 2335 852 2282 1311 2282"/><path d="M394 2442C852 2442 852 1577 1311 1577"/><path d="M394 1978C852 1978 852 2302 1311 2302"/><path d="M394 2350C852 2350 852 2156 1311 2156"/><path d="M394 2481C852 2481 852 1919 1311 1919"/><path d="M394 2000C852 2000 852 2457 1311 2457"/><path d="M394 2440C852 2440 852 1986 1311 1986"/><path d="M394 1895C852 1895 852 1718 1311 1718"/><path d="M394 2334C852 2334 852 2272 1311 2272"/><path d="M394 1595C852 1595 852 2148 1311 2148"/><path d="M394 2456C852 2456 852 1539 1311 1539"/><path d="M394 1832C852 1832 852 1677 1311 1677"/><path d="M394 1754C852 1754 852 2281 1311 2281"/><path d="M394 1842C852 1842 852 1770 1311 1770"/><path d="M394 2362C852 2362 852 2308 1311 2308"/><path d="M394 2029C852 2029 852 1669 1311 1669"/><path d="M394 1592C852 1592 852 2118 1311 2118"/><path d="M394 2455C852 2455 852 1574 1311 1574"/><path d="M394 1635C852 1635 852 1782 1311 1782"/><path d="M394 1689C852 1689 852 1986 1311 1986"/><path d="M394 1712C852 1712 852 1907 1311 1907"/><path d="M394 1604C852 1604 852 2122 1311 2122"/><path d="M394 1896C852 1896 852 1873 1311 1873"/><path d="M394 1949C852 1949 852 1503 1311 1503"/><path d="M394 1870C852 1870 852 2340 1311 2340"/><path d="M394 1749C852 1749 852 1826 1311 1826"/><path d="M394 1702C852 1702 852 1760 1311 1760"/><path d="M394 2516C852 2516 852 1965 1311 1965"/><path d="M394 2165C852 2165 852 2535 1311 2535"/><path d="M394 1804C852 1804 852 2040 1311 2040"/><path d="M394 1719C852 1719 852 2105 1311 2105"/><path d="M394 2099C852 2099 852 2124 1311 2124"/><path d="M394 2242C852 2242 852 1764 1311 1764"/><path d="M394 2207C852 2207 852 2214 1311 2214"/><path d="M394 1684C852 1684 852 1895 1311 1895"/><path d="M394 1948C852 1948 852 2256 1311 2256"/><path d="M394 2114C852 2114 852 2506 1311 2506"/><path d="M394 1804C852 1804 852 1938 1311 1938"/><path d="M394 1729C852 1729 852 1973 1311 1973"/><path d="M394 2116C852 2116 852 2218 1311 2218"/><path d="M394 2168C852 2168 852 2226 1311 2226"/><path d="M394 2036C852 2036 852 1587 1311 1587"/><path d="M394 2153C852 2153 852 2203 1311 2203"/><path d="M394 1793C852 1793 852 2131 1311 2131"/><path d="M394 1575C852 1575 852 2446 1311 2446"/><path d="M394 2366C852 2366 852 1986 1311 1986"/><path d="M394 1845C852 1845 852 2314 1311 2314"/><path d="M394 2548C852 2548 852 1906 1311 1906"/><path d="M394 1682C852 1682 852 2468 1311 2468"/><path d="M394 2301C852 2301 852 1543 1311 1543"/><path d="M394 2455C852 2455 852 2135 1311 2135"/><path d="M394 1606C852 1606 852 2348 1311 2348"/><path d="M394 1493C852 1493 852 1894 1311 1894"/><path d="M394 1985C852 1985 852 1774 1311 1774"/><path d="M394 2294C852 2294 852 1793 1311 1793"/><path d="M394 2507C852 2507 852 2375 1311 2375"/><path d="M394 1542C852 1542 852 1873 1311 1873"/><path d="M394 2367C852 2367 852 1835 1311 1835"/><path d="M394 1851C852 1851 852 1569 1311 1569"/><path d="M394 2038C852 2038 852 1990 1311 1990"/><path d="M394 2408C852 2408 852 2000 1311 2000"/><path d="M394 2455C852 2455 852 1547 1311 1547"/><path d="M394 2508C852 2508 852 1754 1311 1754"/><path d="M394 2489C852 2489 852 1542 1311 1542"/><path d="M394 1489C852 1489 852 2221 1311 2221"/><path d="M394 1517C852 1517 852 2232 1311 2232"/><path d="M394 2117C852 2117 852 1483 1311 1483"/><path d="M394 2503C852 2503 852 2009 1311 2009"/><path d="M394 1688C852 1688 852 1497 1311 1497"/><path d="M394 1610C852 1610 852 2008 1311 2008"/><path d="M394 1914C852 1914 852 1625 1311 1625"/><path d="M394 2060C852 2060 852 2471 1311 2471"/><path d="M394 1607C852 1607 852 2116 1311 2116"/><path d="M394 2446C852 2446 852 1569 1311 1569"/><path d="M394 2028C852 2028 852 1890 1311 1890"/><path d="M394 2404C852 2404 852 1734 1311 1734"/><path d="M394 1589C852 1589 852 1919 1311 1919"/><path d="M394 2107C852 2107 852 2013 1311 2013"/><path d="M394 2056C852 2056 852 2550 1311 2550"/><path d="M394 1896C852 1896 852 1862 1311 1862"/><path d="M394 2302C852 2302 852 2444 1311 2444"/><path d="M394 2529C852 2529 852 2365 1311 2365"/><path d="M394 2219C852 2219 852 2359 1311 2359"/><path d="M394 1634C852 1634 852 2035 1311 2035"/><path d="M394 2176C852 2176 852 2213 1311 2213"/><path d="M394 1585C852 1585 852 2449 1311 2449"/><path d="M394 1546C852 1546 852 1684 1311 1684"/><path d="M394 2354C852 2354 852 1804 1311 1804"/><path d="M394 2063C852 2063 852 2324 1311 2324"/><path d="M394 2254C852 2254 852 1883 1311 1883"/><path d="M394 1701C852 1701 852 2499 1311 2499"/><path d="M394 2052C852 2052 852 1912 1311 1912"/><path d="M394 2206C852 2206 852 1913 1311 1913"/><path d="M394 1646C852 1646 852 2271 1311 2271"/><path d="M394 2379C852 2379 852 2150 1311 2150"/><path d="M394 2501C852 2501 852 2364 1311 2364"/><path d="M394 1621C852 1621 852 2238 1311 2238"/><path d="M394 1873C852 1873 852 2511 1311 2511"/><path d="M394 2134C852 2134 852 2373 1311 2373"/><path d="M394 1796C852 1796 852 1954 1311 1954"/><path d="M394 2407C852 2407 852 2524 1311 2524"/><path d="M394 2187C852 2187 852 1878 1311 1878"/><path d="M394 1722C852 1722 852 1970 1311 1970"/><path d="M394 2093C852 2093 852 1599 1311 1599"/><path d="M394 1622C852 1622 852 2018 1311 2018"/><path d="M394 2151C852 2151 852 2509 1311 2509"/><path d="M394 1735C852 1735 852 2029 1311 2029"/><path d="M394 2197C852 2197 852 2376 1311 2376"/><path d="M394 2144C852 2144 852 2170 1311 2170"/><path d="M394 1745C852 1745 852 2419 1311 2419"/><path d="M394 2015C852 2015 852 1759 1311 1759"/><path d="M394 2544C852 2544 852 1515 1311 1515"/><path d="M394 2160C852 2160 852 1854 1311 1854"/><path d="M394 1809C852 1809 852 2258 1311 2258"/><path d="M394 1625C852 1625 852 1680 1311 1680"/><path d="M394 2539C852 2539 852 1538 1311 1538"/><path d="M394 2352C852 2352 852 1933 1311 1933"/><path d="M394 2173C852 2173 852 2178 1311 2178"/><path d="M394 2149C852 2149 852 1609 1311 1609"/><path d="M394 2397C852 2397 852 2315 1311 2315"/><path d="M394 2218C852 2218 852 1519 1311 1519"/><path d="M394 1901C852 1901 852 2043 1311 2043"/><path d="M394 1852C852 1852 852 2111 1311 2111"/><path d="M394 2046C852 2046 852 2041 1311 2041"/><path d="M394 1861C852 1861 852 2341 1311 2341"/><path d="M394 1497C852 1497 852 1694 1311 1694"/><path d="M394 1856C852 1856 852 1892 1311 1892"/><path d="M394 2290C852 2290 852 1885 1311 1885"/><path d="M394 2291C852 2291 852 1505 1311 1505"/><path d="M394 1678C852 1678 852 2057 1311 2057"/><path d="M394 1533C852 1533 852 1816 1311 1816"/><path d="M394 2404C852 2404 852 1555 1311 1555"/><path d="M394 1793C852 1793 852 1728 1311 1728"/><path d="M394 2470C852 2470 852 2548 1311 2548"/><path d="M394 2100C852 2100 852 1800 1311 1800"/><path d="M394 1826C852 1826 852 1742 1311 1742"/><path d="M394 2498C852 2498 852 1782 1311 1782"/><path d="M394 2003C852 2003 852 2328 1311 2328"/><path d="M394 2550C852 2550 852 1933 1311 1933"/><path d="M394 1740C852 1740 852 2310 1311 2310"/><path d="M394 2177C852 2177 852 2521 1311 2521"/><path d="M394 2029C852 2029 852 2281 1311 2281"/><path d="M394 1736C852 1736 852 2109 1311 2109"/><path d="M394 1805C852 1805 852 1801 1311 1801"/><path d="M394 1809C852 1809 852 1820 1311 1820"/><path d="M394 2370C852 2370 852 1652 1311 1652"/><path d="M394 2028C852 2028 852 1642 1311 1642"/><path d="M394 1633C852 1633 852 2109 1311 2109"/><path d="M394 2210C852 2210 852 2453 1311 2453"/><path d="M394 2435C852 2435 852 1988 1311 1988"/><path d="M394 1599C852 1599 852 2472 1311 2472"/><path d="M394 1961C852 1961 852 1491 1311 1491"/><path d="M394 1677C852 1677 852 2414 1311 2414"/><path d="M394 2393C852 2393 852 2195 1311 2195"/><path d="M394 2199C852 2199 852 2288 1311 2288"/><path d="M394 2234C852 2234 852 2234 1311 2234"/><path d="M394 1562C852 1562 852 1503 1311 1503"/><path d="M394 2528C852 2528 852 2112 1311 2112"/><path d="M394 2048C852 2048 852 1725 1311 1725"/><path d="M394 2519C852 2519 852 2424 1311 2424"/><path d="M394 1687C852 1687 852 2268 1311 2268"/><path d="M394 2281C852 2281 852 2056 1311 2056"/><path d="M394 2527C852 2527 852 2391 1311 2391"/><path d="M394 2241C852 2241 852 2493 1311 2493"/><path d="M394 2400C852 2400 852 1841 1311 1841"/><path d="M394 2311C852 2311 852 1525 1311 1525"/><path d="M394 1582C852 1582 852 1632 1311 1632"/><path d="M394 2018C852 2018 852 2144 1311 2144"/><path d="M394 1969C852 1969 852 2198 1311 2198"/><path d="M394 2199C852 2199 852 2534 1311 2534"/><path d="M394 2297C852 2297 852 1637 1311 1637"/><path d="M394 2056C852 2056 852 1844 1311 1844"/><path d="M394 2434C852 2434 852 2331 1311 2331"/><path d="M394 2408C852 2408 852 2167 1311 2167"/><path d="M394 2514C852 2514 852 2169 1311 2169"/><path d="M394 2254C852 2254 852 2174 1311 2174"/><path d="M394 1998C852 1998 852 1710 1311 1710"/><path d="M394 1684C852 1684 852 2282 1311 2282"/><path d="M394 1728C852 1728 852 1990 1311 1990"/><path d="M394 1644C852 1644 852 2350 1311 2350"/><path d="M394 1893C852 1893 852 1758 1311 1758"/><path d="M394 1740C852 1740 852 2185 1311 2185"/><path d="M394 2208C852 2208 852 1875 1311 1875"/><path d="M394 2169C852 2169 852 1921 1311 1921"/><path d="M394 2103C852 2103 852 2490 1311 2490"/><path d="M394 1697C852 1697 852 1745 1311 1745"/><path d="M394 1691C852 1691 852 1494 1311 1494"/><path d="M394 1638C852 1638 852 1838 1311 1838"/><path d="M394 1630C852 1630 852 2128 1311 2128"/><path d="M394 2339C852 2339 852 1579 1311 1579"/><path d="M394 2165C852 2165 852 2220 1311 2220"/><path d="M394 1868C852 1868 852 2247 1311 2247"/><path d="M394 1550C852 1550 852 2341 1311 2341"/><path d="M394 1621C852 1621 852 2400 1311 2400"/><path d="M394 1616C852 1616 852 1978 1311 1978"/><path d="M394 1817C852 1817 852 2357 1311 2357"/><path d="M394 2340C852 2340 852 1508 1311 1508"/><path d="M394 2360C852 2360 852 2405 1311 2405"/><path d="M394 2498C852 2498 852 1802 1311 1802"/><path d="M394 1919C852 1919 852 2161 1311 2161"/><path d="M394 1811C852 1811 852 2157 1311 2157"/><path d="M394 2094C852 2094 852 1592 1311 1592"/><path d="M394 1722C852 1722 852 1702 1311 1702"/><path d="M394 2405C852 2405 852 2181 1311 2181"/><path d="M394 1675C852 1675 852 1791 1311 1791"/><path d="M394 2445C852 2445 852 2504 1311 2504"/><path d="M394 1733C852 1733 852 1753 1311 1753"/><path d="M394 2449C852 2449 852 1695 1311 1695"/><path d="M394 2376C852 2376 852 1934 1311 1934"/><path d="M394 1972C852 1972 852 2164 1311 2164"/><path d="M394 1993C852 1993 852 1950 1311 1950"/><path d="M394 2035C852 2035 852 1985 1311 1985"/><path d="M394 2038C852 2038 852 1499 1311 1499"/><path d="M394 2416C852 2416 852 2287 1311 2287"/><path d="M394 2270C852 2270 852 1541 1311 1541"/><path d="M394 1950C852 1950 852 2327 1311 2327"/><path d="M394 2504C852 2504 852 2476 1311 2476"/><path d="M394 1882C852 1882 852 2419 1311 2419"/><path d="M394 1699C852 1699 852 2023 1311 2023"/><path d="M394 2550C852 2550 852 1936 1311 1936"/><path d="M394 1546C852 1546 852 1889 1311 1889"/><path d="M394 2179C852 2179 852 1994 1311 1994"/><path d="M394 2197C852 2197 852 1865 1311 1865"/><path d="M394 2519C852 2519 852 1814 1311 1814"/><path d="M394 2338C852 2338 852 1650 1311 1650"/><path d="M394 2030C852 2030 852 2475 1311 2475"/><path d="M394 2149C852 2149 852 1541 1311 1541"/><path d="M394 1521C852 1521 852 1529 1311 1529"/><path d="M394 2275C852 2275 852 2248 1311 2248"/><path d="M394 1858C852 1858 852 2417 1311 2417"/><path d="M394 2086C852 2086 852 1689 1311 1689"/><path d="M394 1879C852 1879 852 2026 1311 2026"/><path d="M394 1513C852 1513 852 2511 1311 2511"/><path d="M394 1608C852 1608 852 2092 1311 2092"/><path d="M394 2170C852 2170 852 2124 1311 2124"/><path d="M394 2121C852 2121 852 1666 1311 1666"/><path d="M394 1600C852 1600 852 1790 1311 1790"/><path d="M394 2389C852 2389 852 2125 1311 2125"/><path d="M394 1601C852 1601 852 2183 1311 2183"/><path d="M394 1909C852 1909 852 1523 1311 1523"/><path d="M394 2025C852 2025 852 1815 1311 1815"/><path d="M394 1801C852 1801 852 1694 1311 1694"/><path d="M394 1565C852 1565 852 2149 1311 2149"/><path d="M394 1668C852 1668 852 2367 1311 2367"/><path d="M394 1549C852 1549 852 1555 1311 1555"/><path d="M394 2126C852 2126 852 2521 1311 2521"/><path d="M394 2427C852 2427 852 1888 1311 1888"/><path d="M394 2180C852 2180 852 1745 1311 1745"/><path d="M394 1626C852 1626 852 2071 1311 2071"/><path d="M394 2259C852 2259 852 1723 1311 1723"/><path d="M394 2501C852 2501 852 2447 1311 2447"/><path d="M394 1924C852 1924 852 1609 1311 1609"/><path d="M394 2461C852 2461 852 1803 1311 1803"/><path d="M394 1573C852 1573 852 1507 1311 1507"/><path d="M394 1598C852 1598 852 1938 1311 1938"/><path d="M394 1968C852 1968 852 1827 1311 1827"/><path d="M394 1724C852 1724 852 1601 1311 1601"/><path d="M394 1880C852 1880 852 1921 1311 1921"/><path d="M394 1676C852 1676 852 2168 1311 2168"/><path d="M394 1910C852 1910 852 2090 1311 2090"/><path d="M394 2514C852 2514 852 2313 1311 2313"/><path d="M394 2212C852 2212 852 1560 1311 1560"/><path d="M394 2434C852 2434 852 1676 1311 1676"/><path d="M394 2240C852 2240 852 2103 1311 2103"/><path d="M394 2113C852 2113 852 2153 1311 2153"/><path d="M394 2348C852 2348 852 2225 1311 2225"/><path d="M394 1635C852 1635 852 1906 1311 1906"/><path d="M394 1683C852 1683 852 2239 1311 2239"/><path d="M394 1772C852 1772 852 1940 1311 1940"/><path d="M394 2145C852 2145 852 1548 1311 1548"/><path d="M394 1796C852 1796 852 2296 1311 2296"/><path d="M394 2475C852 2475 852 2087 1311 2087"/><path d="M394 1991C852 1991 852 2159 1311 2159"/><path d="M394 2279C852 2279 852 2249 1311 2249"/><path d="M394 1788C852 1788 852 1876 1311 1876"/><path d="M394 1886C852 1886 852 2477 1311 2477"/><path d="M394 2487C852 2487 852 1961 1311 1961"/><path d="M394 1756C852 1756 852 1589 1311 1589"/><path d="M394 2231C852 2231 852 2166 1311 2166"/><path d="M394 2187C852 2187 852 1808 1311 1808"/><path d="M394 2473C852 2473 852 1991 1311 1991"/><path d="M394 1662C852 1662 852 2487 1311 2487"/><path d="M394 2013C852 2013 852 1799 1311 1799"/><path d="M394 1577C852 1577 852 1642 1311 1642"/><path d="M394 1702C852 1702 852 2158 1311 2158"/><path d="M394 1702C852 1702 852 2320 1311 2320"/><path d="M394 2299C852 2299 852 2207 1311 2207"/><path d="M394 2173C852 2173 852 1781 1311 1781"/><path d="M394 2464C852 2464 852 2328 1311 2328"/><path d="M394 1972C852 1972 852 2173 1311 2173"/><path d="M394 1583C852 1583 852 2392 1311 2392"/><path d="M394 1767C852 1767 852 1486 1311 1486"/><path d="M394 1902C852 1902 852 1960 1311 1960"/><path d="M394 1607C852 1607 852 1518 1311 1518"/><path d="M394 2436C852 2436 852 2480 1311 2480"/><path d="M394 1662C852 1662 852 1807 1311 1807"/><path d="M394 1759C852 1759 852 1949 1311 1949"/><path d="M394 2550C852 2550 852 2358 1311 2358"/><path d="M394 1536C852 1536 852 2278 1311 2278"/><path d="M394 2045C852 2045 852 2361 1311 2361"/><path d="M394 1826C852 1826 852 1772 1311 1772"/><path d="M394 1569C852 1569 852 1888 1311 1888"/><path d="M394 2030C852 2030 852 1990 1311 1990"/><path d="M394 2499C852 2499 852 1928 1311 1928"/><path d="M394 1892C852 1892 852 2070 1311 2070"/><path d="M394 1824C852 1824 852 1916 1311 1916"/><path d="M394 1843C852 1843 852 1823 1311 1823"/><path d="M394 2212C852 2212 852 1860 1311 1860"/><path d="M394 2348C852 2348 852 2046 1311 2046"/><path d="M394 2463C852 2463 852 1672 1311 1672"/><path d="M394 2315C852 2315 852 1642 1311 1642"/><path d="M394 1727C852 1727 852 1817 1311 1817"/><path d="M394 2213C852 2213 852 1962 1311 1962"/><path d="M394 2236C852 2236 852 2071 1311 2071"/><path d="M394 2367C852 2367 852 1905 1311 1905"/><path d="M394 2454C852 2454 852 2378 1311 2378"/><path d="M394 2479C852 2479 852 2101 1311 2101"/><path d="M394 1941C852 1941 852 1922 1311 1922"/><path d="M394 1909C852 1909 852 1583 1311 1583"/><path d="M394 1825C852 1825 852 2161 1311 2161"/><path d="M394 1769C852 1769 852 2270 1311 2270"/><path d="M394 2053C852 2053 852 1559 1311 1559"/><path d="M394 1747C852 1747 852 2143 1311 2143"/><path d="M394 1876C852 1876 852 1616 1311 1616"/><path d="M394 1787C852 1787 852 1580 1311 1580"/><path d="M394 2356C852 2356 852 2400 1311 2400"/><path d="M394 1981C852 1981 852 1911 1311 1911"/><path d="M394 1504C852 1504 852 2511 1311 2511"/><path d="M394 1827C852 1827 852 1480 1311 1480"/><path d="M394 2088C852 2088 852 1656 1311 1656"/><path d="M394 2011C852 2011 852 2232 1311 2232"/><path d="M394 1894C852 1894 852 1725 1311 1725"/><path d="M394 1612C852 1612 852 2429 1311 2429"/><path d="M394 1541C852 1541 852 1803 1311 1803"/><path d="M394 1722C852 1722 852 1802 1311 1802"/><path d="M394 1998C852 1998 852 1624 1311 1624"/><path d="M394 2483C852 2483 852 1757 1311 1757"/><path d="M394 2286C852 2286 852 1703 1311 1703"/><path d="M394 1572C852 1572 852 1713 1311 1713"/><path d="M394 1579C852 1579 852 2086 1311 2086"/><path d="M394 1736C852 1736 852 2111 1311 2111"/><path d="M394 1903C852 1903 852 1933 1311 1933"/><path d="M394 2515C852 2515 852 1950 1311 1950"/><path d="M394 2036C852 2036 852 1522 1311 1522"/><path d="M394 2169C852 2169 852 1783 1311 1783"/><path d="M394 2458C852 2458 852 2170 1311 2170"/><path d="M394 1560C852 1560 852 1895 1311 1895"/><path d="M394 2359C852 2359 852 1612 1311 1612"/><path d="M394 1840C852 1840 852 1731 1311 1731"/><path d="M394 2441C852 2441 852 2082 1311 2082"/><path d="M394 2137C852 2137 852 2306 1311 2306"/><path d="M394 2102C852 2102 852 1734 1311 1734"/><path d="M394 1945C852 1945 852 2098 1311 2098"/><path d="M394 2164C852 2164 852 1673 1311 1673"/><path d="M394 2244C852 2244 852 1500 1311 1500"/><path d="M394 1571C852 1571 852 1499 1311 1499"/><path d="M394 1963C852 1963 852 2375 1311 2375"/><path d="M394 1591C852 1591 852 2322 1311 2322"/><path d="M394 1822C852 1822 852 2551 1311 2551"/><path d="M394 2393C852 2393 852 2088 1311 2088"/><path d="M394 1765C852 1765 852 2374 1311 2374"/><path d="M394 2074C852 2074 852 2298 1311 2298"/><path d="M394 2214C852 2214 852 2004 1311 2004"/><path d="M394 1862C852 1862 852 2215 1311 2215"/><path d="M394 2520C852 2520 852 1775 1311 1775"/><path d="M394 1896C852 1896 852 1935 1311 1935"/><path d="M394 1680C852 1680 852 2251 1311 2251"/><path d="M394 2317C852 2317 852 1790 1311 1790"/><path d="M394 2066C852 2066 852 2358 1311 2358"/><path d="M394 2552C852 2552 852 1699 1311 1699"/><path d="M394 2069C852 2069 852 2396 1311 2396"/><path d="M394 2037C852 2037 852 1779 1311 1779"/><path d="M394 1682C852 1682 852 1620 1311 1620"/><path d="M394 1780C852 1780 852 1938 1311 1938"/><path d="M394 2419C852 2419 852 1794 1311 1794"/><path d="M394 1702C852 1702 852 2174 1311 2174"/><path d="M394 2178C852 2178 852 1882 1311 1882"/><path d="M394 1711C852 1711 852 1627 1311 1627"/><path d="M394 2488C852 2488 852 1898 1311 1898"/><path d="M394 1518C852 1518 852 2221 1311 2221"/><path d="M394 1525C852 1525 852 2426 1311 2426"/><path d="M394 1884C852 1884 852 2126 1311 2126"/><path d="M394 2268C852 2268 852 1653 1311 1653"/><path d="M394 1654C852 1654 852 2180 1311 2180"/><path d="M394 1525C852 1525 852 1874 1311 1874"/><path d="M394 2364C852 2364 852 2298 1311 2298"/><path d="M394 1615C852 1615 852 1518 1311 1518"/><path d="M394 1878C852 1878 852 2133 1311 2133"/><path d="M394 1982C852 1982 852 1700 1311 1700"/><path d="M394 1810C852 1810 852 2278 1311 2278"/><path d="M394 1673C852 1673 852 2313 1311 2313"/><path d="M394 2277C852 2277 852 1640 1311 1640"/><path d="M394 2536C852 2536 852 1872 1311 1872"/><path d="M394 2470C852 2470 852 2488 1311 2488"/><path d="M394 1495C852 1495 852 2157 1311 2157"/><path d="M394 2268C852 2268 852 1767 1311 1767"/><path d="M394 2156C852 2156 852 1599 1311 1599"/><path d="M394 1789C852 1789 852 2455 1311 2455"/><path d="M394 2518C852 2518 852 2142 1311 2142"/><path d="M394 2227C852 2227 852 2218 1311 2218"/><path d="M394 2163C852 2163 852 1672 1311 1672"/><path d="M394 1920C852 1920 852 1615 1311 1615"/><path d="M394 2396C852 2396 852 2286 1311 2286"/><path d="M394 1968C852 1968 852 2056 1311 2056"/><path d="M394 1711C852 1711 852 2539 1311 2539"/><path d="M394 2297C852 2297 852 2362 1311 2362"/><path d="M394 2229C852 2229 852 2414 1311 2414"/><path d="M394 1839C852 1839 852 2144 1311 2144"/><path d="M394 2358C852 2358 852 1640 1311 1640"/><path d="M394 2024C852 2024 852 2105 1311 2105"/><path d="M394 1584C852 1584 852 2255 1311 2255"/><path d="M394 2262C852 2262 852 1648 1311 1648"/><path d="M394 2336C852 2336 852 2085 1311 2085"/><path d="M394 1635C852 1635 852 2071 1311 2071"/><path d="M394 2356C852 2356 852 2443 1311 2443"/><path d="M394 1928C852 1928 852 2237 1311 2237"/><path d="M394 1679C852 1679 852 2543 1311 2543"/><path d="M394 2313C852 2313 852 1598 1311 1598"/><path d="M394 2237C852 2237 852 1800 1311 1800"/><path d="M394 1740C852 1740 852 1726 1311 1726"/><path d="M394 1585C852 1585 852 1854 1311 1854"/><path d="M394 2521C852 2521 852 1550 1311 1550"/><path d="M394 1491C852 1491 852 1904 1311 1904"/><path d="M394 2216C852 2216 852 1670 1311 1670"/><path d="M394 2147C852 2147 852 1730 1311 1730"/><path d="M394 1867C852 1867 852 2418 1311 2418"/><path d="M394 2296C852 2296 852 2468 1311 2468"/><path d="M394 2226C852 2226 852 1862 1311 1862"/><path d="M394 2317C852 2317 852 1818 1311 1818"/><path d="M394 1749C852 1749 852 1688 1311 1688"/><path d="M394 2189C852 2189 852 2497 1311 2497"/><path d="M394 2001C852 2001 852 2000 1311 2000"/><path d="M394 2289C852 2289 852 1898 1311 1898"/><path d="M394 1575C852 1575 852 2531 1311 2531"/><path d="M394 1501C852 1501 852 2006 1311 2006"/><path d="M394 2018C852 2018 852 2380 1311 2380"/><path d="M394 2401C852 2401 852 2437 1311 2437"/><path d="M394 1514C852 1514 852 2064 1311 2064"/><path d="M394 1547C852 1547 852 2435 1311 2435"/><path d="M394 2142C852 2142 852 1687 1311 1687"/><path d="M394 1483C852 1483 852 2440 1311 2440"/><path d="M394 2541C852 2541 852 2327 1311 2327"/><path d="M394 1487C852 1487 852 2518 1311 2518"/><path d="M394 2364C852 2364 852 1649 1311 1649"/><path d="M394 1750C852 1750 852 2020 1311 2020"/><path d="M394 1575C852 1575 852 1612 1311 1612"/><path d="M394 2273C852 2273 852 2273 1311 2273"/><path d="M394 1624C852 1624 852 1665 1311 1665"/><path d="M394 1817C852 1817 852 1844 1311 1844"/><path d="M394 2497C852 2497 852 1930 1311 1930"/><path d="M394 1559C852 1559 852 2324 1311 2324"/><path d="M394 1939C852 1939 852 2534 1311 2534"/><path d="M394 1580C852 1580 852 1550 1311 1550"/><path d="M394 2167C852 2167 852 1807 1311 1807"/><path d="M394 1778C852 1778 852 2000 1311 2000"/><path d="M394 2436C852 2436 852 2255 1311 2255"/><path d="M394 1786C852 1786 852 2213 1311 2213"/><path d="M394 2501C852 2501 852 2068 1311 2068"/><path d="M394 1535C852 1535 852 1991 1311 1991"/><path d="M394 2038C852 2038 852 2286 1311 2286"/><path d="M394 2210C852 2210 852 1649 1311 1649"/><path d="M394 2489C852 2489 852 2310 1311 2310"/><path d="M394 2391C852 2391 852 1624 1311 1624"/><path d="M394 2414C852 2414 852 2369 1311 2369"/><path d="M394 1580C852 1580 852 2073 1311 2073"/><path d="M394 1816C852 1816 852 1558 1311 1558"/><path d="M394 1826C852 1826 852 2219 1311 2219"/><path d="M394 2425C852 2425 852 2345 1311 2345"/><path d="M394 1587C852 1587 852 2095 1311 2095"/><path d="M394 2397C852 2397 852 1760 1311 1760"/><path d="M394 1898C852 1898 852 1848 1311 1848"/><path d="M394 1659C852 1659 852 2019 1311 2019"/><path d="M394 2223C852 2223 852 2363 1311 2363"/><path d="M394 2044C852 2044 852 1822 1311 1822"/><path d="M394 2526C852 2526 852 1943 1311 1943"/><path d="M394 2333C852 2333 852 1505 1311 1505"/><path d="M394 1536C852 1536 852 1976 1311 1976"/><path d="M394 1657C852 1657 852 2124 1311 2124"/><path d="M394 1789C852 1789 852 2155 1311 2155"/><path d="M394 2523C852 2523 852 2401 1311 2401"/><path d="M394 2473C852 2473 852 1740 1311 1740"/><path d="M394 2249C852 2249 852 1802 1311 1802"/><path d="M394 2195C852 2195 852 2040 1311 2040"/><path d="M394 1931C852 1931 852 2371 1311 2371"/><path d="M394 1888C852 1888 852 2273 1311 2273"/><path d="M394 1493C852 1493 852 2304 1311 2304"/><path d="M394 1680C852 1680 852 1930 1311 1930"/><path d="M394 2245C852 2245 852 1781 1311 1781"/><path d="M394 1627C852 1627 852 2522 1311 2522"/><path d="M394 1708C852 1708 852 2265 1311 2265"/><path d="M394 1944C852 1944 852 2473 1311 2473"/><path d="M394 1721C852 1721 852 1507 1311 1507"/><path d="M394 2468C852 2468 852 1541 1311 1541"/><path d="M394 1741C852 1741 852 1500 1311 1500"/><path d="M394 1929C852 1929 852 1618 1311 1618"/><path d="M394 2463C852 2463 852 1856 1311 1856"/><path d="M394 2182C852 2182 852 2507 1311 2507"/><path d="M394 2244C852 2244 852 2331 1311 2331"/><path d="M394 2220C852 2220 852 2086 1311 2086"/><path d="M394 2020C852 2020 852 1942 1311 1942"/><path d="M394 1683C852 1683 852 2393 1311 2393"/><path d="M394 1829C852 1829 852 1819 1311 1819"/><path d="M394 1539C852 1539 852 1637 1311 1637"/><path d="M394 1784C852 1784 852 2221 1311 2221"/><path d="M394 1870C852 1870 852 1604 1311 1604"/><path d="M394 1839C852 1839 852 1775 1311 1775"/><path d="M394 2102C852 2102 852 2422 1311 2422"/><path d="M394 1721C852 1721 852 1962 1311 1962"/><path d="M394 1581C852 1581 852 2035 1311 2035"/><path d="M394 2479C852 2479 852 1765 1311 1765"/><path d="M394 2130C852 2130 852 2501 1311 2501"/><path d="M394 1806C852 1806 852 2146 1311 2146"/><path d="M394 1830C852 1830 852 2045 1311 2045"/><path d="M394 2140C852 2140 852 1540 1311 1540"/><path d="M394 1787C852 1787 852 1922 1311 1922"/><path d="M394 1748C852 1748 852 2162 1311 2162"/><path d="M394 1661C852 1661 852 1519 1311 1519"/><path d="M394 1920C852 1920 852 2110 1311 2110"/><path d="M394 1539C852 1539 852 1812 1311 1812"/><path d="M394 1855C852 1855 852 2502 1311 2502"/><path d="M394 1593C852 1593 852 2454 1311 2454"/><path d="M394 1723C852 1723 852 1996 1311 1996"/><path d="M394 1677C852 1677 852 2339 1311 2339"/><path d="M394 1746C852 1746 852 2202 1311 2202"/><path d="M394 1859C852 1859 852 2451 1311 2451"/><path d="M394 1749C852 1749 852 1906 1311 1906"/><path d="M394 1597C852 1597 852 2070 1311 2070"/><path d="M394 2139C852 2139 852 1831 1311 1831"/><path d="M394 1563C852 1563 852 1705 1311 1705"/><path d="M394 1846C852 1846 852 2154 1311 2154"/><path d="M394 1934C852 1934 852 2190 1311 2190"/><path d="M394 2041C852 2041 852 2232 1311 2232"/><path d="M394 2543C852 2543 852 1990 1311 1990"/><path d="M394 1900C852 1900 852 1797 1311 1797"/><path d="M394 1572C852 1572 852 2410 1311 2410"/><path d="M394 1608C852 1608 852 1574 1311 1574"/><path d="M394 2416C852 2416 852 1885 1311 1885"/><path d="M394 1527C852 1527 852 2470 1311 2470"/><path d="M394 1646C852 1646 852 2501 1311 2501"/><path d="M394 1883C852 1883 852 2228 1311 2228"/><path d="M394 1741C852 1741 852 2306 1311 2306"/><path d="M394 1741C852 1741 852 2404 1311 2404"/><path d="M394 2101C852 2101 852 1595 1311 1595"/><path d="M394 1725C852 1725 852 1611 1311 1611"/><path d="M394 2524C852 2524 852 1967 1311 1967"/><path d="M394 1942C852 1942 852 2028 1311 2028"/><path d="M394 1922C852 1922 852 2487 1311 2487"/><path d="M394 2281C852 2281 852 1825 1311 1825"/><path d="M394 2476C852 2476 852 1536 1311 1536"/><path d="M394 1944C852 1944 852 2108 1311 2108"/><path d="M394 1819C852 1819 852 2235 1311 2235"/><path d="M394 2301C852 2301 852 1588 1311 1588"/><path d="M394 1590C852 1590 852 1913 1311 1913"/><path d="M394 2190C852 2190 852 1653 1311 1653"/><path d="M394 1792C852 1792 852 2338 1311 2338"/><path d="M394 1731C852 1731 852 1937 1311 1937"/><path d="M394 2410C852 2410 852 2106 1311 2106"/><path d="M394 1664C852 1664 852 1587 1311 1587"/><path d="M394 1594C852 1594 852 1859 1311 1859"/><path d="M394 1631C852 1631 852 1488 1311 1488"/><path d="M394 1823C852 1823 852 2282 1311 2282"/><path d="M394 1479C852 1479 852 2047 1311 2047"/><path d="M394 2235C852 2235 852 2452 1311 2452"/><path d="M394 2457C852 2457 852 1575 1311 1575"/><path d="M394 2343C852 2343 852 1716 1311 1716"/><path d="M394 2258C852 2258 852 2087 1311 2087"/><path d="M394 2390C852 2390 852 1492 1311 1492"/><path d="M394 1785C852 1785 852 1898 1311 1898"/><path d="M394 2514C852 2514 852 1622 1311 1622"/><path d="M394 2397C852 2397 852 2050 1311 2050"/><path d="M394 1819C852 1819 852 1779 1311 1779"/><path d="M394 2068C852 2068 852 1835 1311 1835"/><path d="M394 2328C852 2328 852 1539 1311 1539"/><path d="M394 2097C852 2097 852 2117 1311 2117"/><path d="M394 2126C852 2126 852 2077 1311 2077"/><path d="M394 1899C852 1899 852 1792 1311 1792"/><path d="M394 2178C852 2178 852 2012 1311 2012"/><path d="M394 1764C852 1764 852 2003 1311 2003"/><path d="M394 2066C852 2066 852 2051 1311 2051"/><path d="M394 2447C852 2447 852 2031 1311 2031"/><path d="M394 2381C852 2381 852 2144 1311 2144"/><path d="M394 2387C852 2387 852 1719 1311 1719"/><path d="M394 2133C852 2133 852 1665 1311 1665"/><path d="M394 1493C852 1493 852 1831 1311 1831"/><path d="M394 2463C852 2463 852 2427 1311 2427"/><path d="M394 2381C852 2381 852 2183 1311 2183"/><path d="M394 2029C852 2029 852 1689 1311 1689"/><path d="M394 2162C852 2162 852 2254 1311 2254"/><path d="M394 1753C852 1753 852 1922 1311 1922"/><path d="M394 1615C852 1615 852 2073 1311 2073"/><path d="M394 2178C852 2178 852 1538 1311 1538"/><path d="M394 1603C852 1603 852 2437 1311 2437"/><path d="M394 1745C852 1745 852 2549 1311 2549"/><path d="M394 2334C852 2334 852 2061 1311 2061"/><path d="M394 1833C852 1833 852 1588 1311 1588"/><path d="M394 2430C852 2430 852 1732 1311 1732"/><path d="M394 1700C852 1700 852 2055 1311 2055"/><path d="M394 2221C852 2221 852 1950 1311 1950"/><path d="M394 1698C852 1698 852 1773 1311 1773"/></g><g stroke="#c4a29e" stroke-opacity="0.072" stroke-width="1.2" fill="none"><path d="M394 1826C852 1826 852 1640 1311 1640"/><path d="M394 1800C852 1800 852 2331 1311 2331"/><path d="M394 2042C852 2042 852 2418 1311 2418"/><path d="M394 2227C852 2227 852 1548 1311 1548"/><path d="M394 2231C852 2231 852 2173 1311 2173"/><path d="M394 1940C852 1940 852 2069 1311 2069"/><path d="M394 1907C852 1907 852 1589 1311 1589"/><path d="M394 2292C852 2292 852 1798 1311 1798"/><path d="M394 2381C852 2381 852 1993 1311 1993"/><path d="M394 1493C852 1493 852 2521 1311 2521"/><path d="M394 1663C852 1663 852 1987 1311 1987"/><path d="M394 1607C852 1607 852 1544 1311 1544"/><path d="M394 1899C852 1899 852 1817 1311 1817"/><path d="M394 1736C852 1736 852 1557 1311 1557"/><path d="M394 1644C852 1644 852 2247 1311 2247"/><path d="M394 1906C852 1906 852 2001 1311 2001"/><path d="M394 1688C852 1688 852 1820 1311 1820"/><path d="M394 2146C852 2146 852 1524 1311 1524"/><path d="M394 1742C852 1742 852 1958 1311 1958"/><path d="M394 1846C852 1846 852 2372 1311 2372"/><path d="M394 1941C852 1941 852 1538 1311 1538"/><path d="M394 2382C852 2382 852 2413 1311 2413"/><path d="M394 2521C852 2521 852 2121 1311 2121"/><path d="M394 2284C852 2284 852 2184 1311 2184"/><path d="M394 2437C852 2437 852 2211 1311 2211"/><path d="M394 2152C852 2152 852 2151 1311 2151"/><path d="M394 2261C852 2261 852 1698 1311 1698"/><path d="M394 1889C852 1889 852 1992 1311 1992"/><path d="M394 1787C852 1787 852 1528 1311 1528"/><path d="M394 1834C852 1834 852 2178 1311 2178"/><path d="M394 1996C852 1996 852 2000 1311 2000"/><path d="M394 1558C852 1558 852 1575 1311 1575"/><path d="M394 2210C852 2210 852 1913 1311 1913"/><path d="M394 1781C852 1781 852 1753 1311 1753"/><path d="M394 2527C852 2527 852 1757 1311 1757"/><path d="M394 1734C852 1734 852 1997 1311 1997"/><path d="M394 1613C852 1613 852 2019 1311 2019"/><path d="M394 2489C852 2489 852 2253 1311 2253"/><path d="M394 1686C852 1686 852 2428 1311 2428"/><path d="M394 1929C852 1929 852 1754 1311 1754"/><path d="M394 2280C852 2280 852 1512 1311 1512"/><path d="M394 2341C852 2341 852 1572 1311 1572"/><path d="M394 1525C852 1525 852 2280 1311 2280"/><path d="M394 2365C852 2365 852 1593 1311 1593"/><path d="M394 2144C852 2144 852 2202 1311 2202"/><path d="M394 2390C852 2390 852 2314 1311 2314"/><path d="M394 2026C852 2026 852 1522 1311 1522"/><path d="M394 2286C852 2286 852 2439 1311 2439"/><path d="M394 1549C852 1549 852 2138 1311 2138"/><path d="M394 2475C852 2475 852 2440 1311 2440"/><path d="M394 1546C852 1546 852 1633 1311 1633"/><path d="M394 2082C852 2082 852 1854 1311 1854"/><path d="M394 1591C852 1591 852 2136 1311 2136"/><path d="M394 2035C852 2035 852 2168 1311 2168"/><path d="M394 2024C852 2024 852 1546 1311 1546"/><path d="M394 2170C852 2170 852 1610 1311 1610"/><path d="M394 1758C852 1758 852 1732 1311 1732"/><path d="M394 1735C852 1735 852 2453 1311 2453"/><path d="M394 2222C852 2222 852 2159 1311 2159"/><path d="M394 2503C852 2503 852 2051 1311 2051"/><path d="M394 1549C852 1549 852 2410 1311 2410"/><path d="M394 1754C852 1754 852 1782 1311 1782"/><path d="M394 2013C852 2013 852 1596 1311 1596"/><path d="M394 2302C852 2302 852 2005 1311 2005"/><path d="M394 2016C852 2016 852 1885 1311 1885"/><path d="M394 1684C852 1684 852 1802 1311 1802"/><path d="M394 2366C852 2366 852 2141 1311 2141"/><path d="M394 1830C852 1830 852 1681 1311 1681"/><path d="M394 2547C852 2547 852 1655 1311 1655"/><path d="M394 1947C852 1947 852 1717 1311 1717"/><path d="M394 2126C852 2126 852 1913 1311 1913"/><path d="M394 1738C852 1738 852 2394 1311 2394"/><path d="M394 2387C852 2387 852 2195 1311 2195"/><path d="M394 2423C852 2423 852 2309 1311 2309"/><path d="M394 1738C852 1738 852 1908 1311 1908"/><path d="M394 1875C852 1875 852 1846 1311 1846"/><path d="M394 2496C852 2496 852 1704 1311 1704"/><path d="M394 2261C852 2261 852 2137 1311 2137"/><path d="M394 1763C852 1763 852 1719 1311 1719"/><path d="M394 2353C852 2353 852 1635 1311 1635"/><path d="M394 1993C852 1993 852 1938 1311 1938"/><path d="M394 1849C852 1849 852 2104 1311 2104"/><path d="M394 1490C852 1490 852 2500 1311 2500"/><path d="M394 1650C852 1650 852 1822 1311 1822"/><path d="M394 1978C852 1978 852 1935 1311 1935"/><path d="M394 1559C852 1559 852 2162 1311 2162"/><path d="M394 1636C852 1636 852 2202 1311 2202"/><path d="M394 1520C852 1520 852 2158 1311 2158"/><path d="M394 2469C852 2469 852 1871 1311 1871"/><path d="M394 2244C852 2244 852 2397 1311 2397"/><path d="M394 1490C852 1490 852 1494 1311 1494"/><path d="M394 2165C852 2165 852 2468 1311 2468"/><path d="M394 1728C852 1728 852 1574 1311 1574"/><path d="M394 1650C852 1650 852 2515 1311 2515"/><path d="M394 1755C852 1755 852 2029 1311 2029"/><path d="M394 2111C852 2111 852 1952 1311 1952"/><path d="M394 2481C852 2481 852 2409 1311 2409"/><path d="M394 2258C852 2258 852 1793 1311 1793"/><path d="M394 2368C852 2368 852 2433 1311 2433"/><path d="M394 1625C852 1625 852 2197 1311 2197"/><path d="M394 1499C852 1499 852 2473 1311 2473"/><path d="M394 1722C852 1722 852 1722 1311 1722"/><path d="M394 2496C852 2496 852 1498 1311 1498"/><path d="M394 1827C852 1827 852 1635 1311 1635"/><path d="M394 2464C852 2464 852 2148 1311 2148"/><path d="M394 2098C852 2098 852 1772 1311 1772"/><path d="M394 2176C852 2176 852 1694 1311 1694"/><path d="M394 1595C852 1595 852 1720 1311 1720"/><path d="M394 1767C852 1767 852 2155 1311 2155"/><path d="M394 2043C852 2043 852 2117 1311 2117"/><path d="M394 1918C852 1918 852 2016 1311 2016"/><path d="M394 1857C852 1857 852 2545 1311 2545"/><path d="M394 2324C852 2324 852 1807 1311 1807"/><path d="M394 2382C852 2382 852 2108 1311 2108"/><path d="M394 2072C852 2072 852 1764 1311 1764"/><path d="M394 1774C852 1774 852 1513 1311 1513"/><path d="M394 1739C852 1739 852 1897 1311 1897"/><path d="M394 1733C852 1733 852 1515 1311 1515"/><path d="M394 1698C852 1698 852 2400 1311 2400"/><path d="M394 1510C852 1510 852 2208 1311 2208"/><path d="M394 2552C852 2552 852 1908 1311 1908"/><path d="M394 2458C852 2458 852 2266 1311 2266"/><path d="M394 1598C852 1598 852 2298 1311 2298"/><path d="M394 1704C852 1704 852 2460 1311 2460"/><path d="M394 2459C852 2459 852 1926 1311 1926"/><path d="M394 1568C852 1568 852 2248 1311 2248"/><path d="M394 2170C852 2170 852 2152 1311 2152"/><path d="M394 1522C852 1522 852 2087 1311 2087"/><path d="M394 1935C852 1935 852 1782 1311 1782"/><path d="M394 1938C852 1938 852 2052 1311 2052"/><path d="M394 2254C852 2254 852 1834 1311 1834"/><path d="M394 2407C852 2407 852 2048 1311 2048"/><path d="M394 1508C852 1508 852 1681 1311 1681"/><path d="M394 1695C852 1695 852 1601 1311 1601"/><path d="M394 2413C852 2413 852 1658 1311 1658"/><path d="M394 2382C852 2382 852 2342 1311 2342"/><path d="M394 2073C852 2073 852 1789 1311 1789"/><path d="M394 2418C852 2418 852 2056 1311 2056"/><path d="M394 1705C852 1705 852 2358 1311 2358"/><path d="M394 1527C852 1527 852 1635 1311 1635"/><path d="M394 2310C852 2310 852 2158 1311 2158"/><path d="M394 2247C852 2247 852 1837 1311 1837"/><path d="M394 2108C852 2108 852 1632 1311 1632"/><path d="M394 2355C852 2355 852 2096 1311 2096"/><path d="M394 1506C852 1506 852 1818 1311 1818"/><path d="M394 1756C852 1756 852 2129 1311 2129"/><path d="M394 1638C852 1638 852 1669 1311 1669"/><path d="M394 2448C852 2448 852 1594 1311 1594"/><path d="M394 1511C852 1511 852 1500 1311 1500"/><path d="M394 1575C852 1575 852 1843 1311 1843"/><path d="M394 2107C852 2107 852 1694 1311 1694"/><path d="M394 2117C852 2117 852 2095 1311 2095"/><path d="M394 2062C852 2062 852 2067 1311 2067"/><path d="M394 1919C852 1919 852 2545 1311 2545"/><path d="M394 2341C852 2341 852 2443 1311 2443"/><path d="M394 2383C852 2383 852 2320 1311 2320"/><path d="M394 2214C852 2214 852 1953 1311 1953"/><path d="M394 1730C852 1730 852 2154 1311 2154"/><path d="M394 2454C852 2454 852 1986 1311 1986"/><path d="M394 1660C852 1660 852 1871 1311 1871"/><path d="M394 1903C852 1903 852 2549 1311 2549"/><path d="M394 1598C852 1598 852 2160 1311 2160"/><path d="M394 2243C852 2243 852 1878 1311 1878"/><path d="M394 1923C852 1923 852 2483 1311 2483"/><path d="M394 2083C852 2083 852 2482 1311 2482"/><path d="M394 1909C852 1909 852 1522 1311 1522"/><path d="M394 2405C852 2405 852 2069 1311 2069"/><path d="M394 1968C852 1968 852 2237 1311 2237"/><path d="M394 2012C852 2012 852 1493 1311 1493"/><path d="M394 1715C852 1715 852 2252 1311 2252"/><path d="M394 1649C852 1649 852 2313 1311 2313"/><path d="M394 1644C852 1644 852 1539 1311 1539"/><path d="M394 2334C852 2334 852 2237 1311 2237"/><path d="M394 1520C852 1520 852 1856 1311 1856"/><path d="M394 1522C852 1522 852 2142 1311 2142"/><path d="M394 1741C852 1741 852 2266 1311 2266"/><path d="M394 2453C852 2453 852 2285 1311 2285"/><path d="M394 1652C852 1652 852 2515 1311 2515"/><path d="M394 1732C852 1732 852 2007 1311 2007"/><path d="M394 2433C852 2433 852 1532 1311 1532"/><path d="M394 2320C852 2320 852 2330 1311 2330"/><path d="M394 1914C852 1914 852 1572 1311 1572"/><path d="M394 2200C852 2200 852 2328 1311 2328"/><path d="M394 2184C852 2184 852 2269 1311 2269"/><path d="M394 2475C852 2475 852 2438 1311 2438"/><path d="M394 1806C852 1806 852 2240 1311 2240"/><path d="M394 1882C852 1882 852 2039 1311 2039"/><path d="M394 2175C852 2175 852 2342 1311 2342"/><path d="M394 2165C852 2165 852 2007 1311 2007"/><path d="M394 1962C852 1962 852 2377 1311 2377"/><path d="M394 1656C852 1656 852 1667 1311 1667"/><path d="M394 1943C852 1943 852 1708 1311 1708"/><path d="M394 2276C852 2276 852 2360 1311 2360"/><path d="M394 1887C852 1887 852 1787 1311 1787"/><path d="M394 2524C852 2524 852 2098 1311 2098"/><path d="M394 1546C852 1546 852 2155 1311 2155"/><path d="M394 2185C852 2185 852 1748 1311 1748"/><path d="M394 2466C852 2466 852 2254 1311 2254"/><path d="M394 1492C852 1492 852 2405 1311 2405"/><path d="M394 1860C852 1860 852 1654 1311 1654"/><path d="M394 1930C852 1930 852 1510 1311 1510"/><path d="M394 2429C852 2429 852 1998 1311 1998"/><path d="M394 1951C852 1951 852 2092 1311 2092"/><path d="M394 2403C852 2403 852 1659 1311 1659"/><path d="M394 1719C852 1719 852 2271 1311 2271"/><path d="M394 2291C852 2291 852 1589 1311 1589"/><path d="M394 2328C852 2328 852 2055 1311 2055"/><path d="M394 2248C852 2248 852 1511 1311 1511"/><path d="M394 1653C852 1653 852 2495 1311 2495"/><path d="M394 1651C852 1651 852 2048 1311 2048"/><path d="M394 2138C852 2138 852 1657 1311 1657"/><path d="M394 1754C852 1754 852 1508 1311 1508"/><path d="M394 1804C852 1804 852 1917 1311 1917"/><path d="M394 2450C852 2450 852 1648 1311 1648"/><path d="M394 1754C852 1754 852 2025 1311 2025"/><path d="M394 2183C852 2183 852 2177 1311 2177"/><path d="M394 1722C852 1722 852 2120 1311 2120"/><path d="M394 2394C852 2394 852 2275 1311 2275"/><path d="M394 1915C852 1915 852 1847 1311 1847"/><path d="M394 1966C852 1966 852 2081 1311 2081"/><path d="M394 2390C852 2390 852 2345 1311 2345"/><path d="M394 1754C852 1754 852 2361 1311 2361"/><path d="M394 2445C852 2445 852 1728 1311 1728"/><path d="M394 1651C852 1651 852 1875 1311 1875"/><path d="M394 2302C852 2302 852 2375 1311 2375"/><path d="M394 1725C852 1725 852 1763 1311 1763"/><path d="M394 1853C852 1853 852 1791 1311 1791"/><path d="M394 1576C852 1576 852 2148 1311 2148"/><path d="M394 2222C852 2222 852 1892 1311 1892"/><path d="M394 2256C852 2256 852 1511 1311 1511"/><path d="M394 1842C852 1842 852 2234 1311 2234"/><path d="M394 1812C852 1812 852 1558 1311 1558"/><path d="M394 2485C852 2485 852 1927 1311 1927"/><path d="M394 1877C852 1877 852 1958 1311 1958"/><path d="M394 2036C852 2036 852 1634 1311 1634"/><path d="M394 1512C852 1512 852 2455 1311 2455"/><path d="M394 1894C852 1894 852 2345 1311 2345"/><path d="M394 1757C852 1757 852 2273 1311 2273"/><path d="M394 2491C852 2491 852 1492 1311 1492"/><path d="M394 2290C852 2290 852 1740 1311 1740"/><path d="M394 2342C852 2342 852 2542 1311 2542"/><path d="M394 1554C852 1554 852 1551 1311 1551"/><path d="M394 1534C852 1534 852 2402 1311 2402"/><path d="M394 1983C852 1983 852 2444 1311 2444"/><path d="M394 1998C852 1998 852 1925 1311 1925"/><path d="M394 1868C852 1868 852 2508 1311 2508"/><path d="M394 1713C852 1713 852 2426 1311 2426"/><path d="M394 1944C852 1944 852 1887 1311 1887"/><path d="M394 1802C852 1802 852 1831 1311 1831"/><path d="M394 2446C852 2446 852 2392 1311 2392"/><path d="M394 1511C852 1511 852 1624 1311 1624"/><path d="M394 2025C852 2025 852 2243 1311 2243"/><path d="M394 1646C852 1646 852 2179 1311 2179"/><path d="M394 2328C852 2328 852 2112 1311 2112"/><path d="M394 2049C852 2049 852 2476 1311 2476"/><path d="M394 1894C852 1894 852 1868 1311 1868"/><path d="M394 1787C852 1787 852 2010 1311 2010"/><path d="M394 1761C852 1761 852 2266 1311 2266"/><path d="M394 2262C852 2262 852 1931 1311 1931"/><path d="M394 1728C852 1728 852 2525 1311 2525"/><path d="M394 2437C852 2437 852 2330 1311 2330"/><path d="M394 2385C852 2385 852 1867 1311 1867"/><path d="M394 2197C852 2197 852 2090 1311 2090"/><path d="M394 2414C852 2414 852 1952 1311 1952"/><path d="M394 1709C852 1709 852 2123 1311 2123"/><path d="M394 2171C852 2171 852 2292 1311 2292"/><path d="M394 1611C852 1611 852 1783 1311 1783"/><path d="M394 1875C852 1875 852 2314 1311 2314"/><path d="M394 2225C852 2225 852 1994 1311 1994"/><path d="M394 1690C852 1690 852 2507 1311 2507"/><path d="M394 1683C852 1683 852 1793 1311 1793"/><path d="M394 2479C852 2479 852 1765 1311 1765"/><path d="M394 2545C852 2545 852 2147 1311 2147"/><path d="M394 1834C852 1834 852 1573 1311 1573"/><path d="M394 1826C852 1826 852 2455 1311 2455"/><path d="M394 1736C852 1736 852 1980 1311 1980"/><path d="M394 2061C852 2061 852 2542 1311 2542"/><path d="M394 1614C852 1614 852 2214 1311 2214"/><path d="M394 1677C852 1677 852 2536 1311 2536"/><path d="M394 1536C852 1536 852 2104 1311 2104"/><path d="M394 1482C852 1482 852 1576 1311 1576"/><path d="M394 1602C852 1602 852 1887 1311 1887"/><path d="M394 2541C852 2541 852 2143 1311 2143"/><path d="M394 2357C852 2357 852 1996 1311 1996"/><path d="M394 1571C852 1571 852 1865 1311 1865"/><path d="M394 1985C852 1985 852 2251 1311 2251"/><path d="M394 1930C852 1930 852 1815 1311 1815"/><path d="M394 1812C852 1812 852 2414 1311 2414"/><path d="M394 2023C852 2023 852 1789 1311 1789"/><path d="M394 1852C852 1852 852 1874 1311 1874"/><path d="M394 2167C852 2167 852 1626 1311 1626"/><path d="M394 1910C852 1910 852 1652 1311 1652"/><path d="M394 1714C852 1714 852 2510 1311 2510"/><path d="M394 2232C852 2232 852 2305 1311 2305"/><path d="M394 2052C852 2052 852 2248 1311 2248"/><path d="M394 2481C852 2481 852 2522 1311 2522"/><path d="M394 1951C852 1951 852 2370 1311 2370"/><path d="M394 2251C852 2251 852 1532 1311 1532"/><path d="M394 1792C852 1792 852 1777 1311 1777"/><path d="M394 2473C852 2473 852 2349 1311 2349"/><path d="M394 1786C852 1786 852 1809 1311 1809"/><path d="M394 1650C852 1650 852 2011 1311 2011"/><path d="M394 1980C852 1980 852 2374 1311 2374"/><path d="M394 1955C852 1955 852 2433 1311 2433"/><path d="M394 2391C852 2391 852 2537 1311 2537"/><path d="M394 1993C852 1993 852 1548 1311 1548"/><path d="M394 1718C852 1718 852 1739 1311 1739"/><path d="M394 1815C852 1815 852 1895 1311 1895"/><path d="M394 2024C852 2024 852 1605 1311 1605"/><path d="M394 1492C852 1492 852 2151 1311 2151"/><path d="M394 1619C852 1619 852 1800 1311 1800"/><path d="M394 2168C852 2168 852 2183 1311 2183"/><path d="M394 1796C852 1796 852 1888 1311 1888"/><path d="M394 2140C852 2140 852 2162 1311 2162"/><path d="M394 1566C852 1566 852 2137 1311 2137"/><path d="M394 2380C852 2380 852 1528 1311 1528"/><path d="M394 2527C852 2527 852 2061 1311 2061"/><path d="M394 2223C852 2223 852 2109 1311 2109"/><path d="M394 1697C852 1697 852 2549 1311 2549"/><path d="M394 1907C852 1907 852 1665 1311 1665"/><path d="M394 2507C852 2507 852 1899 1311 1899"/><path d="M394 1934C852 1934 852 1880 1311 1880"/><path d="M394 1519C852 1519 852 1751 1311 1751"/><path d="M394 2478C852 2478 852 2171 1311 2171"/><path d="M394 2087C852 2087 852 2466 1311 2466"/><path d="M394 2276C852 2276 852 2206 1311 2206"/><path d="M394 1932C852 1932 852 2376 1311 2376"/><path d="M394 1912C852 1912 852 1588 1311 1588"/><path d="M394 1527C852 1527 852 2422 1311 2422"/><path d="M394 1972C852 1972 852 2071 1311 2071"/><path d="M394 2101C852 2101 852 1635 1311 1635"/><path d="M394 1526C852 1526 852 1789 1311 1789"/><path d="M394 1493C852 1493 852 1822 1311 1822"/><path d="M394 2375C852 2375 852 2210 1311 2210"/><path d="M394 1617C852 1617 852 1677 1311 1677"/><path d="M394 1738C852 1738 852 2227 1311 2227"/><path d="M394 2274C852 2274 852 2466 1311 2466"/><path d="M394 2480C852 2480 852 1485 1311 1485"/><path d="M394 1882C852 1882 852 1611 1311 1611"/><path d="M394 1627C852 1627 852 2467 1311 2467"/><path d="M394 2015C852 2015 852 1495 1311 1495"/><path d="M394 2188C852 2188 852 2091 1311 2091"/><path d="M394 1918C852 1918 852 1560 1311 1560"/><path d="M394 1549C852 1549 852 2195 1311 2195"/><path d="M394 2345C852 2345 852 2118 1311 2118"/><path d="M394 1683C852 1683 852 2524 1311 2524"/><path d="M394 2162C852 2162 852 1954 1311 1954"/><path d="M394 2053C852 2053 852 2120 1311 2120"/><path d="M394 1847C852 1847 852 2185 1311 2185"/><path d="M394 1740C852 1740 852 1755 1311 1755"/><path d="M394 1854C852 1854 852 2013 1311 2013"/><path d="M394 2218C852 2218 852 1973 1311 1973"/><path d="M394 2059C852 2059 852 1797 1311 1797"/><path d="M394 2205C852 2205 852 1935 1311 1935"/><path d="M394 1508C852 1508 852 2161 1311 2161"/><path d="M394 2264C852 2264 852 1523 1311 1523"/><path d="M394 1998C852 1998 852 2422 1311 2422"/><path d="M394 1952C852 1952 852 1604 1311 1604"/><path d="M394 2467C852 2467 852 2174 1311 2174"/><path d="M394 1494C852 1494 852 2416 1311 2416"/><path d="M394 1930C852 1930 852 1746 1311 1746"/><path d="M394 2528C852 2528 852 2042 1311 2042"/><path d="M394 2062C852 2062 852 1481 1311 1481"/><path d="M394 2529C852 2529 852 2169 1311 2169"/><path d="M394 1744C852 1744 852 1655 1311 1655"/><path d="M394 2285C852 2285 852 2073 1311 2073"/><path d="M394 1589C852 1589 852 1627 1311 1627"/><path d="M394 2045C852 2045 852 2445 1311 2445"/><path d="M394 2509C852 2509 852 1486 1311 1486"/><path d="M394 1638C852 1638 852 1841 1311 1841"/><path d="M394 2120C852 2120 852 1800 1311 1800"/><path d="M394 1556C852 1556 852 2075 1311 2075"/><path d="M394 1732C852 1732 852 2239 1311 2239"/><path d="M394 1583C852 1583 852 2507 1311 2507"/><path d="M394 1481C852 1481 852 1577 1311 1577"/><path d="M394 2345C852 2345 852 2403 1311 2403"/><path d="M394 1703C852 1703 852 1559 1311 1559"/><path d="M394 2271C852 2271 852 1744 1311 1744"/><path d="M394 2486C852 2486 852 1947 1311 1947"/><path d="M394 2278C852 2278 852 2155 1311 2155"/><path d="M394 1827C852 1827 852 1703 1311 1703"/><path d="M394 2542C852 2542 852 2465 1311 2465"/><path d="M394 1903C852 1903 852 1716 1311 1716"/><path d="M394 1810C852 1810 852 2389 1311 2389"/><path d="M394 2406C852 2406 852 1572 1311 1572"/><path d="M394 2139C852 2139 852 1699 1311 1699"/><path d="M394 1735C852 1735 852 1849 1311 1849"/><path d="M394 2266C852 2266 852 2060 1311 2060"/><path d="M394 1821C852 1821 852 2142 1311 2142"/><path d="M394 1777C852 1777 852 2166 1311 2166"/><path d="M394 1631C852 1631 852 2316 1311 2316"/><path d="M394 2224C852 2224 852 1821 1311 1821"/><path d="M394 2476C852 2476 852 1497 1311 1497"/><path d="M394 2513C852 2513 852 1880 1311 1880"/><path d="M394 2305C852 2305 852 2057 1311 2057"/><path d="M394 1941C852 1941 852 1982 1311 1982"/><path d="M394 2012C852 2012 852 2016 1311 2016"/><path d="M394 1614C852 1614 852 2370 1311 2370"/><path d="M394 1731C852 1731 852 1825 1311 1825"/><path d="M394 1963C852 1963 852 1540 1311 1540"/><path d="M394 2359C852 2359 852 1980 1311 1980"/><path d="M394 1744C852 1744 852 1554 1311 1554"/><path d="M394 2146C852 2146 852 1506 1311 1506"/><path d="M394 2231C852 2231 852 2119 1311 2119"/><path d="M394 1636C852 1636 852 1848 1311 1848"/><path d="M394 2324C852 2324 852 2374 1311 2374"/><path d="M394 1648C852 1648 852 1998 1311 1998"/><path d="M394 2038C852 2038 852 1675 1311 1675"/><path d="M394 2547C852 2547 852 2453 1311 2453"/><path d="M394 1782C852 1782 852 2342 1311 2342"/><path d="M394 1648C852 1648 852 2535 1311 2535"/><path d="M394 1502C852 1502 852 2149 1311 2149"/><path d="M394 2396C852 2396 852 2408 1311 2408"/><path d="M394 2323C852 2323 852 2076 1311 2076"/><path d="M394 1552C852 1552 852 1995 1311 1995"/><path d="M394 2399C852 2399 852 2235 1311 2235"/><path d="M394 1968C852 1968 852 2076 1311 2076"/><path d="M394 1853C852 1853 852 2136 1311 2136"/><path d="M394 1975C852 1975 852 2230 1311 2230"/><path d="M394 2494C852 2494 852 1879 1311 1879"/><path d="M394 1703C852 1703 852 1616 1311 1616"/><path d="M394 1626C852 1626 852 2102 1311 2102"/><path d="M394 2232C852 2232 852 1665 1311 1665"/><path d="M394 2499C852 2499 852 1795 1311 1795"/><path d="M394 2118C852 2118 852 2072 1311 2072"/><path d="M394 1679C852 1679 852 1676 1311 1676"/><path d="M394 1598C852 1598 852 2222 1311 2222"/><path d="M394 2464C852 2464 852 1826 1311 1826"/><path d="M394 1599C852 1599 852 2036 1311 2036"/><path d="M394 1675C852 1675 852 1677 1311 1677"/><path d="M394 2299C852 2299 852 2027 1311 2027"/><path d="M394 1490C852 1490 852 2261 1311 2261"/><path d="M394 1711C852 1711 852 1611 1311 1611"/><path d="M394 1990C852 1990 852 1990 1311 1990"/><path d="M394 2287C852 2287 852 2521 1311 2521"/><path d="M394 2428C852 2428 852 1805 1311 1805"/><path d="M394 2094C852 2094 852 2267 1311 2267"/><path d="M394 2363C852 2363 852 1746 1311 1746"/><path d="M394 2207C852 2207 852 1684 1311 1684"/><path d="M394 2195C852 2195 852 1764 1311 1764"/><path d="M394 2218C852 2218 852 1673 1311 1673"/><path d="M394 1750C852 1750 852 1986 1311 1986"/><path d="M394 1635C852 1635 852 2193 1311 2193"/><path d="M394 1893C852 1893 852 2542 1311 2542"/><path d="M394 1701C852 1701 852 2118 1311 2118"/><path d="M394 1544C852 1544 852 2450 1311 2450"/><path d="M394 1794C852 1794 852 1761 1311 1761"/><path d="M394 1913C852 1913 852 1480 1311 1480"/><path d="M394 1782C852 1782 852 1933 1311 1933"/><path d="M394 1617C852 1617 852 1926 1311 1926"/><path d="M394 2445C852 2445 852 1964 1311 1964"/><path d="M394 1913C852 1913 852 2434 1311 2434"/><path d="M394 1798C852 1798 852 1538 1311 1538"/><path d="M394 1673C852 1673 852 1888 1311 1888"/><path d="M394 2358C852 2358 852 2510 1311 2510"/><path d="M394 2240C852 2240 852 2369 1311 2369"/><path d="M394 2472C852 2472 852 1493 1311 1493"/><path d="M394 2162C852 2162 852 2120 1311 2120"/><path d="M394 1609C852 1609 852 1739 1311 1739"/><path d="M394 1691C852 1691 852 1532 1311 1532"/><path d="M394 1941C852 1941 852 2379 1311 2379"/><path d="M394 1717C852 1717 852 1563 1311 1563"/><path d="M394 1844C852 1844 852 1862 1311 1862"/><path d="M394 2293C852 2293 852 2078 1311 2078"/><path d="M394 2429C852 2429 852 1553 1311 1553"/><path d="M394 2467C852 2467 852 2328 1311 2328"/><path d="M394 2057C852 2057 852 2088 1311 2088"/><path d="M394 2402C852 2402 852 2092 1311 2092"/><path d="M394 2269C852 2269 852 1888 1311 1888"/><path d="M394 1743C852 1743 852 1840 1311 1840"/><path d="M394 1769C852 1769 852 2085 1311 2085"/><path d="M394 2147C852 2147 852 1568 1311 1568"/><path d="M394 1727C852 1727 852 1975 1311 1975"/><path d="M394 1629C852 1629 852 1656 1311 1656"/><path d="M394 1523C852 1523 852 2405 1311 2405"/><path d="M394 2142C852 2142 852 1503 1311 1503"/><path d="M394 1481C852 1481 852 2265 1311 2265"/><path d="M394 1870C852 1870 852 1715 1311 1715"/><path d="M394 2521C852 2521 852 2289 1311 2289"/><path d="M394 2369C852 2369 852 1630 1311 1630"/><path d="M394 1969C852 1969 852 1789 1311 1789"/><path d="M394 1864C852 1864 852 2320 1311 2320"/><path d="M394 2090C852 2090 852 2208 1311 2208"/><path d="M394 1484C852 1484 852 2225 1311 2225"/><path d="M394 2531C852 2531 852 2151 1311 2151"/><path d="M394 2318C852 2318 852 2008 1311 2008"/><path d="M394 2490C852 2490 852 1682 1311 1682"/><path d="M394 1766C852 1766 852 2046 1311 2046"/><path d="M394 1622C852 1622 852 1530 1311 1530"/><path d="M394 1801C852 1801 852 1914 1311 1914"/><path d="M394 1567C852 1567 852 2461 1311 2461"/><path d="M394 2478C852 2478 852 2253 1311 2253"/><path d="M394 2100C852 2100 852 1681 1311 1681"/><path d="M394 2030C852 2030 852 2338 1311 2338"/><path d="M394 1604C852 1604 852 1584 1311 1584"/><path d="M394 2477C852 2477 852 1587 1311 1587"/><path d="M394 1836C852 1836 852 1654 1311 1654"/><path d="M394 1629C852 1629 852 2377 1311 2377"/><path d="M394 2182C852 2182 852 1503 1311 1503"/><path d="M394 1924C852 1924 852 2547 1311 2547"/><path d="M394 1612C852 1612 852 2494 1311 2494"/><path d="M394 2021C852 2021 852 1602 1311 1602"/><path d="M394 2085C852 2085 852 2296 1311 2296"/><path d="M394 1656C852 1656 852 2454 1311 2454"/><path d="M394 1904C852 1904 852 2411 1311 2411"/><path d="M394 2143C852 2143 852 2316 1311 2316"/><path d="M394 1687C852 1687 852 1823 1311 1823"/><path d="M394 2270C852 2270 852 2318 1311 2318"/><path d="M394 2521C852 2521 852 2465 1311 2465"/><path d="M394 2406C852 2406 852 2297 1311 2297"/><path d="M394 2497C852 2497 852 1741 1311 1741"/><path d="M394 1639C852 1639 852 2424 1311 2424"/><path d="M394 2103C852 2103 852 2523 1311 2523"/><path d="M394 2167C852 2167 852 2199 1311 2199"/><path d="M394 1584C852 1584 852 2435 1311 2435"/><path d="M394 1595C852 1595 852 1489 1311 1489"/><path d="M394 1888C852 1888 852 1914 1311 1914"/><path d="M394 2175C852 2175 852 1948 1311 1948"/><path d="M394 1733C852 1733 852 1939 1311 1939"/><path d="M394 1847C852 1847 852 2220 1311 2220"/><path d="M394 1662C852 1662 852 2195 1311 2195"/><path d="M394 1521C852 1521 852 2174 1311 2174"/><path d="M394 2248C852 2248 852 1704 1311 1704"/><path d="M394 2409C852 2409 852 1872 1311 1872"/><path d="M394 2371C852 2371 852 2166 1311 2166"/><path d="M394 2504C852 2504 852 2451 1311 2451"/><path d="M394 1956C852 1956 852 1990 1311 1990"/><path d="M394 1542C852 1542 852 2032 1311 2032"/><path d="M394 2308C852 2308 852 2120 1311 2120"/><path d="M394 1884C852 1884 852 2230 1311 2230"/><path d="M394 1949C852 1949 852 1980 1311 1980"/><path d="M394 1544C852 1544 852 2234 1311 2234"/><path d="M394 1701C852 1701 852 1929 1311 1929"/><path d="M394 2545C852 2545 852 1981 1311 1981"/><path d="M394 1807C852 1807 852 2058 1311 2058"/><path d="M394 1817C852 1817 852 1958 1311 1958"/><path d="M394 1549C852 1549 852 1613 1311 1613"/><path d="M394 2282C852 2282 852 2030 1311 2030"/><path d="M394 2296C852 2296 852 1729 1311 1729"/><path d="M394 1911C852 1911 852 2297 1311 2297"/><path d="M394 1635C852 1635 852 2132 1311 2132"/><path d="M394 1941C852 1941 852 1707 1311 1707"/><path d="M394 1554C852 1554 852 2340 1311 2340"/><path d="M394 2163C852 2163 852 1661 1311 1661"/><path d="M394 2313C852 2313 852 1511 1311 1511"/><path d="M394 1776C852 1776 852 1542 1311 1542"/><path d="M394 1886C852 1886 852 2390 1311 2390"/><path d="M394 2065C852 2065 852 2115 1311 2115"/><path d="M394 1848C852 1848 852 2323 1311 2323"/><path d="M394 2289C852 2289 852 1797 1311 1797"/><path d="M394 2291C852 2291 852 1568 1311 1568"/><path d="M394 1482C852 1482 852 1895 1311 1895"/><path d="M394 2262C852 2262 852 2209 1311 2209"/><path d="M394 1490C852 1490 852 1995 1311 1995"/><path d="M394 1944C852 1944 852 1841 1311 1841"/><path d="M394 2046C852 2046 852 2107 1311 2107"/><path d="M394 2023C852 2023 852 2471 1311 2471"/><path d="M394 1676C852 1676 852 1718 1311 1718"/><path d="M394 2054C852 2054 852 2026 1311 2026"/><path d="M394 1551C852 1551 852 2408 1311 2408"/><path d="M394 2172C852 2172 852 1750 1311 1750"/><path d="M394 2415C852 2415 852 1633 1311 1633"/><path d="M394 2453C852 2453 852 2004 1311 2004"/><path d="M394 2359C852 2359 852 2019 1311 2019"/><path d="M394 2518C852 2518 852 1621 1311 1621"/><path d="M394 2108C852 2108 852 1574 1311 1574"/><path d="M394 1771C852 1771 852 2348 1311 2348"/><path d="M394 2179C852 2179 852 2551 1311 2551"/><path d="M394 1927C852 1927 852 2406 1311 2406"/><path d="M394 1911C852 1911 852 2522 1311 2522"/><path d="M394 1832C852 1832 852 1871 1311 1871"/><path d="M394 1721C852 1721 852 2251 1311 2251"/><path d="M394 2320C852 2320 852 1720 1311 1720"/><path d="M394 2541C852 2541 852 2190 1311 2190"/><path d="M394 1793C852 1793 852 2129 1311 2129"/><path d="M394 2347C852 2347 852 1892 1311 1892"/><path d="M394 2532C852 2532 852 2016 1311 2016"/><path d="M394 2034C852 2034 852 1484 1311 1484"/><path d="M394 1662C852 1662 852 2446 1311 2446"/><path d="M394 1583C852 1583 852 1852 1311 1852"/><path d="M394 2501C852 2501 852 2144 1311 2144"/><path d="M394 1872C852 1872 852 2443 1311 2443"/><path d="M394 2530C852 2530 852 2450 1311 2450"/><path d="M394 1877C852 1877 852 2387 1311 2387"/><path d="M394 2381C852 2381 852 2334 1311 2334"/><path d="M394 1920C852 1920 852 1859 1311 1859"/><path d="M394 2264C852 2264 852 1691 1311 1691"/><path d="M394 1519C852 1519 852 1716 1311 1716"/><path d="M394 1993C852 1993 852 1907 1311 1907"/><path d="M394 2290C852 2290 852 1550 1311 1550"/><path d="M394 2277C852 2277 852 1543 1311 1543"/><path d="M394 2537C852 2537 852 2256 1311 2256"/><path d="M394 1922C852 1922 852 1900 1311 1900"/><path d="M394 2166C852 2166 852 1512 1311 1512"/><path d="M394 2455C852 2455 852 1521 1311 1521"/><path d="M394 2451C852 2451 852 2276 1311 2276"/><path d="M394 1530C852 1530 852 1591 1311 1591"/><path d="M394 1963C852 1963 852 2185 1311 2185"/><path d="M394 2486C852 2486 852 2249 1311 2249"/><path d="M394 2117C852 2117 852 1721 1311 1721"/><path d="M394 1783C852 1783 852 2092 1311 2092"/><path d="M394 1610C852 1610 852 2259 1311 2259"/><path d="M394 1954C852 1954 852 1481 1311 1481"/><path d="M394 2429C852 2429 852 1481 1311 1481"/><path d="M394 2243C852 2243 852 1623 1311 1623"/><path d="M394 1706C852 1706 852 2514 1311 2514"/><path d="M394 2506C852 2506 852 2063 1311 2063"/><path d="M394 1575C852 1575 852 1483 1311 1483"/><path d="M394 2223C852 2223 852 2012 1311 2012"/><path d="M394 1706C852 1706 852 1524 1311 1524"/><path d="M394 1670C852 1670 852 1770 1311 1770"/><path d="M394 2538C852 2538 852 1873 1311 1873"/><path d="M394 2362C852 2362 852 2449 1311 2449"/><path d="M394 2433C852 2433 852 1803 1311 1803"/><path d="M394 2351C852 2351 852 1888 1311 1888"/></g><g stroke="#bcb0b8" stroke-opacity="0.072" stroke-width="1.2" fill="none"><path d="M394 1605C852 1605 852 1927 1311 1927"/><path d="M394 1520C852 1520 852 2196 1311 2196"/><path d="M394 2077C852 2077 852 2325 1311 2325"/><path d="M394 2271C852 2271 852 1905 1311 1905"/><path d="M394 2068C852 2068 852 2427 1311 2427"/><path d="M394 2444C852 2444 852 2316 1311 2316"/><path d="M394 2307C852 2307 852 2050 1311 2050"/><path d="M394 2350C852 2350 852 2536 1311 2536"/><path d="M394 1847C852 1847 852 2169 1311 2169"/><path d="M394 2187C852 2187 852 2455 1311 2455"/><path d="M394 2344C852 2344 852 1635 1311 1635"/><path d="M394 1944C852 1944 852 2414 1311 2414"/><path d="M394 1828C852 1828 852 2063 1311 2063"/><path d="M394 2442C852 2442 852 2189 1311 2189"/><path d="M394 2035C852 2035 852 2075 1311 2075"/><path d="M394 1745C852 1745 852 1775 1311 1775"/><path d="M394 1803C852 1803 852 1609 1311 1609"/><path d="M394 2183C852 2183 852 1745 1311 1745"/><path d="M394 1569C852 1569 852 2507 1311 2507"/><path d="M394 2320C852 2320 852 2119 1311 2119"/><path d="M394 2152C852 2152 852 2266 1311 2266"/><path d="M394 2021C852 2021 852 2455 1311 2455"/><path d="M394 2020C852 2020 852 2375 1311 2375"/><path d="M394 1495C852 1495 852 2215 1311 2215"/><path d="M394 2176C852 2176 852 1972 1311 1972"/><path d="M394 1497C852 1497 852 1971 1311 1971"/><path d="M394 1548C852 1548 852 1897 1311 1897"/><path d="M394 1947C852 1947 852 1817 1311 1817"/><path d="M394 1559C852 1559 852 2016 1311 2016"/><path d="M394 1615C852 1615 852 1935 1311 1935"/><path d="M394 2004C852 2004 852 1557 1311 1557"/><path d="M394 2070C852 2070 852 1520 1311 1520"/><path d="M394 1777C852 1777 852 1818 1311 1818"/><path d="M394 1861C852 1861 852 2360 1311 2360"/><path d="M394 1511C852 1511 852 1919 1311 1919"/><path d="M394 2253C852 2253 852 2118 1311 2118"/><path d="M394 2326C852 2326 852 2459 1311 2459"/><path d="M394 2056C852 2056 852 2309 1311 2309"/><path d="M394 2023C852 2023 852 1727 1311 1727"/><path d="M394 1588C852 1588 852 1988 1311 1988"/><path d="M394 1532C852 1532 852 2123 1311 2123"/><path d="M394 1923C852 1923 852 1498 1311 1498"/><path d="M394 1534C852 1534 852 1631 1311 1631"/><path d="M394 2005C852 2005 852 2342 1311 2342"/><path d="M394 2449C852 2449 852 2144 1311 2144"/><path d="M394 2435C852 2435 852 2166 1311 2166"/><path d="M394 1717C852 1717 852 1912 1311 1912"/><path d="M394 1522C852 1522 852 2082 1311 2082"/><path d="M394 2499C852 2499 852 1624 1311 1624"/><path d="M394 1787C852 1787 852 2349 1311 2349"/><path d="M394 1548C852 1548 852 1855 1311 1855"/><path d="M394 2329C852 2329 852 1762 1311 1762"/><path d="M394 1749C852 1749 852 2053 1311 2053"/><path d="M394 1622C852 1622 852 1871 1311 1871"/><path d="M394 1988C852 1988 852 1623 1311 1623"/><path d="M394 2517C852 2517 852 1538 1311 1538"/><path d="M394 1677C852 1677 852 1649 1311 1649"/><path d="M394 1530C852 1530 852 2433 1311 2433"/><path d="M394 2468C852 2468 852 2532 1311 2532"/><path d="M394 2529C852 2529 852 1982 1311 1982"/><path d="M394 1551C852 1551 852 1528 1311 1528"/><path d="M394 2112C852 2112 852 1868 1311 1868"/><path d="M394 1696C852 1696 852 1514 1311 1514"/><path d="M394 1990C852 1990 852 1620 1311 1620"/><path d="M394 2294C852 2294 852 2456 1311 2456"/><path d="M394 2513C852 2513 852 2019 1311 2019"/><path d="M394 1787C852 1787 852 2279 1311 2279"/><path d="M394 1921C852 1921 852 1947 1311 1947"/><path d="M394 2056C852 2056 852 1711 1311 1711"/><path d="M394 1514C852 1514 852 1907 1311 1907"/><path d="M394 1996C852 1996 852 1499 1311 1499"/><path d="M394 1918C852 1918 852 2203 1311 2203"/><path d="M394 1675C852 1675 852 2181 1311 2181"/><path d="M394 2028C852 2028 852 2165 1311 2165"/><path d="M394 1706C852 1706 852 1617 1311 1617"/><path d="M394 2164C852 2164 852 2357 1311 2357"/><path d="M394 1922C852 1922 852 2548 1311 2548"/><path d="M394 2067C852 2067 852 1612 1311 1612"/><path d="M394 2320C852 2320 852 1629 1311 1629"/><path d="M394 1631C852 1631 852 1729 1311 1729"/><path d="M394 2133C852 2133 852 2217 1311 2217"/><path d="M394 2082C852 2082 852 2193 1311 2193"/><path d="M394 2366C852 2366 852 1793 1311 1793"/><path d="M394 2108C852 2108 852 2160 1311 2160"/><path d="M394 2013C852 2013 852 2039 1311 2039"/><path d="M394 2212C852 2212 852 1609 1311 1609"/><path d="M394 2502C852 2502 852 1654 1311 1654"/><path d="M394 1927C852 1927 852 1892 1311 1892"/><path d="M394 1964C852 1964 852 1770 1311 1770"/><path d="M394 2146C852 2146 852 2177 1311 2177"/><path d="M394 2108C852 2108 852 2354 1311 2354"/><path d="M394 1523C852 1523 852 2373 1311 2373"/><path d="M394 1772C852 1772 852 2392 1311 2392"/><path d="M394 1999C852 1999 852 1888 1311 1888"/><path d="M394 1972C852 1972 852 1572 1311 1572"/><path d="M394 2100C852 2100 852 2441 1311 2441"/><path d="M394 2099C852 2099 852 1863 1311 1863"/><path d="M394 2469C852 2469 852 2008 1311 2008"/><path d="M394 1592C852 1592 852 2158 1311 2158"/><path d="M394 1579C852 1579 852 1698 1311 1698"/><path d="M394 1935C852 1935 852 2495 1311 2495"/><path d="M394 1533C852 1533 852 2077 1311 2077"/><path d="M394 2236C852 2236 852 2001 1311 2001"/><path d="M394 2022C852 2022 852 1674 1311 1674"/><path d="M394 2072C852 2072 852 1633 1311 1633"/><path d="M394 1645C852 1645 852 1769 1311 1769"/><path d="M394 1924C852 1924 852 1652 1311 1652"/><path d="M394 2027C852 2027 852 1954 1311 1954"/><path d="M394 1575C852 1575 852 1918 1311 1918"/><path d="M394 1608C852 1608 852 2245 1311 2245"/><path d="M394 2369C852 2369 852 2458 1311 2458"/><path d="M394 2242C852 2242 852 1888 1311 1888"/><path d="M394 2233C852 2233 852 1588 1311 1588"/><path d="M394 1896C852 1896 852 1930 1311 1930"/><path d="M394 2379C852 2379 852 2246 1311 2246"/><path d="M394 1628C852 1628 852 2519 1311 2519"/><path d="M394 1572C852 1572 852 2065 1311 2065"/><path d="M394 2374C852 2374 852 1858 1311 1858"/><path d="M394 2140C852 2140 852 2391 1311 2391"/><path d="M394 2379C852 2379 852 1580 1311 1580"/><path d="M394 2460C852 2460 852 1615 1311 1615"/><path d="M394 1824C852 1824 852 2323 1311 2323"/><path d="M394 1847C852 1847 852 2047 1311 2047"/><path d="M394 1510C852 1510 852 1666 1311 1666"/><path d="M394 1525C852 1525 852 2478 1311 2478"/><path d="M394 1664C852 1664 852 1485 1311 1485"/><path d="M394 2418C852 2418 852 1998 1311 1998"/><path d="M394 1954C852 1954 852 2376 1311 2376"/><path d="M394 2206C852 2206 852 1576 1311 1576"/><path d="M394 1551C852 1551 852 2459 1311 2459"/><path d="M394 2310C852 2310 852 2426 1311 2426"/><path d="M394 1786C852 1786 852 1524 1311 1524"/><path d="M394 1901C852 1901 852 2281 1311 2281"/><path d="M394 2221C852 2221 852 2271 1311 2271"/><path d="M394 2201C852 2201 852 2387 1311 2387"/><path d="M394 1759C852 1759 852 2065 1311 2065"/><path d="M394 2083C852 2083 852 1836 1311 1836"/><path d="M394 2506C852 2506 852 2002 1311 2002"/><path d="M394 2254C852 2254 852 1481 1311 1481"/><path d="M394 1545C852 1545 852 1487 1311 1487"/><path d="M394 2067C852 2067 852 1599 1311 1599"/><path d="M394 2455C852 2455 852 2087 1311 2087"/><path d="M394 2454C852 2454 852 1572 1311 1572"/><path d="M394 1584C852 1584 852 2329 1311 2329"/><path d="M394 2210C852 2210 852 1804 1311 1804"/><path d="M394 1845C852 1845 852 1867 1311 1867"/><path d="M394 1840C852 1840 852 1825 1311 1825"/><path d="M394 1624C852 1624 852 1486 1311 1486"/><path d="M394 2539C852 2539 852 1861 1311 1861"/><path d="M394 2123C852 2123 852 1563 1311 1563"/><path d="M394 1665C852 1665 852 2405 1311 2405"/><path d="M394 1725C852 1725 852 2142 1311 2142"/><path d="M394 2242C852 2242 852 2298 1311 2298"/><path d="M394 2161C852 2161 852 1848 1311 1848"/><path d="M394 1896C852 1896 852 1706 1311 1706"/><path d="M394 1706C852 1706 852 1534 1311 1534"/><path d="M394 1689C852 1689 852 1529 1311 1529"/><path d="M394 1716C852 1716 852 1631 1311 1631"/><path d="M394 1669C852 1669 852 2495 1311 2495"/><path d="M394 1824C852 1824 852 1867 1311 1867"/><path d="M394 1576C852 1576 852 2161 1311 2161"/><path d="M394 1573C852 1573 852 1616 1311 1616"/><path d="M394 1617C852 1617 852 2142 1311 2142"/><path d="M394 2006C852 2006 852 2028 1311 2028"/><path d="M394 1587C852 1587 852 1573 1311 1573"/><path d="M394 1710C852 1710 852 1966 1311 1966"/><path d="M394 1551C852 1551 852 2500 1311 2500"/><path d="M394 1825C852 1825 852 1772 1311 1772"/><path d="M394 1795C852 1795 852 1705 1311 1705"/><path d="M394 2067C852 2067 852 1708 1311 1708"/><path d="M394 1694C852 1694 852 1983 1311 1983"/><path d="M394 1581C852 1581 852 2070 1311 2070"/><path d="M394 1483C852 1483 852 2170 1311 2170"/><path d="M394 2323C852 2323 852 1513 1311 1513"/><path d="M394 1658C852 1658 852 2335 1311 2335"/><path d="M394 2278C852 2278 852 2372 1311 2372"/><path d="M394 2364C852 2364 852 2320 1311 2320"/><path d="M394 1551C852 1551 852 2319 1311 2319"/><path d="M394 2117C852 2117 852 2376 1311 2376"/><path d="M394 1496C852 1496 852 1597 1311 1597"/><path d="M394 1658C852 1658 852 1856 1311 1856"/><path d="M394 2327C852 2327 852 2129 1311 2129"/><path d="M394 2493C852 2493 852 1966 1311 1966"/><path d="M394 1586C852 1586 852 2072 1311 2072"/><path d="M394 2077C852 2077 852 1959 1311 1959"/><path d="M394 2152C852 2152 852 1738 1311 1738"/><path d="M394 1652C852 1652 852 2096 1311 2096"/><path d="M394 2248C852 2248 852 1903 1311 1903"/><path d="M394 2159C852 2159 852 2221 1311 2221"/><path d="M394 1912C852 1912 852 2382 1311 2382"/><path d="M394 2015C852 2015 852 1840 1311 1840"/><path d="M394 1772C852 1772 852 2385 1311 2385"/><path d="M394 2441C852 2441 852 2243 1311 2243"/><path d="M394 1579C852 1579 852 2204 1311 2204"/><path d="M394 1713C852 1713 852 1970 1311 1970"/><path d="M394 2345C852 2345 852 1521 1311 1521"/><path d="M394 2330C852 2330 852 1702 1311 1702"/><path d="M394 1598C852 1598 852 1656 1311 1656"/><path d="M394 1496C852 1496 852 2313 1311 2313"/><path d="M394 1694C852 1694 852 2289 1311 2289"/><path d="M394 2332C852 2332 852 1989 1311 1989"/><path d="M394 1488C852 1488 852 2370 1311 2370"/><path d="M394 2214C852 2214 852 2460 1311 2460"/><path d="M394 1899C852 1899 852 2324 1311 2324"/><path d="M394 2462C852 2462 852 1480 1311 1480"/><path d="M394 2278C852 2278 852 1504 1311 1504"/><path d="M394 2462C852 2462 852 2265 1311 2265"/><path d="M394 1623C852 1623 852 2457 1311 2457"/><path d="M394 2479C852 2479 852 2297 1311 2297"/><path d="M394 1651C852 1651 852 1516 1311 1516"/><path d="M394 2478C852 2478 852 2035 1311 2035"/><path d="M394 2216C852 2216 852 1772 1311 1772"/><path d="M394 2372C852 2372 852 1511 1311 1511"/><path d="M394 1784C852 1784 852 1887 1311 1887"/><path d="M394 2167C852 2167 852 1985 1311 1985"/><path d="M394 2413C852 2413 852 2512 1311 2512"/><path d="M394 2321C852 2321 852 1619 1311 1619"/><path d="M394 1784C852 1784 852 2526 1311 2526"/><path d="M394 2239C852 2239 852 2089 1311 2089"/><path d="M394 1788C852 1788 852 2516 1311 2516"/><path d="M394 1956C852 1956 852 1843 1311 1843"/><path d="M394 2061C852 2061 852 1849 1311 1849"/><path d="M394 2222C852 2222 852 2205 1311 2205"/><path d="M394 2516C852 2516 852 1689 1311 1689"/><path d="M394 2360C852 2360 852 2124 1311 2124"/><path d="M394 2524C852 2524 852 1620 1311 1620"/><path d="M394 2343C852 2343 852 2285 1311 2285"/><path d="M394 2481C852 2481 852 1710 1311 1710"/><path d="M394 1647C852 1647 852 1721 1311 1721"/><path d="M394 2321C852 2321 852 2250 1311 2250"/><path d="M394 1516C852 1516 852 2184 1311 2184"/><path d="M394 1900C852 1900 852 1695 1311 1695"/><path d="M394 2057C852 2057 852 1839 1311 1839"/><path d="M394 2399C852 2399 852 2503 1311 2503"/><path d="M394 2522C852 2522 852 2006 1311 2006"/><path d="M394 2128C852 2128 852 1884 1311 1884"/><path d="M394 1497C852 1497 852 2175 1311 2175"/><path d="M394 1632C852 1632 852 2156 1311 2156"/><path d="M394 2448C852 2448 852 1656 1311 1656"/><path d="M394 2412C852 2412 852 2411 1311 2411"/><path d="M394 2548C852 2548 852 1723 1311 1723"/><path d="M394 1838C852 1838 852 2235 1311 2235"/><path d="M394 1899C852 1899 852 1642 1311 1642"/><path d="M394 1785C852 1785 852 1624 1311 1624"/><path d="M394 2526C852 2526 852 2140 1311 2140"/><path d="M394 1894C852 1894 852 2132 1311 2132"/><path d="M394 2399C852 2399 852 1496 1311 1496"/><path d="M394 2308C852 2308 852 1638 1311 1638"/><path d="M394 1685C852 1685 852 2281 1311 2281"/><path d="M394 2146C852 2146 852 2450 1311 2450"/><path d="M394 2220C852 2220 852 1483 1311 1483"/><path d="M394 1767C852 1767 852 2449 1311 2449"/><path d="M394 2168C852 2168 852 2079 1311 2079"/><path d="M394 2134C852 2134 852 1648 1311 1648"/><path d="M394 2064C852 2064 852 2501 1311 2501"/><path d="M394 2469C852 2469 852 1567 1311 1567"/><path d="M394 2291C852 2291 852 1638 1311 1638"/><path d="M394 1528C852 1528 852 2376 1311 2376"/><path d="M394 2208C852 2208 852 1535 1311 1535"/><path d="M394 1856C852 1856 852 2392 1311 2392"/><path d="M394 1564C852 1564 852 1791 1311 1791"/><path d="M394 2452C852 2452 852 2136 1311 2136"/><path d="M394 2447C852 2447 852 2111 1311 2111"/><path d="M394 2030C852 2030 852 1937 1311 1937"/><path d="M394 1641C852 1641 852 1597 1311 1597"/><path d="M394 2440C852 2440 852 1862 1311 1862"/><path d="M394 1717C852 1717 852 2198 1311 2198"/><path d="M394 1691C852 1691 852 1757 1311 1757"/><path d="M394 1527C852 1527 852 1609 1311 1609"/><path d="M394 2267C852 2267 852 2275 1311 2275"/><path d="M394 1527C852 1527 852 2246 1311 2246"/><path d="M394 1766C852 1766 852 1661 1311 1661"/><path d="M394 1715C852 1715 852 1642 1311 1642"/><path d="M394 1820C852 1820 852 2454 1311 2454"/><path d="M394 2519C852 2519 852 2170 1311 2170"/><path d="M394 2049C852 2049 852 1774 1311 1774"/><path d="M394 2034C852 2034 852 1745 1311 1745"/><path d="M394 2210C852 2210 852 2261 1311 2261"/><path d="M394 1701C852 1701 852 1729 1311 1729"/><path d="M394 2243C852 2243 852 2440 1311 2440"/><path d="M394 1937C852 1937 852 1685 1311 1685"/><path d="M394 1899C852 1899 852 1678 1311 1678"/><path d="M394 1490C852 1490 852 1877 1311 1877"/><path d="M394 1794C852 1794 852 1693 1311 1693"/><path d="M394 2537C852 2537 852 1736 1311 1736"/><path d="M394 1883C852 1883 852 1519 1311 1519"/><path d="M394 2142C852 2142 852 2248 1311 2248"/><path d="M394 1914C852 1914 852 1728 1311 1728"/><path d="M394 2324C852 2324 852 2488 1311 2488"/><path d="M394 1717C852 1717 852 1953 1311 1953"/><path d="M394 1821C852 1821 852 1614 1311 1614"/><path d="M394 2071C852 2071 852 2136 1311 2136"/><path d="M394 1780C852 1780 852 2278 1311 2278"/><path d="M394 2148C852 2148 852 2301 1311 2301"/><path d="M394 2480C852 2480 852 1646 1311 1646"/><path d="M394 1817C852 1817 852 2345 1311 2345"/><path d="M394 2336C852 2336 852 1751 1311 1751"/><path d="M394 2150C852 2150 852 1613 1311 1613"/><path d="M394 2323C852 2323 852 2206 1311 2206"/><path d="M394 1922C852 1922 852 2288 1311 2288"/><path d="M394 1927C852 1927 852 2143 1311 2143"/><path d="M394 2106C852 2106 852 2048 1311 2048"/><path d="M394 1647C852 1647 852 1685 1311 1685"/><path d="M394 2547C852 2547 852 1799 1311 1799"/><path d="M394 2035C852 2035 852 2075 1311 2075"/><path d="M394 1935C852 1935 852 2486 1311 2486"/><path d="M394 2022C852 2022 852 2356 1311 2356"/><path d="M394 1916C852 1916 852 2120 1311 2120"/><path d="M394 2494C852 2494 852 2398 1311 2398"/><path d="M394 2486C852 2486 852 2373 1311 2373"/><path d="M394 1835C852 1835 852 2124 1311 2124"/><path d="M394 1632C852 1632 852 2070 1311 2070"/><path d="M394 1886C852 1886 852 1492 1311 1492"/><path d="M394 2430C852 2430 852 1612 1311 1612"/><path d="M394 2122C852 2122 852 2468 1311 2468"/><path d="M394 1956C852 1956 852 1974 1311 1974"/><path d="M394 2548C852 2548 852 1957 1311 1957"/><path d="M394 1528C852 1528 852 2377 1311 2377"/><path d="M394 1922C852 1922 852 2391 1311 2391"/><path d="M394 1507C852 1507 852 2383 1311 2383"/><path d="M394 1602C852 1602 852 2121 1311 2121"/><path d="M394 1666C852 1666 852 2078 1311 2078"/><path d="M394 2394C852 2394 852 1972 1311 1972"/><path d="M394 1632C852 1632 852 2359 1311 2359"/><path d="M394 1583C852 1583 852 2301 1311 2301"/><path d="M394 1948C852 1948 852 2038 1311 2038"/><path d="M394 2536C852 2536 852 1830 1311 1830"/><path d="M394 2212C852 2212 852 2213 1311 2213"/><path d="M394 2205C852 2205 852 1959 1311 1959"/><path d="M394 1844C852 1844 852 1738 1311 1738"/><path d="M394 1616C852 1616 852 1827 1311 1827"/><path d="M394 1981C852 1981 852 2458 1311 2458"/><path d="M394 2542C852 2542 852 1505 1311 1505"/><path d="M394 2054C852 2054 852 2012 1311 2012"/><path d="M394 2494C852 2494 852 2446 1311 2446"/><path d="M394 1772C852 1772 852 1732 1311 1732"/><path d="M394 1956C852 1956 852 2411 1311 2411"/><path d="M394 2295C852 2295 852 2093 1311 2093"/><path d="M394 2538C852 2538 852 1489 1311 1489"/><path d="M394 2443C852 2443 852 1504 1311 1504"/><path d="M394 1806C852 1806 852 2043 1311 2043"/><path d="M394 2029C852 2029 852 2432 1311 2432"/><path d="M394 2507C852 2507 852 1588 1311 1588"/><path d="M394 2213C852 2213 852 1919 1311 1919"/><path d="M394 1768C852 1768 852 1846 1311 1846"/><path d="M394 1949C852 1949 852 2117 1311 2117"/><path d="M394 2013C852 2013 852 2106 1311 2106"/><path d="M394 1634C852 1634 852 2028 1311 2028"/><path d="M394 2279C852 2279 852 2174 1311 2174"/><path d="M394 2335C852 2335 852 2405 1311 2405"/><path d="M394 1870C852 1870 852 1853 1311 1853"/><path d="M394 2264C852 2264 852 1552 1311 1552"/><path d="M394 1956C852 1956 852 2101 1311 2101"/><path d="M394 1575C852 1575 852 2135 1311 2135"/><path d="M394 1700C852 1700 852 2532 1311 2532"/><path d="M394 2170C852 2170 852 2536 1311 2536"/><path d="M394 2537C852 2537 852 2364 1311 2364"/><path d="M394 1850C852 1850 852 2327 1311 2327"/><path d="M394 1503C852 1503 852 2086 1311 2086"/><path d="M394 1905C852 1905 852 2315 1311 2315"/><path d="M394 2280C852 2280 852 2500 1311 2500"/><path d="M394 1981C852 1981 852 1523 1311 1523"/><path d="M394 1571C852 1571 852 2176 1311 2176"/><path d="M394 1632C852 1632 852 2125 1311 2125"/><path d="M394 1675C852 1675 852 1805 1311 1805"/><path d="M394 1736C852 1736 852 1875 1311 1875"/><path d="M394 2406C852 2406 852 2467 1311 2467"/><path d="M394 1583C852 1583 852 1671 1311 1671"/><path d="M394 1819C852 1819 852 1634 1311 1634"/><path d="M394 1847C852 1847 852 1643 1311 1643"/><path d="M394 1626C852 1626 852 1554 1311 1554"/><path d="M394 1953C852 1953 852 2147 1311 2147"/><path d="M394 1720C852 1720 852 2255 1311 2255"/><path d="M394 2423C852 2423 852 1638 1311 1638"/><path d="M394 2097C852 2097 852 2518 1311 2518"/><path d="M394 1776C852 1776 852 2510 1311 2510"/><path d="M394 2264C852 2264 852 2001 1311 2001"/><path d="M394 2125C852 2125 852 1850 1311 1850"/><path d="M394 2505C852 2505 852 2258 1311 2258"/><path d="M394 2422C852 2422 852 2395 1311 2395"/><path d="M394 2461C852 2461 852 1894 1311 1894"/><path d="M394 1833C852 1833 852 2249 1311 2249"/><path d="M394 2483C852 2483 852 1843 1311 1843"/><path d="M394 2262C852 2262 852 2197 1311 2197"/><path d="M394 2390C852 2390 852 1692 1311 1692"/><path d="M394 2530C852 2530 852 2061 1311 2061"/><path d="M394 2095C852 2095 852 1635 1311 1635"/><path d="M394 1665C852 1665 852 1484 1311 1484"/><path d="M394 1557C852 1557 852 1736 1311 1736"/><path d="M394 1883C852 1883 852 1625 1311 1625"/><path d="M394 1878C852 1878 852 2118 1311 2118"/><path d="M394 2505C852 2505 852 2277 1311 2277"/><path d="M394 2109C852 2109 852 1647 1311 1647"/><path d="M394 2091C852 2091 852 2301 1311 2301"/><path d="M394 2435C852 2435 852 1497 1311 1497"/><path d="M394 2528C852 2528 852 2448 1311 2448"/><path d="M394 2322C852 2322 852 2041 1311 2041"/><path d="M394 1598C852 1598 852 2258 1311 2258"/><path d="M394 1767C852 1767 852 1896 1311 1896"/><path d="M394 1924C852 1924 852 2306 1311 2306"/><path d="M394 2192C852 2192 852 2015 1311 2015"/><path d="M394 2192C852 2192 852 2101 1311 2101"/><path d="M394 2267C852 2267 852 2166 1311 2166"/><path d="M394 2060C852 2060 852 1871 1311 1871"/><path d="M394 1969C852 1969 852 1699 1311 1699"/><path d="M394 1682C852 1682 852 2125 1311 2125"/><path d="M394 1688C852 1688 852 2094 1311 2094"/><path d="M394 2450C852 2450 852 1560 1311 1560"/><path d="M394 1693C852 1693 852 2402 1311 2402"/><path d="M394 1888C852 1888 852 1586 1311 1586"/><path d="M394 2047C852 2047 852 1653 1311 1653"/><path d="M394 2541C852 2541 852 2551 1311 2551"/><path d="M394 2271C852 2271 852 2241 1311 2241"/><path d="M394 2417C852 2417 852 2094 1311 2094"/><path d="M394 2025C852 2025 852 2133 1311 2133"/><path d="M394 1592C852 1592 852 1791 1311 1791"/><path d="M394 2503C852 2503 852 1911 1311 1911"/><path d="M394 2134C852 2134 852 1580 1311 1580"/><path d="M394 2406C852 2406 852 1612 1311 1612"/><path d="M394 1760C852 1760 852 1762 1311 1762"/><path d="M394 1860C852 1860 852 1750 1311 1750"/><path d="M394 1989C852 1989 852 2474 1311 2474"/><path d="M394 1685C852 1685 852 2380 1311 2380"/><path d="M394 1845C852 1845 852 1633 1311 1633"/><path d="M394 1546C852 1546 852 2076 1311 2076"/><path d="M394 2131C852 2131 852 1830 1311 1830"/><path d="M394 2241C852 2241 852 2440 1311 2440"/><path d="M394 2172C852 2172 852 2450 1311 2450"/><path d="M394 2521C852 2521 852 1765 1311 1765"/><path d="M394 2000C852 2000 852 2412 1311 2412"/><path d="M394 1544C852 1544 852 2198 1311 2198"/><path d="M394 2248C852 2248 852 2066 1311 2066"/><path d="M394 2415C852 2415 852 2518 1311 2518"/><path d="M394 1863C852 1863 852 1895 1311 1895"/><path d="M394 2243C852 2243 852 1829 1311 1829"/><path d="M394 2288C852 2288 852 1729 1311 1729"/><path d="M394 2099C852 2099 852 1748 1311 1748"/><path d="M394 1557C852 1557 852 2008 1311 2008"/><path d="M394 2001C852 2001 852 2040 1311 2040"/><path d="M394 2308C852 2308 852 2184 1311 2184"/><path d="M394 2021C852 2021 852 1896 1311 1896"/><path d="M394 2039C852 2039 852 1492 1311 1492"/><path d="M394 2181C852 2181 852 2058 1311 2058"/><path d="M394 1977C852 1977 852 1583 1311 1583"/><path d="M394 1720C852 1720 852 1622 1311 1622"/><path d="M394 2296C852 2296 852 2472 1311 2472"/><path d="M394 2057C852 2057 852 2423 1311 2423"/><path d="M394 2345C852 2345 852 1993 1311 1993"/><path d="M394 1954C852 1954 852 1598 1311 1598"/><path d="M394 1551C852 1551 852 1874 1311 1874"/><path d="M394 1720C852 1720 852 2354 1311 2354"/><path d="M394 2510C852 2510 852 1983 1311 1983"/><path d="M394 1978C852 1978 852 2447 1311 2447"/><path d="M394 1513C852 1513 852 2336 1311 2336"/><path d="M394 1723C852 1723 852 2406 1311 2406"/><path d="M394 1616C852 1616 852 2283 1311 2283"/><path d="M394 2394C852 2394 852 2522 1311 2522"/><path d="M394 2111C852 2111 852 2510 1311 2510"/><path d="M394 1593C852 1593 852 2120 1311 2120"/><path d="M394 2257C852 2257 852 1861 1311 1861"/><path d="M394 1613C852 1613 852 1865 1311 1865"/><path d="M394 1524C852 1524 852 2342 1311 2342"/><path d="M394 2106C852 2106 852 1933 1311 1933"/><path d="M394 1483C852 1483 852 2037 1311 2037"/><path d="M394 1649C852 1649 852 2154 1311 2154"/><path d="M394 1881C852 1881 852 2420 1311 2420"/><path d="M394 2438C852 2438 852 2462 1311 2462"/><path d="M394 1830C852 1830 852 1504 1311 1504"/><path d="M394 1703C852 1703 852 2247 1311 2247"/><path d="M394 2306C852 2306 852 1723 1311 1723"/><path d="M394 1746C852 1746 852 1558 1311 1558"/><path d="M394 2393C852 2393 852 1519 1311 1519"/><path d="M394 2146C852 2146 852 1802 1311 1802"/><path d="M394 2325C852 2325 852 2062 1311 2062"/><path d="M394 1778C852 1778 852 1705 1311 1705"/><path d="M394 2224C852 2224 852 1488 1311 1488"/><path d="M394 1510C852 1510 852 2400 1311 2400"/><path d="M394 2032C852 2032 852 2278 1311 2278"/><path d="M394 2479C852 2479 852 1763 1311 1763"/><path d="M394 1928C852 1928 852 2195 1311 2195"/><path d="M394 2332C852 2332 852 1603 1311 1603"/><path d="M394 2343C852 2343 852 1668 1311 1668"/><path d="M394 1543C852 1543 852 1602 1311 1602"/><path d="M394 2245C852 2245 852 2334 1311 2334"/><path d="M394 1907C852 1907 852 2021 1311 2021"/><path d="M394 2084C852 2084 852 1813 1311 1813"/><path d="M394 2337C852 2337 852 1591 1311 1591"/><path d="M394 2546C852 2546 852 1843 1311 1843"/><path d="M394 2006C852 2006 852 2014 1311 2014"/><path d="M394 2439C852 2439 852 1928 1311 1928"/><path d="M394 1588C852 1588 852 2202 1311 2202"/><path d="M394 1785C852 1785 852 1549 1311 1549"/><path d="M394 2117C852 2117 852 2035 1311 2035"/><path d="M394 2250C852 2250 852 1823 1311 1823"/><path d="M394 2043C852 2043 852 1998 1311 1998"/><path d="M394 1765C852 1765 852 2162 1311 2162"/><path d="M394 2484C852 2484 852 1856 1311 1856"/><path d="M394 2345C852 2345 852 1640 1311 1640"/><path d="M394 1761C852 1761 852 2251 1311 2251"/><path d="M394 1846C852 1846 852 1811 1311 1811"/><path d="M394 2331C852 2331 852 1842 1311 1842"/><path d="M394 1576C852 1576 852 2371 1311 2371"/><path d="M394 2454C852 2454 852 1669 1311 1669"/><path d="M394 1523C852 1523 852 2139 1311 2139"/><path d="M394 2121C852 2121 852 1687 1311 1687"/><path d="M394 1560C852 1560 852 1718 1311 1718"/><path d="M394 1897C852 1897 852 2258 1311 2258"/><path d="M394 2024C852 2024 852 2075 1311 2075"/><path d="M394 1881C852 1881 852 1512 1311 1512"/><path d="M394 1559C852 1559 852 1818 1311 1818"/><path d="M394 2244C852 2244 852 2479 1311 2479"/><path d="M394 1856C852 1856 852 2421 1311 2421"/><path d="M394 2542C852 2542 852 2475 1311 2475"/><path d="M394 1735C852 1735 852 2159 1311 2159"/><path d="M394 2476C852 2476 852 2505 1311 2505"/><path d="M394 2316C852 2316 852 2045 1311 2045"/><path d="M394 1920C852 1920 852 2533 1311 2533"/><path d="M394 2134C852 2134 852 1699 1311 1699"/><path d="M394 2108C852 2108 852 1962 1311 1962"/><path d="M394 2277C852 2277 852 1783 1311 1783"/><path d="M394 1536C852 1536 852 1869 1311 1869"/><path d="M394 1905C852 1905 852 1666 1311 1666"/><path d="M394 2173C852 2173 852 2341 1311 2341"/><path d="M394 2344C852 2344 852 1816 1311 1816"/><path d="M394 1967C852 1967 852 1536 1311 1536"/><path d="M394 2183C852 2183 852 2533 1311 2533"/><path d="M394 1740C852 1740 852 1837 1311 1837"/><path d="M394 1579C852 1579 852 2465 1311 2465"/><path d="M394 2448C852 2448 852 1815 1311 1815"/><path d="M394 1667C852 1667 852 1492 1311 1492"/><path d="M394 1956C852 1956 852 1584 1311 1584"/><path d="M394 2095C852 2095 852 1708 1311 1708"/><path d="M394 1869C852 1869 852 1674 1311 1674"/><path d="M394 1956C852 1956 852 2431 1311 2431"/><path d="M394 1844C852 1844 852 2070 1311 2070"/><path d="M394 2308C852 2308 852 2207 1311 2207"/><path d="M394 1527C852 1527 852 2433 1311 2433"/><path d="M394 2248C852 2248 852 1993 1311 1993"/><path d="M394 1946C852 1946 852 1728 1311 1728"/><path d="M394 1489C852 1489 852 1913 1311 1913"/><path d="M394 2524C852 2524 852 2281 1311 2281"/><path d="M394 1723C852 1723 852 2365 1311 2365"/><path d="M394 2230C852 2230 852 2224 1311 2224"/><path d="M394 2357C852 2357 852 2182 1311 2182"/><path d="M394 1526C852 1526 852 2320 1311 2320"/><path d="M394 1665C852 1665 852 2332 1311 2332"/><path d="M394 2024C852 2024 852 2517 1311 2517"/><path d="M394 1929C852 1929 852 2483 1311 2483"/><path d="M394 2404C852 2404 852 1590 1311 1590"/><path d="M394 1707C852 1707 852 1495 1311 1495"/><path d="M394 1510C852 1510 852 1524 1311 1524"/><path d="M394 1764C852 1764 852 1653 1311 1653"/><path d="M394 1791C852 1791 852 1824 1311 1824"/><path d="M394 2307C852 2307 852 1602 1311 1602"/><path d="M394 1988C852 1988 852 1552 1311 1552"/><path d="M394 2542C852 2542 852 1972 1311 1972"/><path d="M394 1873C852 1873 852 2454 1311 2454"/><path d="M394 1816C852 1816 852 1709 1311 1709"/><path d="M394 2148C852 2148 852 1940 1311 1940"/><path d="M394 2192C852 2192 852 1959 1311 1959"/><path d="M394 1745C852 1745 852 1848 1311 1848"/><path d="M394 1656C852 1656 852 2255 1311 2255"/><path d="M394 1868C852 1868 852 2548 1311 2548"/><path d="M394 1864C852 1864 852 2177 1311 2177"/><path d="M394 1663C852 1663 852 1614 1311 1614"/><path d="M394 2547C852 2547 852 2324 1311 2324"/><path d="M394 2492C852 2492 852 1626 1311 1626"/><path d="M394 1620C852 1620 852 2172 1311 2172"/><path d="M394 1776C852 1776 852 2238 1311 2238"/><path d="M394 2480C852 2480 852 2250 1311 2250"/><path d="M394 1609C852 1609 852 2252 1311 2252"/><path d="M394 2308C852 2308 852 1945 1311 1945"/><path d="M394 1695C852 1695 852 2350 1311 2350"/><path d="M394 2092C852 2092 852 2230 1311 2230"/><path d="M394 1862C852 1862 852 1934 1311 1934"/><path d="M394 1952C852 1952 852 2538 1311 2538"/><path d="M394 1785C852 1785 852 1807 1311 1807"/><path d="M394 2155C852 2155 852 2441 1311 2441"/><path d="M394 1776C852 1776 852 2276 1311 2276"/><path d="M394 1984C852 1984 852 1733 1311 1733"/><path d="M394 1848C852 1848 852 2193 1311 2193"/><path d="M394 1846C852 1846 852 1739 1311 1739"/><path d="M394 1704C852 1704 852 2277 1311 2277"/><path d="M394 2379C852 2379 852 1832 1311 1832"/><path d="M394 1839C852 1839 852 2112 1311 2112"/><path d="M394 2053C852 2053 852 2189 1311 2189"/><path d="M394 2481C852 2481 852 2340 1311 2340"/><path d="M394 2478C852 2478 852 1700 1311 1700"/><path d="M394 2253C852 2253 852 1722 1311 1722"/><path d="M394 1677C852 1677 852 2255 1311 2255"/><path d="M394 1692C852 1692 852 1978 1311 1978"/><path d="M394 1971C852 1971 852 2154 1311 2154"/><path d="M394 2071C852 2071 852 2143 1311 2143"/><path d="M394 2503C852 2503 852 2271 1311 2271"/><path d="M394 2242C852 2242 852 2101 1311 2101"/><path d="M394 2401C852 2401 852 1930 1311 1930"/><path d="M394 1672C852 1672 852 2443 1311 2443"/><path d="M394 2400C852 2400 852 1686 1311 1686"/><path d="M394 2427C852 2427 852 2228 1311 2228"/><path d="M394 2465C852 2465 852 2384 1311 2384"/><path d="M394 2487C852 2487 852 2158 1311 2158"/><path d="M394 2104C852 2104 852 1626 1311 1626"/><path d="M394 1501C852 1501 852 1625 1311 1625"/><path d="M394 1931C852 1931 852 2255 1311 2255"/><path d="M394 2139C852 2139 852 2101 1311 2101"/><path d="M394 1604C852 1604 852 1606 1311 1606"/><path d="M394 2405C852 2405 852 2193 1311 2193"/><path d="M394 1781C852 1781 852 2115 1311 2115"/><path d="M394 1941C852 1941 852 1808 1311 1808"/><path d="M394 2345C852 2345 852 2407 1311 2407"/><path d="M394 2527C852 2527 852 2074 1311 2074"/><path d="M394 2039C852 2039 852 1637 1311 1637"/><path d="M394 2316C852 2316 852 1509 1311 1509"/><path d="M394 1807C852 1807 852 1755 1311 1755"/><path d="M394 1803C852 1803 852 1601 1311 1601"/><path d="M394 1761C852 1761 852 1653 1311 1653"/><path d="M394 2230C852 2230 852 2226 1311 2226"/><path d="M394 1580C852 1580 852 1493 1311 1493"/><path d="M394 1978C852 1978 852 1511 1311 1511"/><path d="M394 2169C852 2169 852 1916 1311 1916"/><path d="M394 1744C852 1744 852 2295 1311 2295"/><path d="M394 2180C852 2180 852 2494 1311 2494"/><path d="M394 2210C852 2210 852 1869 1311 1869"/><path d="M394 1834C852 1834 852 1619 1311 1619"/><path d="M394 2210C852 2210 852 1748 1311 1748"/><path d="M394 2388C852 2388 852 2330 1311 2330"/><path d="M394 1770C852 1770 852 1965 1311 1965"/><path d="M394 1902C852 1902 852 1866 1311 1866"/><path d="M394 1985C852 1985 852 2388 1311 2388"/><path d="M394 1934C852 1934 852 2506 1311 2506"/><path d="M394 2202C852 2202 852 1914 1311 1914"/><path d="M394 2091C852 2091 852 2331 1311 2331"/><path d="M394 1778C852 1778 852 2198 1311 2198"/></g></svg>
<div class="t" style="left:272.8px;top:2540.8px;font-size:22.40px;color:#5a606b;transform:scaleX(1.0000);-webkit-text-stroke:0.15px #5a606b;">0</div>
<div class="t" style="left:229.2px;top:2396.5px;font-size:22.40px;color:#5a606b;transform:scaleX(1.0000);-webkit-text-stroke:0.15px #5a606b;">1,000</div>
<div class="t" style="left:229.2px;top:2252.2px;font-size:22.40px;color:#5a606b;transform:scaleX(1.0000);-webkit-text-stroke:0.15px #5a606b;">2,000</div>
<div class="t" style="left:229.2px;top:2107.9px;font-size:22.40px;color:#5a606b;transform:scaleX(1.0000);-webkit-text-stroke:0.15px #5a606b;">3,000</div>
<div class="t" style="left:229.2px;top:1963.6px;font-size:22.40px;color:#5a606b;transform:scaleX(1.0000);-webkit-text-stroke:0.15px #5a606b;">4,000</div>
<div class="t" style="left:229.2px;top:1819.3px;font-size:22.40px;color:#5a606b;transform:scaleX(1.0000);-webkit-text-stroke:0.15px #5a606b;">5,000</div>
<div class="t" style="left:229.2px;top:1675.0px;font-size:22.40px;color:#5a606b;transform:scaleX(1.0000);-webkit-text-stroke:0.15px #5a606b;">6,000</div>
<div class="t" style="left:229.2px;top:1530.7px;font-size:22.40px;color:#5a606b;transform:scaleX(1.0000);-webkit-text-stroke:0.15px #5a606b;">7,000</div>
<div class="t" style="left:339.3px;top:2566.3px;font-size:23.26px;color:#535966;transform:scaleX(1.0000);font-weight:700;">Source</div>
<div class="t" style="left:1285.0px;top:2566.3px;font-size:23.26px;color:#535966;transform:scaleX(1.0000);font-weight:700;">Destination</div>
<div class="t" style="left:1460.2px;top:1409.5px;font-size:31.10px;color:#1a1c21;transform:scaleX(0.8747);font-weight:700;">Top Talkers by Heat Map</div>
<svg class="r" style="left:0;top:0" width="2916" height="2642"><rect x="1633.0" y="1485.8" width="140.2" height="179.6" fill="#67ae9f" stroke="#578f82" stroke-width="1.5"/><rect x="1773.2" y="1665.4" width="140.2" height="179.6" fill="#67ae9f" stroke="#578f82" stroke-width="1.5"/><rect x="1913.3" y="1845.0" width="140.2" height="179.6" fill="#67ae9f" stroke="#578f82" stroke-width="1.5"/><rect x="2053.4" y="2024.5" width="140.2" height="179.6" fill="#67ae9f" stroke="#578f82" stroke-width="1.5"/><rect x="2193.6" y="2204.1" width="140.2" height="179.6" fill="#67ae9f" stroke="#578f82" stroke-width="1.5"/><line x1="1633" y1="1485" x2="1633" y2="2393" stroke="#d5d8dc" stroke-width="2"/><line x1="1622" y1="2384" x2="2334" y2="2384" stroke="#d5d8dc" stroke-width="2"/><line x1="1622" y1="1486" x2="1633" y2="1486" stroke="#d5d8dc" stroke-width="2"/><line x1="1622" y1="1575.6" x2="1633" y2="1575.6" stroke="#d5d8dc" stroke-width="2"/><line x1="1622" y1="1755.2" x2="1633" y2="1755.2" stroke="#d5d8dc" stroke-width="2"/><line x1="1622" y1="1934.8" x2="1633" y2="1934.8" stroke="#d5d8dc" stroke-width="2"/><line x1="1622" y1="2114.3" x2="1633" y2="2114.3" stroke="#d5d8dc" stroke-width="2"/><line x1="1622" y1="2293.9" x2="1633" y2="2293.9" stroke="#d5d8dc" stroke-width="2"/><line x1="1633.0" y1="2384" x2="1633.0" y2="2393" stroke="#d5d8dc" stroke-width="2"/><line x1="1703.0" y1="2384" x2="1703.0" y2="2393" stroke="#d5d8dc" stroke-width="2"/><line x1="1843.2" y1="2384" x2="1843.2" y2="2393" stroke="#d5d8dc" stroke-width="2"/><line x1="1983.3" y1="2384" x2="1983.3" y2="2393" stroke="#d5d8dc" stroke-width="2"/><line x1="2123.4" y1="2384" x2="2123.4" y2="2393" stroke="#d5d8dc" stroke-width="2"/><line x1="2263.6" y1="2384" x2="2263.6" y2="2393" stroke="#d5d8dc" stroke-width="2"/><line x1="2334.0" y1="2384" x2="2334.0" y2="2393" stroke="#d5d8dc" stroke-width="2"/><circle cx="2361.7" cy="1489.5" r="12" fill="#f7f9f9"/><circle cx="2361.7" cy="1537.6" r="12" fill="#cde5df"/><circle cx="2361.7" cy="1585.5" r="12" fill="#9acbbf"/><circle cx="2361.7" cy="1634" r="12" fill="#67ae9f"/></svg>
<div class="t" style="left:1485.6px;top:1564.7px;font-size:21.66px;color:#5a606b;transform:scaleX(1.0325);-webkit-text-stroke:0.15px #5a606b;">235.69.43.65</div>
<div class="t" style="left:1491.7px;top:1744.2px;font-size:21.66px;color:#5a606b;transform:scaleX(0.9839);-webkit-text-stroke:0.15px #5a606b;">67.212.46.53</div>
<div class="t" style="left:1474.0px;top:1923.8px;font-size:21.66px;color:#5a606b;transform:scaleX(0.9434);-webkit-text-stroke:0.15px #5a606b;">161.90.199.225</div>
<div class="t" style="left:1487.9px;top:2103.4px;font-size:21.66px;color:#5a606b;transform:scaleX(0.9254);-webkit-text-stroke:0.15px #5a606b;">14.111.53.225</div>
<div class="t" style="left:1472.0px;top:2283.0px;font-size:21.66px;color:#5a606b;transform:scaleX(0.9575);-webkit-text-stroke:0.15px #5a606b;">216.45.155.108</div>
<div class="t" style="left:2385.0px;top:1477.5px;font-size:23.98px;color:#343741;transform:scaleX(1.0959);-webkit-text-stroke:0.45px #343741;">0 - 0.25</div>
<div class="t" style="left:2385.0px;top:1525.6px;font-size:23.98px;color:#343741;transform:scaleX(1.0766);-webkit-text-stroke:0.45px #343741;">0.25 - 0.5</div>
<div class="t" style="left:2385.0px;top:1573.5px;font-size:23.98px;color:#343741;transform:scaleX(1.0565);-webkit-text-stroke:0.45px #343741;">0.5 - 0.75</div>
<div class="t" style="left:2385.1px;top:1622.0px;font-size:23.98px;color:#343741;transform:scaleX(0.9467);-webkit-text-stroke:0.45px #343741;">0.75 - 1</div>
<div class="r" style="left:1710.4px;top:2512.0px;width:0;height:0;"><div class="t" style="left:0;top:0;font-size:21.6px;color:#5a606b;transform-origin:0 0;transform:rotate(-90deg) scaleX(0.9761) translate(-0.8px,-18.3px);">0.120.46.97</div></div>
<div class="r" style="left:1850.6px;top:2525.3px;width:0;height:0;"><div class="t" style="left:0;top:0;font-size:21.6px;color:#5a606b;transform-origin:0 0;transform:rotate(-90deg) scaleX(0.9869) translate(-0.8px,-18.3px);">0.124.229.30</div></div>
<div class="r" style="left:1990.7px;top:2522.0px;width:0;height:0;"><div class="t" style="left:0;top:0;font-size:21.6px;color:#5a606b;transform-origin:0 0;transform:rotate(-90deg) scaleX(0.9587) translate(-0.8px,-18.3px);">0.126.243.14</div></div>
<div class="r" style="left:2130.8px;top:2527.0px;width:0;height:0;"><div class="t" style="left:0;top:0;font-size:21.6px;color:#5a606b;transform-origin:0 0;transform:rotate(-90deg) scaleX(0.9139) translate(-0.8px,-18.3px);">0.128.212.191</div></div>
<div class="r" style="left:2271.0px;top:2537.0px;width:0;height:0;"><div class="t" style="left:0;top:0;font-size:21.6px;color:#5a606b;transform-origin:0 0;transform:rotate(-90deg) scaleX(0.9857) translate(-0.8px,-18.3px);">0.142.254.210</div></div>
<div class="t" style="left:1866.0px;top:2547.0px;font-size:25.29px;color:#535966;transform:scaleX(0.9572);font-weight:700;">Destination Address</div>
<div class="r" style="left:76px;top:2572px;width:2840px;height:10px;background:#f4f4f4;"></div>
<div class="r" style="left:0px;top:2582px;width:2916px;height:60px;background:#232f3e;border-top:2px solid #414a56;box-sizing:border-box;"></div>
<svg class="r" style="left:0px;top:2622px;" width="20" height="20" viewBox="0 0 20 20"><path d="M0 0 Q0 20 20 20 L0 20Z" fill="#000"/></svg>
<svg class="r" style="left:26px;top:2597px;" width="36" height="35" viewBox="0 0 36 35"><rect x="3" y="3" width="29" height="29" rx="6" stroke="#fff" stroke-width="4" fill="none" stroke-linecap="round" stroke-linejoin="round"/><path d="M10 11 L16 17 L10 23" stroke="#fff" stroke-width="4" fill="none" stroke-linecap="round" stroke-linejoin="round"/><path d="M20 24 L25 24" stroke="#fff" stroke-width="4" fill="none" stroke-linecap="round" stroke-linejoin="round"/></svg>
<div class="t" style="left:69.5px;top:2600.9px;font-size:25.73px;color:#ffffff;transform:scaleX(0.9539);-webkit-text-stroke:0.45px #ffffff;">CloudShell</div>
<div class="t" style="left:236.1px;top:2600.9px;font-size:25.73px;color:#ffffff;transform:scaleX(0.9134);-webkit-text-stroke:0.45px #ffffff;">Feedback</div>
<div class="t" style="left:1809.2px;top:2599.0px;font-size:28.34px;color:#ffffff;transform:scaleX(0.8557);-webkit-text-stroke:0.45px #ffffff;">© 2024, Amazon Web Services, Inc. or its affiliates.</div>
<div class="t" style="left:2421.6px;top:2599.0px;font-size:28.34px;color:#ffffff;transform:scaleX(0.8549);-webkit-text-stroke:0.45px #ffffff;">Privacy</div>
<div class="t" style="left:2558.5px;top:2599.0px;font-size:28.34px;color:#ffffff;transform:scaleX(0.8266);-webkit-text-stroke:0.45px #ffffff;">Terms</div>
<div class="t" style="left:2678.8px;top:2599.0px;font-size:28.34px;color:#ffffff;transform:scaleX(0.8438);-webkit-text-stroke:0.45px #ffffff;">Cookie preferences</div>
<svg class="r" style="left:2860px;top:166px;" width="36" height="36" viewBox="0 0 36 36"><circle cx="18" cy="18" r="14" stroke="#545b64" stroke-width="3.6" fill="none" stroke-linecap="round" stroke-linejoin="round"/><path d="M18 16 L18 26" stroke="#545b64" stroke-width="3.6" fill="none" stroke-linecap="round" stroke-linejoin="round"/><path d="M18 10.5 L18 11" stroke="#545b64" stroke-width="3.6" fill="none" stroke-linecap="round" stroke-linejoin="round"/></svg>
<svg class="r" style="left:2860px;top:247px;" width="36" height="37" viewBox="0 0 36 37"><path d="M13.5 27 L13.5 23 C9 20.5 6.5 17 6.5 14.5 C6.5 8 11.5 3.5 18 3.5 C24.5 3.5 29.5 8 29.5 14.5 C29.5 17 27 20.5 22.5 23 L22.5 27 Z" stroke="#545b64" stroke-width="3.6" fill="none" stroke-linecap="round" stroke-linejoin="round"/><path d="M13.5 32.5 L22.5 32.5" stroke="#545b64" stroke-width="3.6" fill="none" stroke-linecap="round" stroke-linejoin="round"/></svg>
<svg class="r" style="left:2860px;top:331px;" width="36" height="33" viewBox="0 0 36 33"><path d="M5.5 5 L19 5 L20 8.5 L32 8.5 L32 29 L5.5 29 Z" stroke="#545b64" stroke-width="3.6" fill="none" stroke-linecap="round" stroke-linejoin="round"/></svg>
<svg class="r" style="left:2860px;top:412px;" width="36" height="36" viewBox="0 0 36 36"><circle cx="18" cy="18" r="14" stroke="#545b64" stroke-width="3.6" fill="none" stroke-linecap="round" stroke-linejoin="round"/><path d="M13.5 14.5 C13.5 8.5 22.5 8.5 22.5 14.5 C22.5 18.5 18 18 18 22" stroke="#545b64" stroke-width="3.6" fill="none" stroke-linecap="round" stroke-linejoin="round"/><path d="M18 26.2 L18 26.8" stroke="#545b64" stroke-width="3.6" fill="none" stroke-linecap="round" stroke-linejoin="round"/></svg>
<svg class="r" style="left:2860px;top:494px;" width="36" height="36" viewBox="0 0 36 36"><path d="M18 3.5 L30 10.2 L30 25.8 L18 32.5 L6 25.8 L6 10.2 Z" stroke="#545b64" stroke-width="3.6" fill="none" stroke-linecap="round" stroke-linejoin="round"/><circle cx="18" cy="18" r="3" fill="#545b64"/><path d="M18 18 L29 24" stroke="#545b64" stroke-width="3.6" fill="none" stroke-linecap="round" stroke-linejoin="round"/></svg>
</body></html>
